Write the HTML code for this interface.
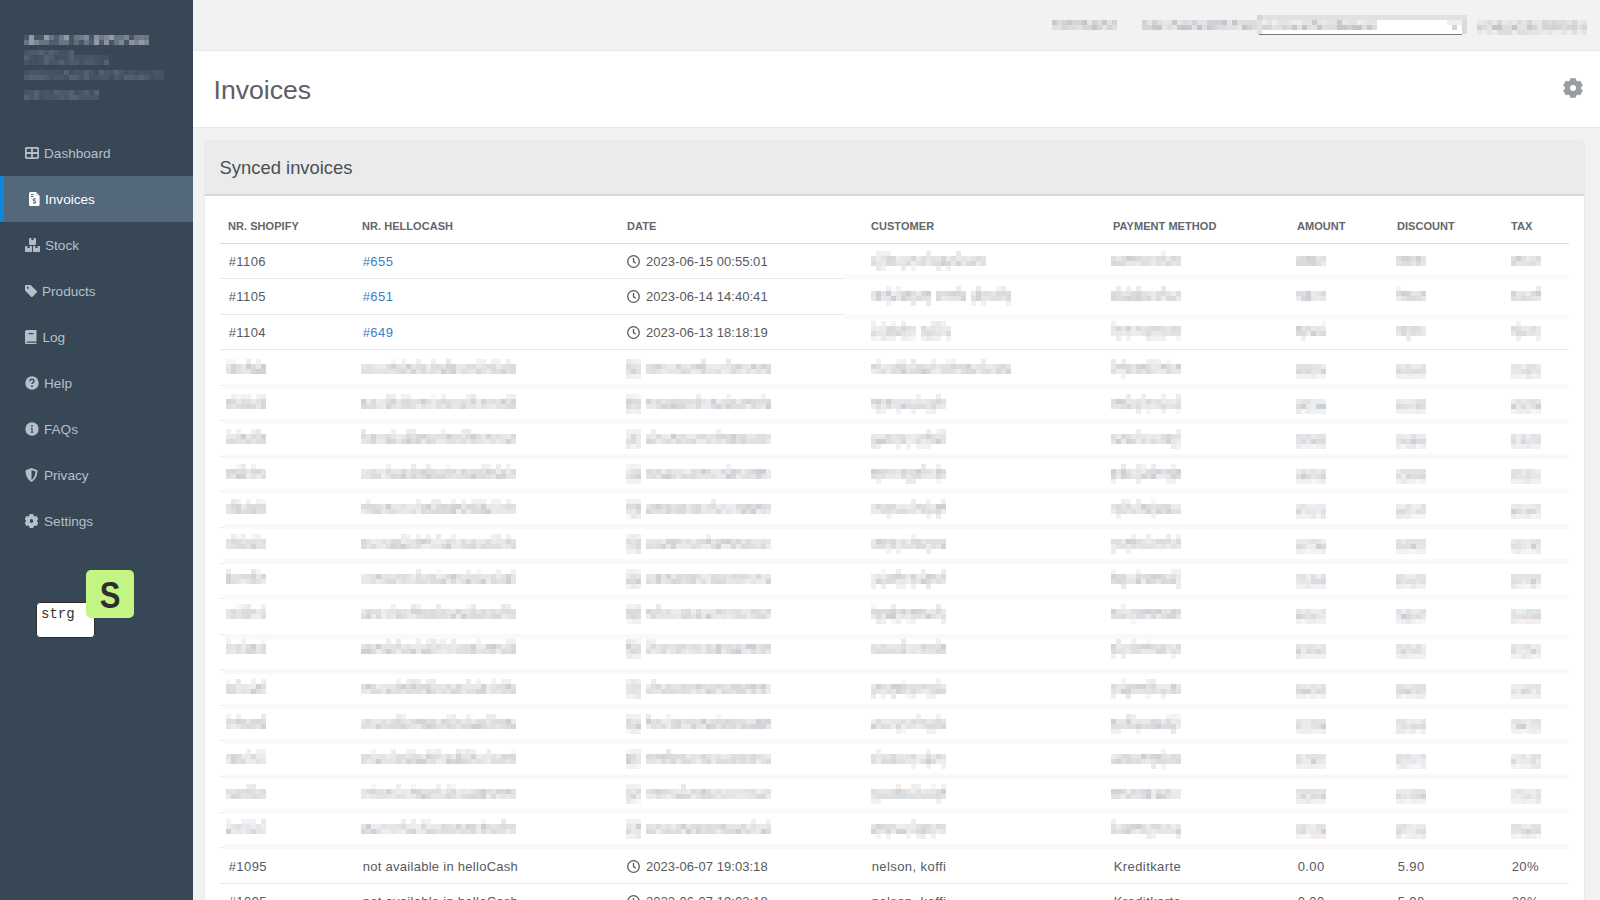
<!DOCTYPE html>
<html><head><meta charset="utf-8">
<style>
*{box-sizing:border-box;margin:0;padding:0}
html,body{width:1600px;height:900px;overflow:hidden;background:#f2f2f2;font-family:"Liberation Sans",sans-serif;color:#555}
#sidebar{position:absolute;left:0;top:0;width:193px;height:900px;background:#374756}
#sidebar .nav{position:absolute;left:0;top:130px;width:193px}
#sidebar .item{position:relative;height:46px;color:#b6c0cb;font-size:13.6px;line-height:46px}
#sidebar .item.active{background:#54687b;color:#fff}
#sidebar .item.active:before{content:"";position:absolute;left:0;top:0;width:4px;height:46px;background:#0a8ad6}
#sidebar .item svg{position:absolute}
#sidebar .item span{position:absolute;left:44px;top:1px}
#topbar{position:absolute;left:193px;top:0;width:1407px;height:51px;background:#f2f2f2;border-bottom:1px solid #e3e6ea}
#titlebar{position:absolute;left:193px;top:51px;width:1407px;height:77px;background:#fff;border-bottom:1px solid #e6e9ed}
#titlebar h1{position:absolute;left:20.5px;top:21.7px;font-weight:normal;font-size:26.6px;color:#5c6064;line-height:34px}
#panel{position:absolute;left:205px;top:140px;width:1379px;height:800px;background:#fff;border-radius:3px;box-shadow:0 1.5px 2px rgba(0,0,0,0.12)}
#panel .ph{height:56px;background:#ebebeb;border-bottom:2px solid #d9d9d9;border-radius:3px 3px 0 0;position:relative}
#panel .ph h2{position:absolute;left:14.6px;top:16px;font-weight:normal;font-size:18.4px;color:#4a4f54;line-height:24px}
table{position:absolute;left:15px;top:71px;width:1349px;border-collapse:collapse;font-size:13px;color:#555a60}
th{font-size:11px;font-weight:bold;text-align:left;padding:8px;line-height:15.71px;color:#63676c;border-bottom:1px solid #dddddd;letter-spacing:0.05px}
td{padding:9px 8px 7px 8px;text-indent:0.7px;letter-spacing:0.42px;line-height:18.571px;border-top:1px solid #e4e7ea;white-space:nowrap}
tr:first-child td{border-top:0}
tr.bl td{border-top-color:transparent}
tr.bl + tr td{border-top-color:transparent}
tr.bl:first-child td, tr.b1 td{border-top-color:#e4e7ea}
td a{color:#3a7ec2;text-decoration:none}
td.dt{letter-spacing:0.05px}
td.nh{letter-spacing:0.28px}
.clk{display:inline-block;vertical-align:-2px;margin-right:6px;margin-left:-0.7px}
#blur{position:absolute;left:0;top:0}
#keys{position:absolute;left:0;top:0}
</style></head><body>
<div id="sidebar">
<svg width="193" height="120" style="position:absolute;left:0;top:0" shape-rendering="crispEdges"><rect x="24" y="35" width="5" height="5" fill="#455668"/><rect x="29" y="35" width="5" height="5" fill="#939aa5"/><rect x="34" y="35" width="5" height="5" fill="#455668"/><rect x="39" y="35" width="5" height="5" fill="#455668"/><rect x="44" y="35" width="5" height="5" fill="#939aa5"/><rect x="49" y="35" width="5" height="5" fill="#6d7380"/><rect x="54" y="35" width="5" height="5" fill="#4e5f70"/><rect x="59" y="35" width="5" height="5" fill="#6f7b86"/><rect x="64" y="35" width="5" height="5" fill="#939aa5"/><rect x="69" y="35" width="5" height="5" fill="#455668"/><rect x="74" y="35" width="5" height="5" fill="#6d7380"/><rect x="79" y="35" width="5" height="5" fill="#6f7b86"/><rect x="84" y="35" width="5" height="5" fill="#7c8894"/><rect x="89" y="35" width="5" height="5" fill="#455668"/><rect x="94" y="35" width="5" height="5" fill="#8a939d"/><rect x="99" y="35" width="5" height="5" fill="#6f7b86"/><rect x="104" y="35" width="5" height="5" fill="#7c8894"/><rect x="109" y="35" width="5" height="5" fill="#939aa5"/><rect x="114" y="35" width="5" height="5" fill="#66757f"/><rect x="119" y="35" width="5" height="5" fill="#6d7380"/><rect x="124" y="35" width="5" height="5" fill="#7a8592"/><rect x="129" y="35" width="5" height="5" fill="#455668"/><rect x="134" y="35" width="5" height="5" fill="#6d7380"/><rect x="139" y="35" width="5" height="5" fill="#6f7b86"/><rect x="144" y="35" width="5" height="5" fill="#6d7380"/><rect x="24" y="40" width="5" height="5" fill="#66757f"/><rect x="29" y="40" width="5" height="5" fill="#939aa5"/><rect x="34" y="40" width="5" height="5" fill="#7c8894"/><rect x="39" y="40" width="5" height="5" fill="#66757f"/><rect x="44" y="40" width="5" height="5" fill="#66757f"/><rect x="49" y="40" width="5" height="5" fill="#4e5f70"/><rect x="54" y="40" width="5" height="5" fill="#4e5f70"/><rect x="59" y="40" width="5" height="5" fill="#6d7380"/><rect x="64" y="40" width="5" height="5" fill="#66757f"/><rect x="69" y="40" width="5" height="5" fill="#455668"/><rect x="74" y="40" width="5" height="5" fill="#5f6c7a"/><rect x="79" y="40" width="5" height="5" fill="#455668"/><rect x="84" y="40" width="5" height="5" fill="#6d7380"/><rect x="89" y="40" width="5" height="5" fill="#4e5f70"/><rect x="94" y="40" width="5" height="5" fill="#939aa5"/><rect x="99" y="40" width="5" height="5" fill="#4e5f70"/><rect x="104" y="40" width="5" height="5" fill="#8a939d"/><rect x="109" y="40" width="5" height="5" fill="#455668"/><rect x="114" y="40" width="5" height="5" fill="#66757f"/><rect x="119" y="40" width="5" height="5" fill="#7c8894"/><rect x="124" y="40" width="5" height="5" fill="#455668"/><rect x="129" y="40" width="5" height="5" fill="#8a939d"/><rect x="134" y="40" width="5" height="5" fill="#7a8592"/><rect x="139" y="40" width="5" height="5" fill="#939aa5"/><rect x="144" y="40" width="5" height="5" fill="#7c8894"/><rect x="24" y="50" width="5" height="5" fill="#455563"/><rect x="29" y="50" width="5" height="5" fill="#4b5b6b"/><rect x="34" y="50" width="5" height="5" fill="#4b5b6b"/><rect x="39" y="50" width="5" height="5" fill="#526273"/><rect x="44" y="50" width="5" height="5" fill="#475767"/><rect x="49" y="50" width="5" height="5" fill="#506172"/><rect x="54" y="50" width="5" height="5" fill="#4b5b6b"/><rect x="59" y="50" width="5" height="5" fill="#425364"/><rect x="64" y="50" width="5" height="5" fill="#425364"/><rect x="69" y="50" width="5" height="5" fill="#506172"/><rect x="24" y="55" width="5" height="5" fill="#526273"/><rect x="29" y="55" width="5" height="5" fill="#425364"/><rect x="34" y="55" width="5" height="5" fill="#405063"/><rect x="39" y="55" width="5" height="5" fill="#425364"/><rect x="44" y="55" width="5" height="5" fill="#526273"/><rect x="49" y="55" width="5" height="5" fill="#4b5b6b"/><rect x="54" y="55" width="5" height="5" fill="#405063"/><rect x="59" y="55" width="5" height="5" fill="#425364"/><rect x="64" y="55" width="5" height="5" fill="#425364"/><rect x="69" y="55" width="5" height="5" fill="#526273"/><rect x="74" y="55" width="5" height="5" fill="#455563"/><rect x="79" y="55" width="5" height="5" fill="#425364"/><rect x="84" y="55" width="5" height="5" fill="#475767"/><rect x="89" y="55" width="5" height="5" fill="#475767"/><rect x="94" y="55" width="5" height="5" fill="#425364"/><rect x="99" y="55" width="5" height="5" fill="#405063"/><rect x="104" y="55" width="5" height="5" fill="#405063"/><rect x="24" y="60" width="5" height="5" fill="#455563"/><rect x="29" y="60" width="5" height="5" fill="#405063"/><rect x="34" y="60" width="5" height="5" fill="#405063"/><rect x="39" y="60" width="5" height="5" fill="#425364"/><rect x="44" y="60" width="5" height="5" fill="#506172"/><rect x="49" y="60" width="5" height="5" fill="#455563"/><rect x="54" y="60" width="5" height="5" fill="#475767"/><rect x="59" y="60" width="5" height="5" fill="#526273"/><rect x="64" y="60" width="5" height="5" fill="#455563"/><rect x="69" y="60" width="5" height="5" fill="#4b5b6b"/><rect x="74" y="60" width="5" height="5" fill="#4b5b6b"/><rect x="79" y="60" width="5" height="5" fill="#425364"/><rect x="84" y="60" width="5" height="5" fill="#4b5b6b"/><rect x="89" y="60" width="5" height="5" fill="#4b5b6b"/><rect x="94" y="60" width="5" height="5" fill="#425364"/><rect x="99" y="60" width="5" height="5" fill="#405063"/><rect x="104" y="60" width="5" height="5" fill="#526273"/><rect x="24" y="70" width="5" height="5" fill="#425364"/><rect x="29" y="70" width="5" height="5" fill="#475767"/><rect x="34" y="70" width="5" height="5" fill="#475767"/><rect x="39" y="70" width="5" height="5" fill="#455563"/><rect x="44" y="70" width="5" height="5" fill="#425364"/><rect x="49" y="70" width="5" height="5" fill="#425364"/><rect x="54" y="70" width="5" height="5" fill="#425364"/><rect x="59" y="70" width="5" height="5" fill="#405063"/><rect x="64" y="70" width="5" height="5" fill="#526273"/><rect x="69" y="70" width="5" height="5" fill="#405063"/><rect x="74" y="70" width="5" height="5" fill="#475767"/><rect x="79" y="70" width="5" height="5" fill="#455563"/><rect x="84" y="70" width="5" height="5" fill="#506172"/><rect x="89" y="70" width="5" height="5" fill="#475767"/><rect x="94" y="70" width="5" height="5" fill="#405063"/><rect x="99" y="70" width="5" height="5" fill="#506172"/><rect x="104" y="70" width="5" height="5" fill="#475767"/><rect x="109" y="70" width="5" height="5" fill="#455563"/><rect x="114" y="70" width="5" height="5" fill="#526273"/><rect x="119" y="70" width="5" height="5" fill="#475767"/><rect x="124" y="70" width="5" height="5" fill="#405063"/><rect x="129" y="70" width="5" height="5" fill="#455563"/><rect x="134" y="70" width="5" height="5" fill="#405063"/><rect x="139" y="70" width="5" height="5" fill="#425364"/><rect x="144" y="70" width="5" height="5" fill="#405063"/><rect x="149" y="70" width="5" height="5" fill="#405063"/><rect x="154" y="70" width="5" height="5" fill="#475767"/><rect x="159" y="70" width="5" height="5" fill="#425364"/><rect x="24" y="75" width="5" height="5" fill="#4b5b6b"/><rect x="29" y="75" width="5" height="5" fill="#526273"/><rect x="34" y="75" width="5" height="5" fill="#526273"/><rect x="39" y="75" width="5" height="5" fill="#506172"/><rect x="44" y="75" width="5" height="5" fill="#4b5b6b"/><rect x="49" y="75" width="5" height="5" fill="#425364"/><rect x="54" y="75" width="5" height="5" fill="#475767"/><rect x="59" y="75" width="5" height="5" fill="#475767"/><rect x="64" y="75" width="5" height="5" fill="#405063"/><rect x="69" y="75" width="5" height="5" fill="#526273"/><rect x="74" y="75" width="5" height="5" fill="#506172"/><rect x="79" y="75" width="5" height="5" fill="#455563"/><rect x="84" y="75" width="5" height="5" fill="#506172"/><rect x="89" y="75" width="5" height="5" fill="#425364"/><rect x="94" y="75" width="5" height="5" fill="#425364"/><rect x="99" y="75" width="5" height="5" fill="#475767"/><rect x="104" y="75" width="5" height="5" fill="#475767"/><rect x="109" y="75" width="5" height="5" fill="#405063"/><rect x="114" y="75" width="5" height="5" fill="#4b5b6b"/><rect x="119" y="75" width="5" height="5" fill="#425364"/><rect x="124" y="75" width="5" height="5" fill="#526273"/><rect x="129" y="75" width="5" height="5" fill="#506172"/><rect x="134" y="75" width="5" height="5" fill="#4b5b6b"/><rect x="139" y="75" width="5" height="5" fill="#526273"/><rect x="144" y="75" width="5" height="5" fill="#4b5b6b"/><rect x="149" y="75" width="5" height="5" fill="#405063"/><rect x="154" y="75" width="5" height="5" fill="#425364"/><rect x="159" y="75" width="5" height="5" fill="#425364"/><rect x="24" y="90" width="5" height="5" fill="#425364"/><rect x="29" y="90" width="5" height="5" fill="#475767"/><rect x="34" y="90" width="5" height="5" fill="#506172"/><rect x="39" y="90" width="5" height="5" fill="#455563"/><rect x="44" y="90" width="5" height="5" fill="#475767"/><rect x="49" y="90" width="5" height="5" fill="#425364"/><rect x="54" y="90" width="5" height="5" fill="#506172"/><rect x="59" y="90" width="5" height="5" fill="#4b5b6b"/><rect x="64" y="90" width="5" height="5" fill="#4b5b6b"/><rect x="69" y="90" width="5" height="5" fill="#506172"/><rect x="74" y="90" width="5" height="5" fill="#405063"/><rect x="79" y="90" width="5" height="5" fill="#475767"/><rect x="84" y="90" width="5" height="5" fill="#506172"/><rect x="89" y="90" width="5" height="5" fill="#405063"/><rect x="94" y="90" width="5" height="5" fill="#526273"/><rect x="24" y="95" width="5" height="5" fill="#506172"/><rect x="29" y="95" width="5" height="5" fill="#475767"/><rect x="34" y="95" width="5" height="5" fill="#526273"/><rect x="39" y="95" width="5" height="5" fill="#405063"/><rect x="44" y="95" width="5" height="5" fill="#475767"/><rect x="49" y="95" width="5" height="5" fill="#455563"/><rect x="54" y="95" width="5" height="5" fill="#475767"/><rect x="59" y="95" width="5" height="5" fill="#4b5b6b"/><rect x="64" y="95" width="5" height="5" fill="#475767"/><rect x="69" y="95" width="5" height="5" fill="#526273"/><rect x="74" y="95" width="5" height="5" fill="#506172"/><rect x="79" y="95" width="5" height="5" fill="#475767"/><rect x="84" y="95" width="5" height="5" fill="#455563"/><rect x="89" y="95" width="5" height="5" fill="#475767"/><rect x="94" y="95" width="5" height="5" fill="#475767"/></svg>
<div class="nav">
 <div class="item"><svg style="left:25px;top:17px" width="14" height="12" viewBox="0 0 14 12"><rect x="0.8" y="0.8" width="12.4" height="10.4" rx="1.5" fill="none" stroke="#b6c0cb" stroke-width="1.8"/><path d="M7 1v10M1 6h12" stroke="#b6c0cb" stroke-width="1.8"/></svg><span>Dashboard</span></div>
 <div class="item active"><svg style="left:28.5px;top:16px" width="11" height="14" viewBox="0 0 11 14"><path d="M1.6 0H6.9L10.6 3.7V12.4A1.6 1.6 0 0 1 9 14H1.6A1.6 1.6 0 0 1 0 12.4V1.6A1.6 1.6 0 0 1 1.6 0Z" fill="#fff"/><path d="M7.2 0.6V3.4H10" fill="none" stroke="#c9d1da" stroke-width="0.7"/><rect x="2" y="2" width="2.6" height="1" fill="#54687b"/><rect x="2" y="4" width="2.6" height="1" fill="#54687b"/><path d="M6.6 7.3C6.3 6.9 5.8 6.8 5.3 6.8 4.6 6.8 4.1 7.2 4.1 7.8 4.1 8.4 4.7 8.6 5.3 8.8 6 9 6.6 9.2 6.6 9.9 6.6 10.5 6 10.9 5.3 10.9 4.8 10.9 4.3 10.7 4 10.3M5.3 6V6.8M5.3 10.9V11.7" fill="none" stroke="#54687b" stroke-width="1.1"/></svg><span style="left:45px">Invoices</span></div>
 <div class="item"><svg style="left:25px;top:16px" width="15" height="14" viewBox="0 0 15 14"><path d="M4.8 0h1.6v2h2.2V0h1.6a.8.8 0 0 1 .8.8v5.4a.8.8 0 0 1-.8.8H4.8a.8.8 0 0 1-.8-.8V.8a.8.8 0 0 1 .8-.8zM.8 8h1.6v2h2.2V8h1.6a.8.8 0 0 1 .8.8v4.4a.8.8 0 0 1-.8.8H.8a.8.8 0 0 1-.8-.8V8.8A.8.8 0 0 1 .8 8zM8.8 8h1.6v2h2.2V8h1.6a.8.8 0 0 1 .8.8v4.4a.8.8 0 0 1-.8.8H8.8a.8.8 0 0 1-.8-.8V8.8a.8.8 0 0 1 .8-.8z" fill="#b0bbc8"/></svg><span style="left:45px">Stock</span></div>
 <div class="item"><svg style="left:25px;top:17px" width="12" height="12" viewBox="0 0 12 12"><path d="M0 1a1 1 0 0 1 1-1h4.6l6.1 6.1a1 1 0 0 1 0 1.4l-4.2 4.2a1 1 0 0 1-1.4 0L0 5.6z" fill="#b6c0cb"/><circle cx="2.8" cy="2.8" r="1" fill="#374756"/></svg><span style="left:42px">Products</span></div>
 <div class="item"><svg style="left:25px;top:16px" width="12" height="14" viewBox="0 0 12 14"><path d="M1.5 0h10v11.5h-9.5a.8.8 0 0 0 0 1.3h9.5v1.2h-10a1.5 1.5 0 0 1-1.5-1.5v-11a1.5 1.5 0 0 1 1.5-1.5z" fill="#b6c0cb"/><rect x="3.5" y="3" width="5" height="1.2" fill="#374756"/></svg><span style="left:42.5px">Log</span></div>
 <div class="item"><svg style="left:25px;top:16px" width="14" height="14" viewBox="0 0 14 14"><circle cx="7" cy="7" r="6.7" fill="#b6c0cb"/><path d="M5 5.3a2 2 0 0 1 4 0c0 1.3-2 1.4-2 2.7" stroke="#374756" stroke-width="1.4" fill="none"/><circle cx="7" cy="10.2" r=".9" fill="#374756"/></svg><span>Help</span></div>
 <div class="item"><svg style="left:25px;top:16px" width="14" height="14" viewBox="0 0 14 14"><circle cx="7" cy="7" r="6.7" fill="#b6c0cb"/><circle cx="7" cy="4" r=".9" fill="#374756"/><path d="M5.8 6h1.8v3.8h.8v.9H5.6v-.9h.9V6.9h-.7z" fill="#374756"/></svg><span>FAQs</span></div>
 <div class="item"><svg style="left:25px;top:16px" width="13" height="14" viewBox="0 0 13 14"><path d="M6.5 0l6 2.2c0 5.3-2.2 9.5-6 11.8-3.8-2.3-6-6.5-6-11.8z" fill="#b6c0cb"/><path d="M6.5 2l4 1.5c-.2 3.7-1.6 6.8-4 8.6z" fill="#374756"/></svg><span>Privacy</span></div>
 <div class="item"><svg style="left:25px;top:16px" width="13" height="14" viewBox="0 0 13 14"><path d="M4.10 2.00L4.80 0.10L8.20 0.10L8.90 2.00A5 5 0 0 1 9.63 2.42L11.63 2.08L13.33 5.02L12.03 6.58A5 5 0 0 1 12.03 7.42L13.33 8.98L11.63 11.92L9.63 11.58A5 5 0 0 1 8.90 12.00L8.20 13.90L4.80 13.90L4.10 12.00A5 5 0 0 1 3.37 11.58L1.37 11.92L-0.33 8.98L0.97 7.42A5 5 0 0 1 0.97 6.58L-0.33 5.02L1.37 2.08L3.37 2.42A5 5 0 0 1 4.10 2.00Z" fill="#b6c0cb"/><ellipse cx="6.5" cy="7" rx="1.7" ry="2" fill="#374756"/></svg><span>Settings</span></div>
</div>
<div style="position:absolute;left:36px;top:602px;width:59px;height:36px;background:#fff;border:1px solid #2f2f2f;border-radius:4px"><span style="position:absolute;left:4px;top:2px;font-family:'Liberation Mono',monospace;font-size:14px;color:#333;line-height:18px">strg</span></div>
<div style="position:absolute;left:86px;top:570px;width:48px;height:48px;background:#c2f584;border-radius:5px;text-align:center"><span style="position:absolute;left:0;width:48px;top:6px;font-size:36px;line-height:40px;color:#2e2e2e;font-weight:bold;transform:scaleX(0.86)">S</span></div>
</div>

<div id="topbar"><svg width="1407" height="50" style="position:absolute;left:-193px;top:0;overflow:visible" shape-rendering="crispEdges">
<rect x="1257" y="15" width="210" height="19" fill="#e1e1e1"/><rect x="1257" y="15" width="5" height="5" fill="#d4d4d4"/><rect x="1462" y="20" width="5" height="14" fill="#dadada"/><rect x="1262" y="20" width="200" height="14" fill="#fff"/>
<rect x="1052" y="20" width="5" height="5" fill="#c8c9cd"/><rect x="1057" y="20" width="5" height="5" fill="#dcdcdc"/><rect x="1062" y="20" width="5" height="5" fill="#d4d4d6"/><rect x="1067" y="20" width="5" height="5" fill="#c8c9cd"/><rect x="1072" y="20" width="5" height="5" fill="#d8d4d0"/><rect x="1077" y="20" width="5" height="5" fill="#d8d4d0"/><rect x="1082" y="20" width="5" height="5" fill="#c4c6cb"/><rect x="1087" y="20" width="5" height="5" fill="#e6e6e6"/><rect x="1092" y="20" width="5" height="5" fill="#cfd2d6"/><rect x="1097" y="20" width="5" height="5" fill="#e0dfdd"/><rect x="1102" y="20" width="5" height="5" fill="#c8c9cd"/><rect x="1107" y="20" width="5" height="5" fill="#dfe2e6"/><rect x="1112" y="20" width="5" height="5" fill="#d4d4d6"/><rect x="1052" y="25" width="5" height="5" fill="#e0dfdd"/><rect x="1057" y="25" width="5" height="5" fill="#dfe2e6"/><rect x="1062" y="25" width="5" height="5" fill="#d4d4d6"/><rect x="1067" y="25" width="5" height="5" fill="#dcdcdc"/><rect x="1072" y="25" width="5" height="5" fill="#dcdcdc"/><rect x="1077" y="25" width="5" height="5" fill="#dfe2e6"/><rect x="1082" y="25" width="5" height="5" fill="#d8d4d0"/><rect x="1087" y="25" width="5" height="5" fill="#d4d4d6"/><rect x="1092" y="25" width="5" height="5" fill="#c4c6cb"/><rect x="1097" y="25" width="5" height="5" fill="#d8d4d0"/><rect x="1102" y="25" width="5" height="5" fill="#e6e6e6"/><rect x="1107" y="25" width="5" height="5" fill="#d4d4d6"/><rect x="1112" y="25" width="5" height="5" fill="#e0dfdd"/><rect x="1142" y="20" width="5" height="5" fill="#d4d4d6"/><rect x="1147" y="20" width="5" height="5" fill="#e6e6e6"/><rect x="1152" y="20" width="5" height="5" fill="#cfd2d6"/><rect x="1157" y="20" width="5" height="5" fill="#e0dfdd"/><rect x="1162" y="20" width="5" height="5" fill="#e6e6e6"/><rect x="1167" y="20" width="5" height="5" fill="#e6e6e6"/><rect x="1172" y="20" width="5" height="5" fill="#c8c9cd"/><rect x="1177" y="20" width="5" height="5" fill="#e6e6e6"/><rect x="1182" y="20" width="5" height="5" fill="#dcdcdc"/><rect x="1187" y="20" width="5" height="5" fill="#dfe2e6"/><rect x="1192" y="20" width="5" height="5" fill="#cfd2d6"/><rect x="1197" y="20" width="5" height="5" fill="#dfe2e6"/><rect x="1202" y="20" width="5" height="5" fill="#dfe2e6"/><rect x="1207" y="20" width="5" height="5" fill="#cfd2d6"/><rect x="1212" y="20" width="5" height="5" fill="#cfd2d6"/><rect x="1217" y="20" width="5" height="5" fill="#cfd2d6"/><rect x="1222" y="20" width="5" height="5" fill="#c4c6cb"/><rect x="1227" y="20" width="5" height="5" fill="#e6e6e6"/><rect x="1232" y="20" width="5" height="5" fill="#c4c6cb"/><rect x="1237" y="20" width="5" height="5" fill="#e0dfdd"/><rect x="1242" y="20" width="5" height="5" fill="#dcdcdc"/><rect x="1247" y="20" width="5" height="5" fill="#dcdcdc"/><rect x="1252" y="20" width="5" height="5" fill="#dcdcdc"/><rect x="1142" y="25" width="5" height="5" fill="#d8d4d0"/><rect x="1147" y="25" width="5" height="5" fill="#d4d4d6"/><rect x="1152" y="25" width="5" height="5" fill="#c8c9cd"/><rect x="1157" y="25" width="5" height="5" fill="#c8c9cd"/><rect x="1162" y="25" width="5" height="5" fill="#e6e6e6"/><rect x="1167" y="25" width="5" height="5" fill="#dcdcdc"/><rect x="1172" y="25" width="5" height="5" fill="#e6e6e6"/><rect x="1177" y="25" width="5" height="5" fill="#c8c9cd"/><rect x="1182" y="25" width="5" height="5" fill="#c4c6cb"/><rect x="1187" y="25" width="5" height="5" fill="#c8c9cd"/><rect x="1192" y="25" width="5" height="5" fill="#dfe2e6"/><rect x="1197" y="25" width="5" height="5" fill="#c4c6cb"/><rect x="1202" y="25" width="5" height="5" fill="#e0dfdd"/><rect x="1207" y="25" width="5" height="5" fill="#c8c9cd"/><rect x="1212" y="25" width="5" height="5" fill="#cfd2d6"/><rect x="1217" y="25" width="5" height="5" fill="#dcdcdc"/><rect x="1222" y="25" width="5" height="5" fill="#dcdcdc"/><rect x="1227" y="25" width="5" height="5" fill="#dfe2e6"/><rect x="1232" y="25" width="5" height="5" fill="#e0dfdd"/><rect x="1237" y="25" width="5" height="5" fill="#e6e6e6"/><rect x="1242" y="25" width="5" height="5" fill="#c4c6cb"/><rect x="1247" y="25" width="5" height="5" fill="#cfd2d6"/><rect x="1252" y="25" width="5" height="5" fill="#dcdcdc"/><rect x="1262" y="20" width="5" height="5" fill="#eeeeee"/><rect x="1267" y="20" width="5" height="5" fill="#e6e4e2"/><rect x="1272" y="20" width="5" height="5" fill="#eeeeee"/><rect x="1277" y="20" width="5" height="5" fill="#e4e4e4"/><rect x="1282" y="20" width="5" height="5" fill="#e4e4e4"/><rect x="1287" y="20" width="5" height="5" fill="#e8e8ea"/><rect x="1292" y="20" width="5" height="5" fill="#eeeeee"/><rect x="1297" y="20" width="5" height="5" fill="#eeeeee"/><rect x="1302" y="20" width="5" height="5" fill="#e4e4e4"/><rect x="1307" y="20" width="5" height="5" fill="#e6e4e2"/><rect x="1312" y="20" width="5" height="5" fill="#c9cad0"/><rect x="1317" y="20" width="5" height="5" fill="#e6e4e2"/><rect x="1322" y="20" width="5" height="5" fill="#e8e8ea"/><rect x="1327" y="20" width="5" height="5" fill="#e4e4e4"/><rect x="1332" y="20" width="5" height="5" fill="#e6e4e2"/><rect x="1337" y="20" width="5" height="5" fill="#c9cad0"/><rect x="1342" y="20" width="5" height="5" fill="#e8e8ea"/><rect x="1347" y="20" width="5" height="5" fill="#e4e4e4"/><rect x="1352" y="20" width="5" height="5" fill="#e4e2e0"/><rect x="1357" y="20" width="5" height="5" fill="#eeeeee"/><rect x="1362" y="20" width="5" height="5" fill="#e8e8ea"/><rect x="1367" y="20" width="5" height="5" fill="#e4e4e4"/><rect x="1372" y="20" width="5" height="5" fill="#e2e6e8"/><rect x="1262" y="25" width="5" height="5" fill="#d4d4d6"/><rect x="1267" y="25" width="5" height="5" fill="#d8d4d0"/><rect x="1272" y="25" width="5" height="5" fill="#dfe2e6"/><rect x="1277" y="25" width="5" height="5" fill="#e0dfdd"/><rect x="1282" y="25" width="5" height="5" fill="#d4d4d6"/><rect x="1287" y="25" width="5" height="5" fill="#dcdcdc"/><rect x="1292" y="25" width="5" height="5" fill="#c8c9cd"/><rect x="1297" y="25" width="5" height="5" fill="#dfe2e6"/><rect x="1302" y="25" width="5" height="5" fill="#c4c6cb"/><rect x="1307" y="25" width="5" height="5" fill="#e0dfdd"/><rect x="1312" y="25" width="5" height="5" fill="#dfe2e6"/><rect x="1317" y="25" width="5" height="5" fill="#c8c9cd"/><rect x="1322" y="25" width="5" height="5" fill="#e0dfdd"/><rect x="1327" y="25" width="5" height="5" fill="#dcdcdc"/><rect x="1332" y="25" width="5" height="5" fill="#dcdcdc"/><rect x="1337" y="25" width="5" height="5" fill="#c4c6cb"/><rect x="1342" y="25" width="5" height="5" fill="#c4c6cb"/><rect x="1347" y="25" width="5" height="5" fill="#cfd2d6"/><rect x="1352" y="25" width="5" height="5" fill="#c4c6cb"/><rect x="1357" y="25" width="5" height="5" fill="#c4c6cb"/><rect x="1362" y="25" width="5" height="5" fill="#e0dfdd"/><rect x="1367" y="25" width="5" height="5" fill="#c8c9cd"/><rect x="1372" y="25" width="5" height="5" fill="#dcdcdc"/><rect x="1477" y="20" width="5" height="5" fill="#e8e8e8"/><rect x="1482" y="20" width="5" height="5" fill="#e4e4e4"/><rect x="1487" y="20" width="5" height="5" fill="#dcdcdc"/><rect x="1492" y="20" width="5" height="5" fill="#e8e8e8"/><rect x="1497" y="20" width="5" height="5" fill="#d4d6da"/><rect x="1502" y="20" width="5" height="5" fill="#e8e8e8"/><rect x="1507" y="20" width="5" height="5" fill="#e4e4e4"/><rect x="1512" y="20" width="5" height="5" fill="#e8e8e8"/><rect x="1517" y="20" width="5" height="5" fill="#dcdcdc"/><rect x="1522" y="20" width="5" height="5" fill="#e4e4e4"/><rect x="1527" y="20" width="5" height="5" fill="#d4d6da"/><rect x="1532" y="20" width="5" height="5" fill="#e8e8e8"/><rect x="1537" y="20" width="5" height="5" fill="#e8e8e8"/><rect x="1542" y="20" width="5" height="5" fill="#d4d6da"/><rect x="1547" y="20" width="5" height="5" fill="#dcdcdc"/><rect x="1552" y="20" width="5" height="5" fill="#d4d6da"/><rect x="1557" y="20" width="5" height="5" fill="#dcdcdc"/><rect x="1562" y="20" width="5" height="5" fill="#dcdcdc"/><rect x="1567" y="20" width="5" height="5" fill="#e4e4e4"/><rect x="1572" y="20" width="5" height="5" fill="#d4d6da"/><rect x="1577" y="20" width="5" height="5" fill="#e8e8e8"/><rect x="1582" y="20" width="5" height="5" fill="#e4e4e4"/><rect x="1477" y="25" width="5" height="5" fill="#cfd2d6"/><rect x="1482" y="25" width="5" height="5" fill="#dcdcdc"/><rect x="1487" y="25" width="5" height="5" fill="#e6e6e6"/><rect x="1492" y="25" width="5" height="5" fill="#c4c6cb"/><rect x="1497" y="25" width="5" height="5" fill="#c4c6cb"/><rect x="1502" y="25" width="5" height="5" fill="#dcdcdc"/><rect x="1507" y="25" width="5" height="5" fill="#e0dfdd"/><rect x="1512" y="25" width="5" height="5" fill="#c4c6cb"/><rect x="1517" y="25" width="5" height="5" fill="#dfe2e6"/><rect x="1522" y="25" width="5" height="5" fill="#dfe2e6"/><rect x="1527" y="25" width="5" height="5" fill="#c8c9cd"/><rect x="1532" y="25" width="5" height="5" fill="#d4d4d6"/><rect x="1537" y="25" width="5" height="5" fill="#e6e6e6"/><rect x="1542" y="25" width="5" height="5" fill="#d8d4d0"/><rect x="1547" y="25" width="5" height="5" fill="#d4d4d6"/><rect x="1552" y="25" width="5" height="5" fill="#cfd2d6"/><rect x="1557" y="25" width="5" height="5" fill="#d8d4d0"/><rect x="1562" y="25" width="5" height="5" fill="#e0dfdd"/><rect x="1567" y="25" width="5" height="5" fill="#d4d4d6"/><rect x="1572" y="25" width="5" height="5" fill="#cfd2d6"/><rect x="1577" y="25" width="5" height="5" fill="#dfe2e6"/><rect x="1582" y="25" width="5" height="5" fill="#d8d4d0"/><rect x="1477" y="30" width="5" height="5" fill="#e6e6e6"/><rect x="1482" y="30" width="5" height="5" fill="#eeeeee"/><rect x="1487" y="30" width="5" height="5" fill="#e2e4e6"/><rect x="1492" y="30" width="5" height="5" fill="#eeeeee"/><rect x="1497" y="30" width="5" height="5" fill="#dedede"/><rect x="1502" y="30" width="5" height="5" fill="#dedede"/><rect x="1507" y="30" width="5" height="5" fill="#dedede"/><rect x="1512" y="30" width="5" height="5" fill="#ebebeb"/><rect x="1517" y="30" width="5" height="5" fill="#dedede"/><rect x="1522" y="30" width="5" height="5" fill="#dedede"/><rect x="1527" y="30" width="5" height="5" fill="#e2e4e6"/><rect x="1532" y="30" width="5" height="5" fill="#e2e4e6"/><rect x="1537" y="30" width="5" height="5" fill="#e6e6e6"/><rect x="1542" y="30" width="5" height="5" fill="#ebebeb"/><rect x="1547" y="30" width="5" height="5" fill="#e6e6e6"/><rect x="1552" y="30" width="5" height="5" fill="#eeeeee"/><rect x="1557" y="30" width="5" height="5" fill="#eeeeee"/><rect x="1562" y="30" width="5" height="5" fill="#e6e6e6"/><rect x="1567" y="30" width="5" height="5" fill="#eeeeee"/><rect x="1572" y="30" width="5" height="5" fill="#dedede"/><rect x="1577" y="30" width="5" height="5" fill="#eeeeee"/><rect x="1582" y="30" width="5" height="5" fill="#e2e4e6"/>
<rect x="1447" y="20" width="15" height="5" fill="#eef0ef"/><rect x="1452" y="25" width="5" height="5" fill="#d3d5d9"/>
<rect x="1259" y="34" width="203" height="1" fill="#777"/>
</svg></div>

<div id="titlebar"><h1>Invoices</h1>
<svg style="position:absolute;left:1370px;top:27px" width="20" height="20" viewBox="0 0 20 20"><path d="M6.70 2.90L7.60 0.40L12.40 0.40L13.30 2.90A7.1 7.1 0 0 1 14.50 3.59L17.11 3.12L19.51 7.28L17.80 9.31A7.1 7.1 0 0 1 17.80 10.69L19.51 12.72L17.11 16.88L14.50 16.41A7.1 7.1 0 0 1 13.30 17.10L12.40 19.60L7.60 19.60L6.70 17.10A7.1 7.1 0 0 1 5.50 16.41L2.89 16.88L0.49 12.72L2.20 10.69A7.1 7.1 0 0 1 2.20 9.31L0.49 7.28L2.89 3.12L5.50 3.59A7.1 7.1 0 0 1 6.70 2.90Z" stroke="#999da1" stroke-width="0.6" stroke-linejoin="round" fill="#999da1"/><circle cx="10" cy="10" r="3.0" fill="#fff"/></svg>
</div>

<div id="panel">
 <div class="ph"><h2>Synced invoices</h2></div>
 <table>
  <thead><tr><th style="width:134px">NR. SHOPIFY</th><th style="width:265px">NR. HELLOCASH</th><th style="width:244px">DATE</th><th style="width:242px">CUSTOMER</th><th style="width:184px">PAYMENT METHOD</th><th style="width:100px">AMOUNT</th><th style="width:114px">DISCOUNT</th><th>TAX</th></tr></thead>
  <tbody>
<tr><td>#1106</td><td><a>#655</a></td><td class="dt"><svg class="clk" width="13" height="13" viewBox="0 0 13 13"><circle cx="6.5" cy="6.5" r="5.8" fill="none" stroke="#555a60" stroke-width="1.3"/><path d="M6.5 3v3.6l2.3 1.6" fill="none" stroke="#555a60" stroke-width="1.3"/></svg>2023-06-15 00:55:01</td><td></td><td></td><td></td><td></td><td></td></tr>
<tr><td>#1105</td><td><a>#651</a></td><td class="dt"><svg class="clk" width="13" height="13" viewBox="0 0 13 13"><circle cx="6.5" cy="6.5" r="5.8" fill="none" stroke="#555a60" stroke-width="1.3"/><path d="M6.5 3v3.6l2.3 1.6" fill="none" stroke="#555a60" stroke-width="1.3"/></svg>2023-06-14 14:40:41</td><td></td><td></td><td></td><td></td><td></td></tr>
<tr><td>#1104</td><td><a>#649</a></td><td class="dt"><svg class="clk" width="13" height="13" viewBox="0 0 13 13"><circle cx="6.5" cy="6.5" r="5.8" fill="none" stroke="#555a60" stroke-width="1.3"/><path d="M6.5 3v3.6l2.3 1.6" fill="none" stroke="#555a60" stroke-width="1.3"/></svg>2023-06-13 18:18:19</td><td></td><td></td><td></td><td></td><td></td></tr>
<tr class="bl b1"><td>&nbsp;</td><td></td><td></td><td></td><td></td><td></td><td></td><td></td></tr>
<tr class="bl"><td>&nbsp;</td><td></td><td></td><td></td><td></td><td></td><td></td><td></td></tr>
<tr class="bl"><td>&nbsp;</td><td></td><td></td><td></td><td></td><td></td><td></td><td></td></tr>
<tr class="bl"><td>&nbsp;</td><td></td><td></td><td></td><td></td><td></td><td></td><td></td></tr>
<tr class="bl"><td>&nbsp;</td><td></td><td></td><td></td><td></td><td></td><td></td><td></td></tr>
<tr class="bl"><td>&nbsp;</td><td></td><td></td><td></td><td></td><td></td><td></td><td></td></tr>
<tr class="bl"><td>&nbsp;</td><td></td><td></td><td></td><td></td><td></td><td></td><td></td></tr>
<tr class="bl"><td>&nbsp;</td><td></td><td></td><td></td><td></td><td></td><td></td><td></td></tr>
<tr class="bl"><td>&nbsp;</td><td></td><td></td><td></td><td></td><td></td><td></td><td></td></tr>
<tr class="bl"><td>&nbsp;</td><td></td><td></td><td></td><td></td><td></td><td></td><td></td></tr>
<tr class="bl"><td>&nbsp;</td><td></td><td></td><td></td><td></td><td></td><td></td><td></td></tr>
<tr class="bl"><td>&nbsp;</td><td></td><td></td><td></td><td></td><td></td><td></td><td></td></tr>
<tr class="bl"><td>&nbsp;</td><td></td><td></td><td></td><td></td><td></td><td></td><td></td></tr>
<tr class="bl"><td>&nbsp;</td><td></td><td></td><td></td><td></td><td></td><td></td><td></td></tr>
<tr><td>#1095</td><td class="nh">not available in helloCash</td><td class="dt"><svg class="clk" width="13" height="13" viewBox="0 0 13 13"><circle cx="6.5" cy="6.5" r="5.8" fill="none" stroke="#555a60" stroke-width="1.3"/><path d="M6.5 3v3.6l2.3 1.6" fill="none" stroke="#555a60" stroke-width="1.3"/></svg>2023-06-07 19:03:18</td><td>nelson, koffi</td><td>Kreditkarte</td><td>0.00</td><td>5.90</td><td>20%</td></tr>
<tr><td>#1095</td><td class="nh">not available in helloCash</td><td class="dt"><svg class="clk" width="13" height="13" viewBox="0 0 13 13"><circle cx="6.5" cy="6.5" r="5.8" fill="none" stroke="#555a60" stroke-width="1.3"/><path d="M6.5 3v3.6l2.3 1.6" fill="none" stroke="#555a60" stroke-width="1.3"/></svg>2023-06-07 19:03:18</td><td>nelson, koffi</td><td>Kreditkarte</td><td>0.00</td><td>5.90</td><td>20%</td></tr>
  </tbody>
 </table>
</div>
<svg id="blur" width="1600" height="900" shape-rendering="crispEdges"><rect x="871" y="256" width="5" height="5" fill="#e4e4e4"/><rect x="871" y="261" width="5" height="5" fill="#e2dfdc"/><rect x="876" y="251" width="5" height="5" fill="#f2f2f2"/><rect x="876" y="256" width="5" height="5" fill="#eaeef3"/><rect x="876" y="261" width="5" height="5" fill="#e4e6ea"/><rect x="876" y="266" width="5" height="5" fill="#e9e9ea"/><rect x="881" y="251" width="5" height="5" fill="#f4f1ee"/><rect x="881" y="256" width="5" height="5" fill="#e4e4e4"/><rect x="881" y="261" width="5" height="5" fill="#ece9e6"/><rect x="881" y="266" width="5" height="5" fill="#f2f2f2"/><rect x="886" y="251" width="5" height="5" fill="#eef1f5"/><rect x="886" y="256" width="5" height="5" fill="#d6d8dc"/><rect x="886" y="261" width="5" height="5" fill="#dcdcdc"/><rect x="891" y="256" width="5" height="5" fill="#dedad7"/><rect x="891" y="261" width="5" height="5" fill="#dadcdf"/><rect x="896" y="256" width="5" height="5" fill="#eaeef3"/><rect x="896" y="261" width="5" height="5" fill="#e6e6e6"/><rect x="901" y="256" width="5" height="5" fill="#e8e8e8"/><rect x="901" y="261" width="5" height="5" fill="#e4e6ea"/><rect x="901" y="266" width="5" height="5" fill="#ececec"/><rect x="906" y="256" width="5" height="5" fill="#e6e6e6"/><rect x="906" y="261" width="5" height="5" fill="#dadcdf"/><rect x="911" y="256" width="5" height="5" fill="#d6d8dc"/><rect x="911" y="261" width="5" height="5" fill="#eaeef3"/><rect x="911" y="266" width="5" height="5" fill="#f4f1ee"/><rect x="916" y="256" width="5" height="5" fill="#eaebec"/><rect x="916" y="261" width="5" height="5" fill="#e0e2e4"/><rect x="921" y="256" width="5" height="5" fill="#dadcdf"/><rect x="921" y="261" width="5" height="5" fill="#dfdfdf"/><rect x="926" y="251" width="5" height="5" fill="#ececec"/><rect x="926" y="256" width="5" height="5" fill="#e6e6e6"/><rect x="926" y="261" width="5" height="5" fill="#ece9e6"/><rect x="931" y="256" width="5" height="5" fill="#e0e2e4"/><rect x="931" y="261" width="5" height="5" fill="#e2dfdc"/><rect x="936" y="256" width="5" height="5" fill="#e4e6ea"/><rect x="936" y="261" width="5" height="5" fill="#dfdfdf"/><rect x="936" y="266" width="5" height="5" fill="#f3ece8"/><rect x="941" y="256" width="5" height="5" fill="#d6d8dc"/><rect x="941" y="261" width="5" height="5" fill="#cdd0d5"/><rect x="946" y="256" width="5" height="5" fill="#ece9e6"/><rect x="946" y="261" width="5" height="5" fill="#d6d8dc"/><rect x="946" y="266" width="5" height="5" fill="#eef1f5"/><rect x="951" y="256" width="5" height="5" fill="#dfdfdf"/><rect x="951" y="261" width="5" height="5" fill="#e8e8e8"/><rect x="956" y="251" width="5" height="5" fill="#e9e9ea"/><rect x="956" y="256" width="5" height="5" fill="#eaebec"/><rect x="956" y="261" width="5" height="5" fill="#d2d4d8"/><rect x="961" y="256" width="5" height="5" fill="#e6e6e6"/><rect x="961" y="261" width="5" height="5" fill="#ece9e6"/><rect x="966" y="256" width="5" height="5" fill="#ece9e6"/><rect x="966" y="261" width="5" height="5" fill="#dadcdf"/><rect x="971" y="256" width="5" height="5" fill="#e4e4e4"/><rect x="971" y="261" width="5" height="5" fill="#d6d8dc"/><rect x="976" y="256" width="5" height="5" fill="#dadcdf"/><rect x="976" y="261" width="5" height="5" fill="#ece9e6"/><rect x="981" y="256" width="5" height="5" fill="#e0e2e4"/><rect x="981" y="261" width="5" height="5" fill="#e2dfdc"/><rect x="1111" y="256" width="5" height="5" fill="#dfdfdf"/><rect x="1111" y="261" width="5" height="5" fill="#d6d8dc"/><rect x="1116" y="256" width="5" height="5" fill="#e8e8e8"/><rect x="1116" y="261" width="5" height="5" fill="#dedad7"/><rect x="1121" y="256" width="5" height="5" fill="#dedfe1"/><rect x="1121" y="261" width="5" height="5" fill="#dcdcdc"/><rect x="1126" y="256" width="5" height="5" fill="#cdd0d5"/><rect x="1126" y="261" width="5" height="5" fill="#e8e8e8"/><rect x="1131" y="256" width="5" height="5" fill="#d2d4d8"/><rect x="1131" y="261" width="5" height="5" fill="#e4e6ea"/><rect x="1136" y="256" width="5" height="5" fill="#dedad7"/><rect x="1136" y="261" width="5" height="5" fill="#ece9e6"/><rect x="1141" y="256" width="5" height="5" fill="#e0e2e4"/><rect x="1141" y="261" width="5" height="5" fill="#dedfe1"/><rect x="1146" y="256" width="5" height="5" fill="#e0e2e4"/><rect x="1146" y="261" width="5" height="5" fill="#e0e2e4"/><rect x="1151" y="256" width="5" height="5" fill="#e4e6ea"/><rect x="1151" y="261" width="5" height="5" fill="#eaebec"/><rect x="1156" y="256" width="5" height="5" fill="#dedfe1"/><rect x="1156" y="261" width="5" height="5" fill="#e0e2e4"/><rect x="1161" y="251" width="5" height="5" fill="#f4f1ee"/><rect x="1161" y="256" width="5" height="5" fill="#dedad7"/><rect x="1161" y="261" width="5" height="5" fill="#e8e8e8"/><rect x="1166" y="256" width="5" height="5" fill="#ece9e6"/><rect x="1166" y="261" width="5" height="5" fill="#dadcdf"/><rect x="1171" y="256" width="5" height="5" fill="#d6d8dc"/><rect x="1171" y="261" width="5" height="5" fill="#e6e6e6"/><rect x="1176" y="256" width="5" height="5" fill="#dfdfdf"/><rect x="1176" y="261" width="5" height="5" fill="#e0e2e4"/><rect x="1296" y="256" width="5" height="5" fill="#e2dfdc"/><rect x="1296" y="261" width="5" height="5" fill="#d6d8dc"/><rect x="1301" y="256" width="5" height="5" fill="#dedad7"/><rect x="1301" y="261" width="5" height="5" fill="#dedad7"/><rect x="1306" y="256" width="5" height="5" fill="#cdd0d5"/><rect x="1306" y="261" width="5" height="5" fill="#d6d8dc"/><rect x="1311" y="256" width="5" height="5" fill="#d2d4d8"/><rect x="1311" y="261" width="5" height="5" fill="#d2d4d8"/><rect x="1316" y="256" width="5" height="5" fill="#e6e6e6"/><rect x="1316" y="261" width="5" height="5" fill="#dedfe1"/><rect x="1321" y="256" width="5" height="5" fill="#e2dfdc"/><rect x="1321" y="261" width="5" height="5" fill="#eaebec"/><rect x="1396" y="256" width="5" height="5" fill="#e2dfdc"/><rect x="1396" y="261" width="5" height="5" fill="#e4e4e4"/><rect x="1401" y="256" width="5" height="5" fill="#d2d4d8"/><rect x="1401" y="261" width="5" height="5" fill="#dedfe1"/><rect x="1406" y="256" width="5" height="5" fill="#d2d4d8"/><rect x="1406" y="261" width="5" height="5" fill="#dedad7"/><rect x="1411" y="256" width="5" height="5" fill="#dfdfdf"/><rect x="1411" y="261" width="5" height="5" fill="#e4e6ea"/><rect x="1416" y="256" width="5" height="5" fill="#cdd0d5"/><rect x="1416" y="261" width="5" height="5" fill="#dedad7"/><rect x="1421" y="256" width="5" height="5" fill="#e6e6e6"/><rect x="1421" y="261" width="5" height="5" fill="#e4e6ea"/><rect x="1511" y="256" width="5" height="5" fill="#e2dfdc"/><rect x="1511" y="261" width="5" height="5" fill="#d6d8dc"/><rect x="1516" y="256" width="5" height="5" fill="#cdd0d5"/><rect x="1516" y="261" width="5" height="5" fill="#e6e6e6"/><rect x="1521" y="256" width="5" height="5" fill="#dfdfdf"/><rect x="1521" y="261" width="5" height="5" fill="#e4e6ea"/><rect x="1526" y="256" width="5" height="5" fill="#eaebec"/><rect x="1526" y="261" width="5" height="5" fill="#e0e2e4"/><rect x="1531" y="256" width="5" height="5" fill="#e6e6e6"/><rect x="1531" y="261" width="5" height="5" fill="#dedfe1"/><rect x="1536" y="256" width="5" height="5" fill="#dadcdf"/><rect x="1536" y="261" width="5" height="5" fill="#e4e6ea"/><rect x="871" y="291" width="5" height="5" fill="#e4e4e4"/><rect x="871" y="296" width="5" height="5" fill="#e8e8e8"/><rect x="876" y="291" width="5" height="5" fill="#cdd0d5"/><rect x="876" y="296" width="5" height="5" fill="#d2d4d8"/><rect x="881" y="291" width="5" height="5" fill="#e4e4e4"/><rect x="881" y="296" width="5" height="5" fill="#e8e8e8"/><rect x="886" y="286" width="5" height="5" fill="#f0f0f0"/><rect x="886" y="291" width="5" height="5" fill="#cdd0d5"/><rect x="886" y="296" width="5" height="5" fill="#e4e6ea"/><rect x="886" y="301" width="5" height="5" fill="#f4f1ee"/><rect x="891" y="291" width="5" height="5" fill="#eaeef3"/><rect x="891" y="296" width="5" height="5" fill="#cdd0d5"/><rect x="896" y="286" width="5" height="5" fill="#f2f2f2"/><rect x="896" y="291" width="5" height="5" fill="#e8e8e8"/><rect x="896" y="296" width="5" height="5" fill="#e8e8e8"/><rect x="901" y="291" width="5" height="5" fill="#dedad7"/><rect x="901" y="296" width="5" height="5" fill="#d2d4d8"/><rect x="906" y="291" width="5" height="5" fill="#cdd0d5"/><rect x="906" y="296" width="5" height="5" fill="#dedfe1"/><rect x="911" y="291" width="5" height="5" fill="#dfdfdf"/><rect x="911" y="296" width="5" height="5" fill="#e6e6e6"/><rect x="911" y="301" width="5" height="5" fill="#e9e9ea"/><rect x="916" y="291" width="5" height="5" fill="#ece9e6"/><rect x="916" y="296" width="5" height="5" fill="#dcdcdc"/><rect x="921" y="291" width="5" height="5" fill="#d6d8dc"/><rect x="921" y="296" width="5" height="5" fill="#e0e2e4"/><rect x="926" y="291" width="5" height="5" fill="#cdd0d5"/><rect x="926" y="296" width="5" height="5" fill="#e4e4e4"/><rect x="926" y="301" width="5" height="5" fill="#e9e9ea"/><rect x="936" y="291" width="5" height="5" fill="#dcdcdc"/><rect x="936" y="296" width="5" height="5" fill="#dcdcdc"/><rect x="941" y="291" width="5" height="5" fill="#dedfe1"/><rect x="941" y="296" width="5" height="5" fill="#eaebec"/><rect x="946" y="291" width="5" height="5" fill="#dcdcdc"/><rect x="946" y="296" width="5" height="5" fill="#e8e8e8"/><rect x="951" y="291" width="5" height="5" fill="#d2d4d8"/><rect x="951" y="296" width="5" height="5" fill="#e4e6ea"/><rect x="956" y="286" width="5" height="5" fill="#ececec"/><rect x="956" y="291" width="5" height="5" fill="#d6d8dc"/><rect x="956" y="296" width="5" height="5" fill="#e4e4e4"/><rect x="961" y="291" width="5" height="5" fill="#dadcdf"/><rect x="961" y="296" width="5" height="5" fill="#d2d4d8"/><rect x="971" y="291" width="5" height="5" fill="#ece9e6"/><rect x="971" y="296" width="5" height="5" fill="#dfdfdf"/><rect x="971" y="301" width="5" height="5" fill="#eef1f5"/><rect x="976" y="286" width="5" height="5" fill="#e9e9ea"/><rect x="976" y="291" width="5" height="5" fill="#d2d4d8"/><rect x="976" y="296" width="5" height="5" fill="#d2d4d8"/><rect x="981" y="291" width="5" height="5" fill="#dedfe1"/><rect x="981" y="296" width="5" height="5" fill="#e4e6ea"/><rect x="981" y="301" width="5" height="5" fill="#f0f0f0"/><rect x="986" y="291" width="5" height="5" fill="#e2dfdc"/><rect x="986" y="296" width="5" height="5" fill="#e6e6e6"/><rect x="991" y="291" width="5" height="5" fill="#e4e6ea"/><rect x="991" y="296" width="5" height="5" fill="#dedfe1"/><rect x="996" y="286" width="5" height="5" fill="#f4f1ee"/><rect x="996" y="291" width="5" height="5" fill="#dadcdf"/><rect x="996" y="296" width="5" height="5" fill="#dfdfdf"/><rect x="1001" y="286" width="5" height="5" fill="#ececec"/><rect x="1001" y="291" width="5" height="5" fill="#dedad7"/><rect x="1001" y="296" width="5" height="5" fill="#e6e6e6"/><rect x="1006" y="291" width="5" height="5" fill="#dcdcdc"/><rect x="1006" y="296" width="5" height="5" fill="#dedad7"/><rect x="1006" y="301" width="5" height="5" fill="#eef1f5"/><rect x="1111" y="291" width="5" height="5" fill="#dcdcdc"/><rect x="1111" y="296" width="5" height="5" fill="#d6d8dc"/><rect x="1116" y="286" width="5" height="5" fill="#ececec"/><rect x="1116" y="291" width="5" height="5" fill="#e2dfdc"/><rect x="1116" y="296" width="5" height="5" fill="#dfdfdf"/><rect x="1121" y="291" width="5" height="5" fill="#e6e6e6"/><rect x="1121" y="296" width="5" height="5" fill="#dedad7"/><rect x="1126" y="286" width="5" height="5" fill="#f3ece8"/><rect x="1126" y="291" width="5" height="5" fill="#e6e6e6"/><rect x="1126" y="296" width="5" height="5" fill="#d2d4d8"/><rect x="1131" y="291" width="5" height="5" fill="#dedad7"/><rect x="1131" y="296" width="5" height="5" fill="#dedad7"/><rect x="1136" y="286" width="5" height="5" fill="#ececec"/><rect x="1136" y="291" width="5" height="5" fill="#d6d8dc"/><rect x="1136" y="296" width="5" height="5" fill="#d2d4d8"/><rect x="1141" y="291" width="5" height="5" fill="#dfdfdf"/><rect x="1141" y="296" width="5" height="5" fill="#dfdfdf"/><rect x="1146" y="291" width="5" height="5" fill="#e6e6e6"/><rect x="1146" y="296" width="5" height="5" fill="#d6d8dc"/><rect x="1151" y="291" width="5" height="5" fill="#eaebec"/><rect x="1151" y="296" width="5" height="5" fill="#eaebec"/><rect x="1156" y="291" width="5" height="5" fill="#dedfe1"/><rect x="1156" y="296" width="5" height="5" fill="#dcdcdc"/><rect x="1161" y="286" width="5" height="5" fill="#e9e9ea"/><rect x="1161" y="291" width="5" height="5" fill="#dadcdf"/><rect x="1161" y="296" width="5" height="5" fill="#eaeef3"/><rect x="1166" y="291" width="5" height="5" fill="#e4e4e4"/><rect x="1166" y="296" width="5" height="5" fill="#dcdcdc"/><rect x="1171" y="291" width="5" height="5" fill="#eaeef3"/><rect x="1171" y="296" width="5" height="5" fill="#dedad7"/><rect x="1176" y="291" width="5" height="5" fill="#dedfe1"/><rect x="1176" y="296" width="5" height="5" fill="#ece9e6"/><rect x="1296" y="291" width="5" height="5" fill="#dadcdf"/><rect x="1296" y="296" width="5" height="5" fill="#eaeef3"/><rect x="1301" y="291" width="5" height="5" fill="#dcdcdc"/><rect x="1301" y="296" width="5" height="5" fill="#d6d8dc"/><rect x="1306" y="291" width="5" height="5" fill="#cdd0d5"/><rect x="1306" y="296" width="5" height="5" fill="#cdd0d5"/><rect x="1311" y="291" width="5" height="5" fill="#ece9e6"/><rect x="1311" y="296" width="5" height="5" fill="#e8e8e8"/><rect x="1316" y="291" width="5" height="5" fill="#e4e6ea"/><rect x="1316" y="296" width="5" height="5" fill="#eaebec"/><rect x="1321" y="291" width="5" height="5" fill="#dedad7"/><rect x="1321" y="296" width="5" height="5" fill="#e8e8e8"/><rect x="1396" y="286" width="5" height="5" fill="#f2f2f2"/><rect x="1396" y="291" width="5" height="5" fill="#dedad7"/><rect x="1396" y="296" width="5" height="5" fill="#eaeef3"/><rect x="1401" y="291" width="5" height="5" fill="#cdd0d5"/><rect x="1401" y="296" width="5" height="5" fill="#e4e4e4"/><rect x="1406" y="291" width="5" height="5" fill="#d2d4d8"/><rect x="1406" y="296" width="5" height="5" fill="#dedad7"/><rect x="1411" y="291" width="5" height="5" fill="#e6e6e6"/><rect x="1411" y="296" width="5" height="5" fill="#dcdcdc"/><rect x="1416" y="291" width="5" height="5" fill="#e4e4e4"/><rect x="1416" y="296" width="5" height="5" fill="#dfdfdf"/><rect x="1421" y="291" width="5" height="5" fill="#d2d4d8"/><rect x="1421" y="296" width="5" height="5" fill="#e6e6e6"/><rect x="1511" y="291" width="5" height="5" fill="#d2d4d8"/><rect x="1511" y="296" width="5" height="5" fill="#e2dfdc"/><rect x="1516" y="291" width="5" height="5" fill="#e6e6e6"/><rect x="1516" y="296" width="5" height="5" fill="#e4e4e4"/><rect x="1521" y="291" width="5" height="5" fill="#e4e4e4"/><rect x="1521" y="296" width="5" height="5" fill="#dcdcdc"/><rect x="1526" y="291" width="5" height="5" fill="#eaeef3"/><rect x="1526" y="296" width="5" height="5" fill="#e2dfdc"/><rect x="1531" y="291" width="5" height="5" fill="#dedad7"/><rect x="1531" y="296" width="5" height="5" fill="#e4e6ea"/><rect x="1536" y="286" width="5" height="5" fill="#ececec"/><rect x="1536" y="291" width="5" height="5" fill="#cdd0d5"/><rect x="1536" y="296" width="5" height="5" fill="#e4e6ea"/><rect x="871" y="321" width="5" height="5" fill="#f2f2f2"/><rect x="871" y="326" width="5" height="5" fill="#eaeef3"/><rect x="871" y="331" width="5" height="5" fill="#dcdcdc"/><rect x="871" y="336" width="5" height="5" fill="#f2f2f2"/><rect x="876" y="326" width="5" height="5" fill="#eaeef3"/><rect x="876" y="331" width="5" height="5" fill="#e4e6ea"/><rect x="876" y="336" width="5" height="5" fill="#f6f6f6"/><rect x="881" y="321" width="5" height="5" fill="#f0f0f0"/><rect x="881" y="326" width="5" height="5" fill="#eaeef3"/><rect x="881" y="331" width="5" height="5" fill="#ece9e6"/><rect x="881" y="336" width="5" height="5" fill="#ececec"/><rect x="886" y="326" width="5" height="5" fill="#dedad7"/><rect x="886" y="331" width="5" height="5" fill="#dedad7"/><rect x="886" y="336" width="5" height="5" fill="#f2f2f2"/><rect x="891" y="321" width="5" height="5" fill="#f2f2f2"/><rect x="891" y="326" width="5" height="5" fill="#dcdcdc"/><rect x="891" y="331" width="5" height="5" fill="#dfdfdf"/><rect x="891" y="336" width="5" height="5" fill="#f2f2f2"/><rect x="896" y="326" width="5" height="5" fill="#e4e4e4"/><rect x="896" y="331" width="5" height="5" fill="#d6d8dc"/><rect x="901" y="321" width="5" height="5" fill="#f0f0f0"/><rect x="901" y="326" width="5" height="5" fill="#d6d8dc"/><rect x="901" y="331" width="5" height="5" fill="#e4e4e4"/><rect x="901" y="336" width="5" height="5" fill="#f3ece8"/><rect x="906" y="326" width="5" height="5" fill="#e2dfdc"/><rect x="906" y="331" width="5" height="5" fill="#e8e8e8"/><rect x="906" y="336" width="5" height="5" fill="#eef1f5"/><rect x="911" y="326" width="5" height="5" fill="#e6e6e6"/><rect x="911" y="331" width="5" height="5" fill="#ece9e6"/><rect x="911" y="336" width="5" height="5" fill="#f6f6f6"/><rect x="921" y="326" width="5" height="5" fill="#dadcdf"/><rect x="921" y="331" width="5" height="5" fill="#e0e2e4"/><rect x="921" y="336" width="5" height="5" fill="#f4f1ee"/><rect x="926" y="326" width="5" height="5" fill="#ece9e6"/><rect x="926" y="331" width="5" height="5" fill="#dcdcdc"/><rect x="926" y="336" width="5" height="5" fill="#e9e9ea"/><rect x="931" y="321" width="5" height="5" fill="#f3ece8"/><rect x="931" y="326" width="5" height="5" fill="#e6e6e6"/><rect x="931" y="331" width="5" height="5" fill="#e0e2e4"/><rect x="931" y="336" width="5" height="5" fill="#f3ece8"/><rect x="936" y="321" width="5" height="5" fill="#e9e9ea"/><rect x="936" y="326" width="5" height="5" fill="#ece9e6"/><rect x="936" y="331" width="5" height="5" fill="#e4e4e4"/><rect x="936" y="336" width="5" height="5" fill="#f0f0f0"/><rect x="941" y="321" width="5" height="5" fill="#f4f1ee"/><rect x="941" y="326" width="5" height="5" fill="#eaebec"/><rect x="941" y="331" width="5" height="5" fill="#eaebec"/><rect x="946" y="326" width="5" height="5" fill="#eaebec"/><rect x="946" y="331" width="5" height="5" fill="#dcdcdc"/><rect x="946" y="336" width="5" height="5" fill="#f4f1ee"/><rect x="1111" y="321" width="5" height="5" fill="#f2f2f2"/><rect x="1111" y="326" width="5" height="5" fill="#e6e6e6"/><rect x="1111" y="331" width="5" height="5" fill="#ece9e6"/><rect x="1116" y="326" width="5" height="5" fill="#d6d8dc"/><rect x="1116" y="331" width="5" height="5" fill="#e8e8e8"/><rect x="1116" y="336" width="5" height="5" fill="#ececec"/><rect x="1121" y="326" width="5" height="5" fill="#e4e6ea"/><rect x="1121" y="331" width="5" height="5" fill="#eaebec"/><rect x="1126" y="326" width="5" height="5" fill="#d2d4d8"/><rect x="1126" y="331" width="5" height="5" fill="#e8e8e8"/><rect x="1126" y="336" width="5" height="5" fill="#f4f1ee"/><rect x="1131" y="326" width="5" height="5" fill="#eaebec"/><rect x="1131" y="331" width="5" height="5" fill="#eaeef3"/><rect x="1136" y="326" width="5" height="5" fill="#dadcdf"/><rect x="1136" y="331" width="5" height="5" fill="#eaeef3"/><rect x="1141" y="326" width="5" height="5" fill="#e4e6ea"/><rect x="1141" y="331" width="5" height="5" fill="#e6e6e6"/><rect x="1146" y="326" width="5" height="5" fill="#e2dfdc"/><rect x="1146" y="331" width="5" height="5" fill="#dcdcdc"/><rect x="1146" y="336" width="5" height="5" fill="#ececec"/><rect x="1151" y="326" width="5" height="5" fill="#dedad7"/><rect x="1151" y="331" width="5" height="5" fill="#e8e8e8"/><rect x="1151" y="336" width="5" height="5" fill="#eef1f5"/><rect x="1156" y="326" width="5" height="5" fill="#dedad7"/><rect x="1156" y="331" width="5" height="5" fill="#ece9e6"/><rect x="1156" y="336" width="5" height="5" fill="#f2f2f2"/><rect x="1161" y="326" width="5" height="5" fill="#e2dfdc"/><rect x="1161" y="331" width="5" height="5" fill="#e4e4e4"/><rect x="1161" y="336" width="5" height="5" fill="#f3ece8"/><rect x="1166" y="326" width="5" height="5" fill="#e6e6e6"/><rect x="1166" y="331" width="5" height="5" fill="#e4e4e4"/><rect x="1171" y="326" width="5" height="5" fill="#dedad7"/><rect x="1171" y="331" width="5" height="5" fill="#e0e2e4"/><rect x="1176" y="326" width="5" height="5" fill="#dedfe1"/><rect x="1176" y="331" width="5" height="5" fill="#e0e2e4"/><rect x="1176" y="336" width="5" height="5" fill="#f6f6f6"/><rect x="1296" y="326" width="5" height="5" fill="#cdd0d5"/><rect x="1296" y="331" width="5" height="5" fill="#dedad7"/><rect x="1301" y="326" width="5" height="5" fill="#e0e2e4"/><rect x="1301" y="331" width="5" height="5" fill="#dcdcdc"/><rect x="1301" y="336" width="5" height="5" fill="#f0f0f0"/><rect x="1306" y="326" width="5" height="5" fill="#dadcdf"/><rect x="1306" y="331" width="5" height="5" fill="#ece9e6"/><rect x="1311" y="326" width="5" height="5" fill="#e8e8e8"/><rect x="1311" y="331" width="5" height="5" fill="#cdd0d5"/><rect x="1316" y="326" width="5" height="5" fill="#e4e4e4"/><rect x="1316" y="331" width="5" height="5" fill="#e0e2e4"/><rect x="1321" y="321" width="5" height="5" fill="#f6f6f6"/><rect x="1321" y="326" width="5" height="5" fill="#ece9e6"/><rect x="1321" y="331" width="5" height="5" fill="#dedad7"/><rect x="1396" y="326" width="5" height="5" fill="#e2dfdc"/><rect x="1396" y="331" width="5" height="5" fill="#ece9e6"/><rect x="1401" y="326" width="5" height="5" fill="#d6d8dc"/><rect x="1401" y="331" width="5" height="5" fill="#d6d8dc"/><rect x="1406" y="326" width="5" height="5" fill="#e0e2e4"/><rect x="1406" y="331" width="5" height="5" fill="#e8e8e8"/><rect x="1406" y="336" width="5" height="5" fill="#ececec"/><rect x="1411" y="326" width="5" height="5" fill="#dadcdf"/><rect x="1411" y="331" width="5" height="5" fill="#dfdfdf"/><rect x="1416" y="326" width="5" height="5" fill="#dcdcdc"/><rect x="1416" y="331" width="5" height="5" fill="#e4e4e4"/><rect x="1421" y="326" width="5" height="5" fill="#ece9e6"/><rect x="1421" y="331" width="5" height="5" fill="#e8e8e8"/><rect x="1511" y="326" width="5" height="5" fill="#dedad7"/><rect x="1511" y="331" width="5" height="5" fill="#e8e8e8"/><rect x="1516" y="321" width="5" height="5" fill="#eef1f5"/><rect x="1516" y="326" width="5" height="5" fill="#e2dfdc"/><rect x="1516" y="331" width="5" height="5" fill="#dedad7"/><rect x="1516" y="336" width="5" height="5" fill="#f0f0f0"/><rect x="1521" y="326" width="5" height="5" fill="#ece9e6"/><rect x="1521" y="331" width="5" height="5" fill="#dcdcdc"/><rect x="1526" y="326" width="5" height="5" fill="#ece9e6"/><rect x="1526" y="331" width="5" height="5" fill="#e6e6e6"/><rect x="1531" y="326" width="5" height="5" fill="#dfdfdf"/><rect x="1531" y="331" width="5" height="5" fill="#e6e6e6"/><rect x="1536" y="326" width="5" height="5" fill="#e8e8e8"/><rect x="1536" y="331" width="5" height="5" fill="#ece9e6"/><rect x="1536" y="336" width="5" height="5" fill="#eef1f5"/><rect x="843" y="274" width="726" height="5" fill="#f9f9f9"/><rect x="843" y="314" width="726" height="5" fill="#f9f9f9"/><rect x="226" y="359" width="5" height="5" fill="#f6f6f6"/><rect x="226" y="364" width="5" height="5" fill="#e6e6e6"/><rect x="226" y="369" width="5" height="5" fill="#e4e4e4"/><rect x="231" y="359" width="5" height="5" fill="#f6f6f6"/><rect x="231" y="364" width="5" height="5" fill="#d2d4d8"/><rect x="231" y="369" width="5" height="5" fill="#d2d4d8"/><rect x="236" y="364" width="5" height="5" fill="#dedfe1"/><rect x="236" y="369" width="5" height="5" fill="#e2dfdc"/><rect x="241" y="364" width="5" height="5" fill="#e8e8e8"/><rect x="241" y="369" width="5" height="5" fill="#e4e6ea"/><rect x="246" y="359" width="5" height="5" fill="#ececec"/><rect x="246" y="364" width="5" height="5" fill="#cdd0d5"/><rect x="246" y="369" width="5" height="5" fill="#e6e6e6"/><rect x="251" y="364" width="5" height="5" fill="#dedad7"/><rect x="251" y="369" width="5" height="5" fill="#d2d4d8"/><rect x="256" y="359" width="5" height="5" fill="#f2f2f2"/><rect x="256" y="364" width="5" height="5" fill="#e8e8e8"/><rect x="256" y="369" width="5" height="5" fill="#cdd0d5"/><rect x="261" y="364" width="5" height="5" fill="#cdd0d5"/><rect x="261" y="369" width="5" height="5" fill="#d2d4d8"/><rect x="361" y="364" width="5" height="5" fill="#e6e6e6"/><rect x="361" y="369" width="5" height="5" fill="#e2dfdc"/><rect x="366" y="364" width="5" height="5" fill="#e0e2e4"/><rect x="366" y="369" width="5" height="5" fill="#e0e2e4"/><rect x="371" y="364" width="5" height="5" fill="#e6e6e6"/><rect x="371" y="369" width="5" height="5" fill="#e4e4e4"/><rect x="376" y="364" width="5" height="5" fill="#eaebec"/><rect x="376" y="369" width="5" height="5" fill="#e4e4e4"/><rect x="381" y="364" width="5" height="5" fill="#eceef4"/><rect x="381" y="369" width="5" height="5" fill="#e6e4e0"/><rect x="386" y="364" width="5" height="5" fill="#dfdfdf"/><rect x="386" y="369" width="5" height="5" fill="#e4e4e4"/><rect x="391" y="359" width="5" height="5" fill="#f6f6f6"/><rect x="391" y="364" width="5" height="5" fill="#d2d4d8"/><rect x="391" y="369" width="5" height="5" fill="#e4e6ea"/><rect x="396" y="364" width="5" height="5" fill="#e0e2e4"/><rect x="396" y="369" width="5" height="5" fill="#dfdfdf"/><rect x="401" y="359" width="5" height="5" fill="#f2f2f2"/><rect x="401" y="364" width="5" height="5" fill="#e6e6e6"/><rect x="401" y="369" width="5" height="5" fill="#d6d8dc"/><rect x="406" y="364" width="5" height="5" fill="#cdd0d5"/><rect x="406" y="369" width="5" height="5" fill="#e4e4e4"/><rect x="411" y="364" width="5" height="5" fill="#e6e6e6"/><rect x="411" y="369" width="5" height="5" fill="#d2d4d8"/><rect x="416" y="359" width="5" height="5" fill="#f0f0f0"/><rect x="416" y="364" width="5" height="5" fill="#dedfe1"/><rect x="416" y="369" width="5" height="5" fill="#e4e6ea"/><rect x="421" y="364" width="5" height="5" fill="#dedad7"/><rect x="421" y="369" width="5" height="5" fill="#dedad7"/><rect x="426" y="364" width="5" height="5" fill="#eaeef3"/><rect x="426" y="369" width="5" height="5" fill="#e8e8e8"/><rect x="431" y="359" width="5" height="5" fill="#f0f0f0"/><rect x="431" y="364" width="5" height="5" fill="#dfdfdf"/><rect x="431" y="369" width="5" height="5" fill="#dedfe1"/><rect x="436" y="364" width="5" height="5" fill="#dadcdf"/><rect x="436" y="369" width="5" height="5" fill="#e6e6e6"/><rect x="441" y="364" width="5" height="5" fill="#e4e4e4"/><rect x="441" y="369" width="5" height="5" fill="#cdd0d5"/><rect x="446" y="359" width="5" height="5" fill="#e9e9ea"/><rect x="446" y="364" width="5" height="5" fill="#d2d4d8"/><rect x="446" y="369" width="5" height="5" fill="#dcdcdc"/><rect x="451" y="364" width="5" height="5" fill="#d2d4d8"/><rect x="451" y="369" width="5" height="5" fill="#cdd0d5"/><rect x="456" y="364" width="5" height="5" fill="#e8e8e8"/><rect x="456" y="369" width="5" height="5" fill="#eaebec"/><rect x="461" y="364" width="5" height="5" fill="#ece9e6"/><rect x="461" y="369" width="5" height="5" fill="#dfdfdf"/><rect x="466" y="364" width="5" height="5" fill="#dedfe1"/><rect x="466" y="369" width="5" height="5" fill="#e4e6ea"/><rect x="471" y="364" width="5" height="5" fill="#dadcdf"/><rect x="471" y="369" width="5" height="5" fill="#e8e8e8"/><rect x="476" y="359" width="5" height="5" fill="#f4f1ee"/><rect x="476" y="364" width="5" height="5" fill="#e8e8e8"/><rect x="476" y="369" width="5" height="5" fill="#d6d8dc"/><rect x="481" y="359" width="5" height="5" fill="#eef1f5"/><rect x="481" y="364" width="5" height="5" fill="#e4e4e4"/><rect x="481" y="369" width="5" height="5" fill="#e4e4e4"/><rect x="486" y="364" width="5" height="5" fill="#dadcdf"/><rect x="486" y="369" width="5" height="5" fill="#ece9e6"/><rect x="491" y="359" width="5" height="5" fill="#f4f1ee"/><rect x="491" y="364" width="5" height="5" fill="#dadcdf"/><rect x="491" y="369" width="5" height="5" fill="#dcdcdc"/><rect x="496" y="359" width="5" height="5" fill="#f2f2f2"/><rect x="496" y="364" width="5" height="5" fill="#eaebec"/><rect x="496" y="369" width="5" height="5" fill="#dedfe1"/><rect x="501" y="364" width="5" height="5" fill="#e0e2e4"/><rect x="501" y="369" width="5" height="5" fill="#d2d4d8"/><rect x="506" y="359" width="5" height="5" fill="#f0f0f0"/><rect x="506" y="364" width="5" height="5" fill="#dedfe1"/><rect x="506" y="369" width="5" height="5" fill="#e2dfdc"/><rect x="511" y="364" width="5" height="5" fill="#dedad7"/><rect x="511" y="369" width="5" height="5" fill="#dadcdf"/><rect x="626" y="359" width="5" height="5" fill="#e9e9ea"/><rect x="626" y="364" width="5" height="5" fill="#dedad7"/><rect x="626" y="369" width="5" height="5" fill="#e4e4e4"/><rect x="626" y="374" width="5" height="5" fill="#f3ece8"/><rect x="631" y="359" width="5" height="5" fill="#eef1f5"/><rect x="631" y="364" width="5" height="5" fill="#e0e2e4"/><rect x="631" y="369" width="5" height="5" fill="#d2d4d8"/><rect x="631" y="374" width="5" height="5" fill="#eef1f5"/><rect x="636" y="359" width="5" height="5" fill="#f2f2f2"/><rect x="636" y="364" width="5" height="5" fill="#e4e6ea"/><rect x="636" y="369" width="5" height="5" fill="#e2dfdc"/><rect x="636" y="374" width="5" height="5" fill="#f4f1ee"/><rect x="646" y="364" width="5" height="5" fill="#e2dfdc"/><rect x="646" y="369" width="5" height="5" fill="#e0e2e4"/><rect x="651" y="364" width="5" height="5" fill="#dadcdf"/><rect x="651" y="369" width="5" height="5" fill="#dedfe1"/><rect x="656" y="364" width="5" height="5" fill="#d2d4d8"/><rect x="656" y="369" width="5" height="5" fill="#e4e6ea"/><rect x="661" y="364" width="5" height="5" fill="#e4e4e4"/><rect x="661" y="369" width="5" height="5" fill="#eaebec"/><rect x="666" y="364" width="5" height="5" fill="#eaebec"/><rect x="666" y="369" width="5" height="5" fill="#e6e6e6"/><rect x="671" y="364" width="5" height="5" fill="#eaebec"/><rect x="671" y="369" width="5" height="5" fill="#e4e6ea"/><rect x="676" y="364" width="5" height="5" fill="#d6d8dc"/><rect x="676" y="369" width="5" height="5" fill="#e4e6ea"/><rect x="681" y="364" width="5" height="5" fill="#e4e6ea"/><rect x="681" y="369" width="5" height="5" fill="#dedad7"/><rect x="686" y="364" width="5" height="5" fill="#e8e8e8"/><rect x="686" y="369" width="5" height="5" fill="#e2dfdc"/><rect x="691" y="364" width="5" height="5" fill="#dcdcdc"/><rect x="691" y="369" width="5" height="5" fill="#eaeef3"/><rect x="696" y="364" width="5" height="5" fill="#cdd0d5"/><rect x="696" y="369" width="5" height="5" fill="#ece9e6"/><rect x="701" y="359" width="5" height="5" fill="#e9e9ea"/><rect x="701" y="364" width="5" height="5" fill="#d2d4d8"/><rect x="701" y="369" width="5" height="5" fill="#dcdcdc"/><rect x="706" y="364" width="5" height="5" fill="#ece9e6"/><rect x="706" y="369" width="5" height="5" fill="#e4e6ea"/><rect x="711" y="364" width="5" height="5" fill="#eaeef3"/><rect x="711" y="369" width="5" height="5" fill="#e4e6ea"/><rect x="716" y="364" width="5" height="5" fill="#eaebec"/><rect x="716" y="369" width="5" height="5" fill="#e2dfdc"/><rect x="721" y="364" width="5" height="5" fill="#e8e8e8"/><rect x="721" y="369" width="5" height="5" fill="#eaeef3"/><rect x="726" y="359" width="5" height="5" fill="#e9e9ea"/><rect x="726" y="364" width="5" height="5" fill="#e8e8e8"/><rect x="726" y="369" width="5" height="5" fill="#eaebec"/><rect x="731" y="364" width="5" height="5" fill="#e2dfdc"/><rect x="731" y="369" width="5" height="5" fill="#dedad7"/><rect x="736" y="364" width="5" height="5" fill="#d2d4d8"/><rect x="736" y="369" width="5" height="5" fill="#e6e6e6"/><rect x="741" y="364" width="5" height="5" fill="#e0e2e4"/><rect x="741" y="369" width="5" height="5" fill="#eaeef3"/><rect x="746" y="364" width="5" height="5" fill="#e8e8e8"/><rect x="746" y="369" width="5" height="5" fill="#e2dfdc"/><rect x="751" y="364" width="5" height="5" fill="#cdd0d5"/><rect x="751" y="369" width="5" height="5" fill="#ece9e6"/><rect x="756" y="364" width="5" height="5" fill="#e0e2e4"/><rect x="756" y="369" width="5" height="5" fill="#e2dfdc"/><rect x="761" y="364" width="5" height="5" fill="#d2d4d8"/><rect x="761" y="369" width="5" height="5" fill="#ece9e6"/><rect x="766" y="364" width="5" height="5" fill="#dadcdf"/><rect x="766" y="369" width="5" height="5" fill="#dedad7"/><rect x="871" y="364" width="5" height="5" fill="#d6d8dc"/><rect x="871" y="369" width="5" height="5" fill="#eaeef3"/><rect x="876" y="359" width="5" height="5" fill="#eef1f5"/><rect x="876" y="364" width="5" height="5" fill="#dfdfdf"/><rect x="876" y="369" width="5" height="5" fill="#e4e6ea"/><rect x="881" y="364" width="5" height="5" fill="#eaeef3"/><rect x="881" y="369" width="5" height="5" fill="#dfdfdf"/><rect x="886" y="364" width="5" height="5" fill="#e4e6ea"/><rect x="886" y="369" width="5" height="5" fill="#eaebec"/><rect x="891" y="364" width="5" height="5" fill="#e0e2e4"/><rect x="891" y="369" width="5" height="5" fill="#dcdcdc"/><rect x="896" y="359" width="5" height="5" fill="#f6f6f6"/><rect x="896" y="364" width="5" height="5" fill="#d6d8dc"/><rect x="896" y="369" width="5" height="5" fill="#e0e2e4"/><rect x="901" y="359" width="5" height="5" fill="#f0f0f0"/><rect x="901" y="364" width="5" height="5" fill="#dadcdf"/><rect x="901" y="369" width="5" height="5" fill="#cdd0d5"/><rect x="906" y="364" width="5" height="5" fill="#e8e8e8"/><rect x="906" y="369" width="5" height="5" fill="#e0e2e4"/><rect x="911" y="359" width="5" height="5" fill="#e9e9ea"/><rect x="911" y="364" width="5" height="5" fill="#e8e8e8"/><rect x="911" y="369" width="5" height="5" fill="#dadcdf"/><rect x="916" y="364" width="5" height="5" fill="#dcdcdc"/><rect x="916" y="369" width="5" height="5" fill="#dedad7"/><rect x="921" y="364" width="5" height="5" fill="#e2dfdc"/><rect x="921" y="369" width="5" height="5" fill="#cdd0d5"/><rect x="926" y="364" width="5" height="5" fill="#e4e4e4"/><rect x="926" y="369" width="5" height="5" fill="#d6d8dc"/><rect x="931" y="359" width="5" height="5" fill="#eef1f5"/><rect x="931" y="364" width="5" height="5" fill="#dedfe1"/><rect x="931" y="369" width="5" height="5" fill="#eaebec"/><rect x="936" y="364" width="5" height="5" fill="#e6e6e6"/><rect x="936" y="369" width="5" height="5" fill="#eaeef3"/><rect x="941" y="364" width="5" height="5" fill="#e0e2e4"/><rect x="941" y="369" width="5" height="5" fill="#dedfe1"/><rect x="946" y="359" width="5" height="5" fill="#f6f6f6"/><rect x="946" y="364" width="5" height="5" fill="#e2dfdc"/><rect x="946" y="369" width="5" height="5" fill="#dfdfdf"/><rect x="951" y="359" width="5" height="5" fill="#f2f2f2"/><rect x="951" y="364" width="5" height="5" fill="#d6d8dc"/><rect x="951" y="369" width="5" height="5" fill="#e0e2e4"/><rect x="956" y="364" width="5" height="5" fill="#dedad7"/><rect x="956" y="369" width="5" height="5" fill="#eaebec"/><rect x="961" y="364" width="5" height="5" fill="#dcdcdc"/><rect x="961" y="369" width="5" height="5" fill="#dfdfdf"/><rect x="966" y="364" width="5" height="5" fill="#d2d4d8"/><rect x="966" y="369" width="5" height="5" fill="#dedad7"/><rect x="971" y="364" width="5" height="5" fill="#eaebec"/><rect x="971" y="369" width="5" height="5" fill="#d6d8dc"/><rect x="976" y="364" width="5" height="5" fill="#e4e4e4"/><rect x="976" y="369" width="5" height="5" fill="#ece9e6"/><rect x="981" y="359" width="5" height="5" fill="#ececec"/><rect x="981" y="364" width="5" height="5" fill="#e4e4e4"/><rect x="981" y="369" width="5" height="5" fill="#dfdfdf"/><rect x="986" y="364" width="5" height="5" fill="#ece9e6"/><rect x="986" y="369" width="5" height="5" fill="#dadcdf"/><rect x="991" y="364" width="5" height="5" fill="#e8e8e8"/><rect x="991" y="369" width="5" height="5" fill="#e8e8e8"/><rect x="996" y="364" width="5" height="5" fill="#dedfe1"/><rect x="996" y="369" width="5" height="5" fill="#d6d8dc"/><rect x="1001" y="364" width="5" height="5" fill="#dcdcdc"/><rect x="1001" y="369" width="5" height="5" fill="#e4e4e4"/><rect x="1006" y="364" width="5" height="5" fill="#e4e4e4"/><rect x="1006" y="369" width="5" height="5" fill="#d2d4d8"/><rect x="1111" y="359" width="5" height="5" fill="#e9e9ea"/><rect x="1111" y="364" width="5" height="5" fill="#ece9e6"/><rect x="1111" y="369" width="5" height="5" fill="#dedfe1"/><rect x="1116" y="364" width="5" height="5" fill="#d6d8dc"/><rect x="1116" y="369" width="5" height="5" fill="#eaeef3"/><rect x="1121" y="359" width="5" height="5" fill="#f3ece8"/><rect x="1121" y="364" width="5" height="5" fill="#d6d8dc"/><rect x="1121" y="369" width="5" height="5" fill="#eaeef3"/><rect x="1121" y="374" width="5" height="5" fill="#f4f1ee"/><rect x="1126" y="364" width="5" height="5" fill="#dedad7"/><rect x="1126" y="369" width="5" height="5" fill="#d6d8dc"/><rect x="1131" y="364" width="5" height="5" fill="#e6e6e6"/><rect x="1131" y="369" width="5" height="5" fill="#e8e8e8"/><rect x="1136" y="364" width="5" height="5" fill="#d6d8dc"/><rect x="1136" y="369" width="5" height="5" fill="#dadcdf"/><rect x="1141" y="364" width="5" height="5" fill="#cdd0d5"/><rect x="1141" y="369" width="5" height="5" fill="#e4e4e4"/><rect x="1146" y="359" width="5" height="5" fill="#f0f0f0"/><rect x="1146" y="364" width="5" height="5" fill="#dadcdf"/><rect x="1146" y="369" width="5" height="5" fill="#dcdcdc"/><rect x="1151" y="359" width="5" height="5" fill="#f3ece8"/><rect x="1151" y="364" width="5" height="5" fill="#eaebec"/><rect x="1151" y="369" width="5" height="5" fill="#e6e6e6"/><rect x="1156" y="359" width="5" height="5" fill="#f4f1ee"/><rect x="1156" y="364" width="5" height="5" fill="#e8e8e8"/><rect x="1156" y="369" width="5" height="5" fill="#eaeef3"/><rect x="1161" y="364" width="5" height="5" fill="#cdd0d5"/><rect x="1161" y="369" width="5" height="5" fill="#eaebec"/><rect x="1166" y="359" width="5" height="5" fill="#f6f6f6"/><rect x="1166" y="364" width="5" height="5" fill="#dedfe1"/><rect x="1166" y="369" width="5" height="5" fill="#dcdcdc"/><rect x="1171" y="364" width="5" height="5" fill="#ece9e6"/><rect x="1171" y="369" width="5" height="5" fill="#e4e6ea"/><rect x="1176" y="364" width="5" height="5" fill="#cdd0d5"/><rect x="1176" y="369" width="5" height="5" fill="#e8e8e8"/><rect x="1296" y="364" width="5" height="5" fill="#e2e2e2"/><rect x="1296" y="369" width="5" height="5" fill="#d6d8dc"/><rect x="1296" y="374" width="5" height="5" fill="#eef1f5"/><rect x="1301" y="364" width="5" height="5" fill="#e2e2e2"/><rect x="1301" y="369" width="5" height="5" fill="#dfdfdf"/><rect x="1301" y="374" width="5" height="5" fill="#f4f1ee"/><rect x="1306" y="364" width="5" height="5" fill="#dee2e6"/><rect x="1306" y="369" width="5" height="5" fill="#dedad7"/><rect x="1306" y="374" width="5" height="5" fill="#f2f2f2"/><rect x="1311" y="364" width="5" height="5" fill="#e4e4e4"/><rect x="1311" y="369" width="5" height="5" fill="#e6e6e6"/><rect x="1311" y="374" width="5" height="5" fill="#ececec"/><rect x="1316" y="364" width="5" height="5" fill="#e4e4e4"/><rect x="1316" y="369" width="5" height="5" fill="#e6e6e6"/><rect x="1316" y="374" width="5" height="5" fill="#f6f6f6"/><rect x="1321" y="364" width="5" height="5" fill="#e8ecf0"/><rect x="1321" y="369" width="5" height="5" fill="#d2d4d8"/><rect x="1321" y="374" width="5" height="5" fill="#f6f6f6"/><rect x="1396" y="364" width="5" height="5" fill="#e6e4e0"/><rect x="1396" y="369" width="5" height="5" fill="#dedad7"/><rect x="1396" y="374" width="5" height="5" fill="#eef1f5"/><rect x="1401" y="364" width="5" height="5" fill="#ece8e4"/><rect x="1401" y="369" width="5" height="5" fill="#e0e2e4"/><rect x="1401" y="374" width="5" height="5" fill="#eef1f5"/><rect x="1406" y="364" width="5" height="5" fill="#dee2e6"/><rect x="1406" y="369" width="5" height="5" fill="#e2dfdc"/><rect x="1406" y="374" width="5" height="5" fill="#f3ece8"/><rect x="1411" y="364" width="5" height="5" fill="#e8ecf0"/><rect x="1411" y="369" width="5" height="5" fill="#dedfe1"/><rect x="1411" y="374" width="5" height="5" fill="#f0f0f0"/><rect x="1416" y="364" width="5" height="5" fill="#e8ecf0"/><rect x="1416" y="369" width="5" height="5" fill="#dfdfdf"/><rect x="1416" y="374" width="5" height="5" fill="#f2f2f2"/><rect x="1421" y="364" width="5" height="5" fill="#e2e2e2"/><rect x="1421" y="369" width="5" height="5" fill="#e2dfdc"/><rect x="1421" y="374" width="5" height="5" fill="#eef1f5"/><rect x="1511" y="364" width="5" height="5" fill="#e4e4e4"/><rect x="1511" y="369" width="5" height="5" fill="#e8e8e8"/><rect x="1511" y="374" width="5" height="5" fill="#f0f0f0"/><rect x="1516" y="364" width="5" height="5" fill="#e6e4e0"/><rect x="1516" y="369" width="5" height="5" fill="#e6e6e6"/><rect x="1516" y="374" width="5" height="5" fill="#f4f1ee"/><rect x="1521" y="364" width="5" height="5" fill="#eceef4"/><rect x="1521" y="369" width="5" height="5" fill="#e2dfdc"/><rect x="1521" y="374" width="5" height="5" fill="#f4f1ee"/><rect x="1526" y="364" width="5" height="5" fill="#e6e4e0"/><rect x="1526" y="369" width="5" height="5" fill="#dadcdf"/><rect x="1526" y="374" width="5" height="5" fill="#e9e9ea"/><rect x="1531" y="364" width="5" height="5" fill="#e2e2e2"/><rect x="1531" y="369" width="5" height="5" fill="#e4e6ea"/><rect x="1531" y="374" width="5" height="5" fill="#f2f2f2"/><rect x="1536" y="364" width="5" height="5" fill="#ece8e4"/><rect x="1536" y="369" width="5" height="5" fill="#e4e4e4"/><rect x="1536" y="374" width="5" height="5" fill="#f0f0f0"/><rect x="226" y="399" width="5" height="5" fill="#d2d4d8"/><rect x="226" y="404" width="5" height="5" fill="#dfdfdf"/><rect x="231" y="394" width="5" height="5" fill="#f0f0f0"/><rect x="231" y="399" width="5" height="5" fill="#dcdcdc"/><rect x="231" y="404" width="5" height="5" fill="#e6e6e6"/><rect x="236" y="394" width="5" height="5" fill="#f6f6f6"/><rect x="236" y="399" width="5" height="5" fill="#ece9e6"/><rect x="236" y="404" width="5" height="5" fill="#dfdfdf"/><rect x="241" y="394" width="5" height="5" fill="#eef1f5"/><rect x="241" y="399" width="5" height="5" fill="#dedfe1"/><rect x="241" y="404" width="5" height="5" fill="#dedad7"/><rect x="246" y="394" width="5" height="5" fill="#f2f2f2"/><rect x="246" y="399" width="5" height="5" fill="#e0e2e4"/><rect x="246" y="404" width="5" height="5" fill="#d6d8dc"/><rect x="251" y="399" width="5" height="5" fill="#ece9e6"/><rect x="251" y="404" width="5" height="5" fill="#dadcdf"/><rect x="256" y="394" width="5" height="5" fill="#f2f2f2"/><rect x="256" y="399" width="5" height="5" fill="#e0e2e4"/><rect x="256" y="404" width="5" height="5" fill="#e4e6ea"/><rect x="261" y="394" width="5" height="5" fill="#f3ece8"/><rect x="261" y="399" width="5" height="5" fill="#d6d8dc"/><rect x="261" y="404" width="5" height="5" fill="#d6d8dc"/><rect x="361" y="399" width="5" height="5" fill="#cdd0d5"/><rect x="361" y="404" width="5" height="5" fill="#dcdcdc"/><rect x="366" y="399" width="5" height="5" fill="#eaebec"/><rect x="366" y="404" width="5" height="5" fill="#dfdfdf"/><rect x="371" y="399" width="5" height="5" fill="#dedad7"/><rect x="371" y="404" width="5" height="5" fill="#dcdcdc"/><rect x="376" y="399" width="5" height="5" fill="#eaeef3"/><rect x="376" y="404" width="5" height="5" fill="#e4e6ea"/><rect x="381" y="399" width="5" height="5" fill="#ece8e4"/><rect x="381" y="404" width="5" height="5" fill="#e8ecf0"/><rect x="386" y="394" width="5" height="5" fill="#ececec"/><rect x="386" y="399" width="5" height="5" fill="#dedfe1"/><rect x="386" y="404" width="5" height="5" fill="#d2d4d8"/><rect x="391" y="394" width="5" height="5" fill="#f0f0f0"/><rect x="391" y="399" width="5" height="5" fill="#d2d4d8"/><rect x="391" y="404" width="5" height="5" fill="#e0e2e4"/><rect x="396" y="399" width="5" height="5" fill="#e8e8e8"/><rect x="396" y="404" width="5" height="5" fill="#e8e8e8"/><rect x="401" y="394" width="5" height="5" fill="#eef1f5"/><rect x="401" y="399" width="5" height="5" fill="#dadcdf"/><rect x="401" y="404" width="5" height="5" fill="#dfdfdf"/><rect x="406" y="394" width="5" height="5" fill="#eef1f5"/><rect x="406" y="399" width="5" height="5" fill="#dedad7"/><rect x="406" y="404" width="5" height="5" fill="#dedad7"/><rect x="411" y="399" width="5" height="5" fill="#e4e4e4"/><rect x="411" y="404" width="5" height="5" fill="#e0e2e4"/><rect x="416" y="399" width="5" height="5" fill="#dfdfdf"/><rect x="416" y="404" width="5" height="5" fill="#eaeef3"/><rect x="421" y="399" width="5" height="5" fill="#cdd0d5"/><rect x="421" y="404" width="5" height="5" fill="#e0e2e4"/><rect x="426" y="399" width="5" height="5" fill="#dedfe1"/><rect x="426" y="404" width="5" height="5" fill="#e6e6e6"/><rect x="431" y="394" width="5" height="5" fill="#f6f6f6"/><rect x="431" y="399" width="5" height="5" fill="#eaebec"/><rect x="431" y="404" width="5" height="5" fill="#ece9e6"/><rect x="436" y="399" width="5" height="5" fill="#e2dfdc"/><rect x="436" y="404" width="5" height="5" fill="#dfdfdf"/><rect x="441" y="394" width="5" height="5" fill="#eef1f5"/><rect x="441" y="399" width="5" height="5" fill="#dadcdf"/><rect x="441" y="404" width="5" height="5" fill="#e8e8e8"/><rect x="446" y="399" width="5" height="5" fill="#dedfe1"/><rect x="446" y="404" width="5" height="5" fill="#dedad7"/><rect x="451" y="399" width="5" height="5" fill="#e6e6e6"/><rect x="451" y="404" width="5" height="5" fill="#e6e6e6"/><rect x="456" y="399" width="5" height="5" fill="#e4e4e4"/><rect x="456" y="404" width="5" height="5" fill="#e6e6e6"/><rect x="461" y="399" width="5" height="5" fill="#e2dfdc"/><rect x="461" y="404" width="5" height="5" fill="#d6d8dc"/><rect x="466" y="394" width="5" height="5" fill="#f2f2f2"/><rect x="466" y="399" width="5" height="5" fill="#e6e6e6"/><rect x="466" y="404" width="5" height="5" fill="#e8e8e8"/><rect x="471" y="394" width="5" height="5" fill="#e9e9ea"/><rect x="471" y="399" width="5" height="5" fill="#d2d4d8"/><rect x="471" y="404" width="5" height="5" fill="#e4e4e4"/><rect x="476" y="399" width="5" height="5" fill="#eaebec"/><rect x="476" y="404" width="5" height="5" fill="#eaebec"/><rect x="481" y="399" width="5" height="5" fill="#d2d4d8"/><rect x="481" y="404" width="5" height="5" fill="#e0e2e4"/><rect x="486" y="399" width="5" height="5" fill="#e0e2e4"/><rect x="486" y="404" width="5" height="5" fill="#e8e8e8"/><rect x="491" y="399" width="5" height="5" fill="#dedfe1"/><rect x="491" y="404" width="5" height="5" fill="#eaeef3"/><rect x="496" y="399" width="5" height="5" fill="#e4e4e4"/><rect x="496" y="404" width="5" height="5" fill="#e4e4e4"/><rect x="501" y="399" width="5" height="5" fill="#cdd0d5"/><rect x="501" y="404" width="5" height="5" fill="#e4e4e4"/><rect x="506" y="394" width="5" height="5" fill="#f0f0f0"/><rect x="506" y="399" width="5" height="5" fill="#e4e4e4"/><rect x="506" y="404" width="5" height="5" fill="#dcdcdc"/><rect x="511" y="394" width="5" height="5" fill="#f0f0f0"/><rect x="511" y="399" width="5" height="5" fill="#d2d4d8"/><rect x="511" y="404" width="5" height="5" fill="#dadcdf"/><rect x="626" y="394" width="5" height="5" fill="#eef1f5"/><rect x="626" y="399" width="5" height="5" fill="#d2d4d8"/><rect x="626" y="404" width="5" height="5" fill="#dcdcdc"/><rect x="626" y="409" width="5" height="5" fill="#ececec"/><rect x="631" y="394" width="5" height="5" fill="#f4f1ee"/><rect x="631" y="399" width="5" height="5" fill="#dcdcdc"/><rect x="631" y="404" width="5" height="5" fill="#e4e6ea"/><rect x="631" y="409" width="5" height="5" fill="#f2f2f2"/><rect x="636" y="394" width="5" height="5" fill="#f6f6f6"/><rect x="636" y="399" width="5" height="5" fill="#dcdcdc"/><rect x="636" y="404" width="5" height="5" fill="#dfdfdf"/><rect x="636" y="409" width="5" height="5" fill="#f0f0f0"/><rect x="646" y="399" width="5" height="5" fill="#d2d4d8"/><rect x="646" y="404" width="5" height="5" fill="#ece9e6"/><rect x="651" y="399" width="5" height="5" fill="#e4e6ea"/><rect x="651" y="404" width="5" height="5" fill="#eaebec"/><rect x="656" y="399" width="5" height="5" fill="#dcdcdc"/><rect x="656" y="404" width="5" height="5" fill="#dedfe1"/><rect x="661" y="399" width="5" height="5" fill="#e6e6e6"/><rect x="661" y="404" width="5" height="5" fill="#d2d4d8"/><rect x="666" y="399" width="5" height="5" fill="#e2dfdc"/><rect x="666" y="404" width="5" height="5" fill="#d6d8dc"/><rect x="671" y="399" width="5" height="5" fill="#dedad7"/><rect x="671" y="404" width="5" height="5" fill="#cdd0d5"/><rect x="676" y="399" width="5" height="5" fill="#dfdfdf"/><rect x="676" y="404" width="5" height="5" fill="#d6d8dc"/><rect x="681" y="399" width="5" height="5" fill="#e2dfdc"/><rect x="681" y="404" width="5" height="5" fill="#d6d8dc"/><rect x="686" y="399" width="5" height="5" fill="#e2dfdc"/><rect x="686" y="404" width="5" height="5" fill="#e6e6e6"/><rect x="691" y="399" width="5" height="5" fill="#e0e2e4"/><rect x="691" y="404" width="5" height="5" fill="#ece9e6"/><rect x="696" y="394" width="5" height="5" fill="#f3ece8"/><rect x="696" y="399" width="5" height="5" fill="#dcdcdc"/><rect x="696" y="404" width="5" height="5" fill="#dcdcdc"/><rect x="701" y="399" width="5" height="5" fill="#e4e6ea"/><rect x="701" y="404" width="5" height="5" fill="#eaebec"/><rect x="706" y="399" width="5" height="5" fill="#eaebec"/><rect x="706" y="404" width="5" height="5" fill="#eaeef3"/><rect x="711" y="399" width="5" height="5" fill="#cdd0d5"/><rect x="711" y="404" width="5" height="5" fill="#dfdfdf"/><rect x="716" y="399" width="5" height="5" fill="#eaeef3"/><rect x="716" y="404" width="5" height="5" fill="#d2d4d8"/><rect x="721" y="399" width="5" height="5" fill="#e4e4e4"/><rect x="721" y="404" width="5" height="5" fill="#e0e2e4"/><rect x="726" y="394" width="5" height="5" fill="#f4f1ee"/><rect x="726" y="399" width="5" height="5" fill="#e2dfdc"/><rect x="726" y="404" width="5" height="5" fill="#d2d4d8"/><rect x="731" y="399" width="5" height="5" fill="#dedad7"/><rect x="731" y="404" width="5" height="5" fill="#dfdfdf"/><rect x="736" y="399" width="5" height="5" fill="#eaebec"/><rect x="736" y="404" width="5" height="5" fill="#dadcdf"/><rect x="741" y="399" width="5" height="5" fill="#dcdcdc"/><rect x="741" y="404" width="5" height="5" fill="#e2dfdc"/><rect x="746" y="399" width="5" height="5" fill="#d2d4d8"/><rect x="746" y="404" width="5" height="5" fill="#eaeef3"/><rect x="751" y="399" width="5" height="5" fill="#dedad7"/><rect x="751" y="404" width="5" height="5" fill="#dedad7"/><rect x="756" y="399" width="5" height="5" fill="#e2dfdc"/><rect x="756" y="404" width="5" height="5" fill="#e4e4e4"/><rect x="761" y="394" width="5" height="5" fill="#f0f0f0"/><rect x="761" y="399" width="5" height="5" fill="#dedfe1"/><rect x="761" y="404" width="5" height="5" fill="#ece9e6"/><rect x="766" y="399" width="5" height="5" fill="#dedad7"/><rect x="766" y="404" width="5" height="5" fill="#cdd0d5"/><rect x="871" y="399" width="5" height="5" fill="#d6d8dc"/><rect x="871" y="404" width="5" height="5" fill="#eaeef3"/><rect x="876" y="399" width="5" height="5" fill="#d2d4d8"/><rect x="876" y="404" width="5" height="5" fill="#e2dfdc"/><rect x="876" y="409" width="5" height="5" fill="#f3ece8"/><rect x="881" y="399" width="5" height="5" fill="#e4e4e4"/><rect x="881" y="404" width="5" height="5" fill="#eaebec"/><rect x="881" y="409" width="5" height="5" fill="#f2f2f2"/><rect x="886" y="399" width="5" height="5" fill="#cdd0d5"/><rect x="886" y="404" width="5" height="5" fill="#dadcdf"/><rect x="891" y="399" width="5" height="5" fill="#e4e4e4"/><rect x="891" y="404" width="5" height="5" fill="#ece9e6"/><rect x="896" y="399" width="5" height="5" fill="#e4e6ea"/><rect x="896" y="404" width="5" height="5" fill="#e4e4e4"/><rect x="896" y="409" width="5" height="5" fill="#eef1f5"/><rect x="901" y="399" width="5" height="5" fill="#e6e6e6"/><rect x="901" y="404" width="5" height="5" fill="#cdd0d5"/><rect x="906" y="399" width="5" height="5" fill="#e4e4e4"/><rect x="906" y="404" width="5" height="5" fill="#dee2e6"/><rect x="911" y="399" width="5" height="5" fill="#ece9e6"/><rect x="911" y="404" width="5" height="5" fill="#dfdfdf"/><rect x="911" y="409" width="5" height="5" fill="#f2f2f2"/><rect x="916" y="394" width="5" height="5" fill="#eef1f5"/><rect x="916" y="399" width="5" height="5" fill="#e8e8e8"/><rect x="916" y="404" width="5" height="5" fill="#dcdcdc"/><rect x="921" y="399" width="5" height="5" fill="#ece9e6"/><rect x="921" y="404" width="5" height="5" fill="#dadcdf"/><rect x="926" y="399" width="5" height="5" fill="#e4e6ea"/><rect x="926" y="404" width="5" height="5" fill="#e6e6e6"/><rect x="926" y="409" width="5" height="5" fill="#f2f2f2"/><rect x="931" y="399" width="5" height="5" fill="#dedfe1"/><rect x="931" y="404" width="5" height="5" fill="#d6d8dc"/><rect x="931" y="409" width="5" height="5" fill="#eef1f5"/><rect x="936" y="394" width="5" height="5" fill="#ececec"/><rect x="936" y="399" width="5" height="5" fill="#d6d8dc"/><rect x="936" y="404" width="5" height="5" fill="#e6e6e6"/><rect x="941" y="399" width="5" height="5" fill="#e0e2e4"/><rect x="941" y="404" width="5" height="5" fill="#ece9e6"/><rect x="1111" y="399" width="5" height="5" fill="#dfdfdf"/><rect x="1111" y="404" width="5" height="5" fill="#e4e6ea"/><rect x="1116" y="399" width="5" height="5" fill="#cdd0d5"/><rect x="1116" y="404" width="5" height="5" fill="#e6e6e6"/><rect x="1121" y="399" width="5" height="5" fill="#d2d4d8"/><rect x="1121" y="404" width="5" height="5" fill="#e2dfdc"/><rect x="1126" y="394" width="5" height="5" fill="#ececec"/><rect x="1126" y="399" width="5" height="5" fill="#ece9e6"/><rect x="1126" y="404" width="5" height="5" fill="#d6d8dc"/><rect x="1131" y="399" width="5" height="5" fill="#e8e8e8"/><rect x="1131" y="404" width="5" height="5" fill="#e4e6ea"/><rect x="1136" y="399" width="5" height="5" fill="#e0e2e4"/><rect x="1136" y="404" width="5" height="5" fill="#dcdcdc"/><rect x="1136" y="409" width="5" height="5" fill="#ececec"/><rect x="1141" y="394" width="5" height="5" fill="#ececec"/><rect x="1141" y="399" width="5" height="5" fill="#ece9e6"/><rect x="1141" y="404" width="5" height="5" fill="#ece9e6"/><rect x="1146" y="399" width="5" height="5" fill="#d6d8dc"/><rect x="1146" y="404" width="5" height="5" fill="#e8e8e8"/><rect x="1146" y="409" width="5" height="5" fill="#f6f6f6"/><rect x="1151" y="399" width="5" height="5" fill="#e6e6e6"/><rect x="1151" y="404" width="5" height="5" fill="#ece9e6"/><rect x="1156" y="399" width="5" height="5" fill="#e2dfdc"/><rect x="1156" y="404" width="5" height="5" fill="#e4e6ea"/><rect x="1161" y="394" width="5" height="5" fill="#f0f0f0"/><rect x="1161" y="399" width="5" height="5" fill="#eaeef3"/><rect x="1161" y="404" width="5" height="5" fill="#dcdcdc"/><rect x="1161" y="409" width="5" height="5" fill="#f0f0f0"/><rect x="1166" y="399" width="5" height="5" fill="#e8e8e8"/><rect x="1166" y="404" width="5" height="5" fill="#e4e6ea"/><rect x="1171" y="399" width="5" height="5" fill="#eaeef3"/><rect x="1171" y="404" width="5" height="5" fill="#e0e2e4"/><rect x="1176" y="394" width="5" height="5" fill="#ececec"/><rect x="1176" y="399" width="5" height="5" fill="#e4e4e4"/><rect x="1176" y="404" width="5" height="5" fill="#e2dfdc"/><rect x="1176" y="409" width="5" height="5" fill="#f6f6f6"/><rect x="1296" y="399" width="5" height="5" fill="#ece8e4"/><rect x="1296" y="404" width="5" height="5" fill="#dadcdf"/><rect x="1296" y="409" width="5" height="5" fill="#e9e9ea"/><rect x="1301" y="399" width="5" height="5" fill="#e6e4e0"/><rect x="1301" y="404" width="5" height="5" fill="#cdd0d5"/><rect x="1301" y="409" width="5" height="5" fill="#f6f6f6"/><rect x="1306" y="399" width="5" height="5" fill="#dee2e6"/><rect x="1306" y="404" width="5" height="5" fill="#eaebec"/><rect x="1306" y="409" width="5" height="5" fill="#f3ece8"/><rect x="1311" y="399" width="5" height="5" fill="#eceef4"/><rect x="1311" y="404" width="5" height="5" fill="#eaeef3"/><rect x="1311" y="409" width="5" height="5" fill="#eef1f5"/><rect x="1316" y="399" width="5" height="5" fill="#e8ecf0"/><rect x="1316" y="404" width="5" height="5" fill="#cdd0d5"/><rect x="1316" y="409" width="5" height="5" fill="#eef1f5"/><rect x="1321" y="399" width="5" height="5" fill="#eceef4"/><rect x="1321" y="404" width="5" height="5" fill="#cdd0d5"/><rect x="1321" y="409" width="5" height="5" fill="#f0f0f0"/><rect x="1396" y="399" width="5" height="5" fill="#ece8e4"/><rect x="1396" y="404" width="5" height="5" fill="#dedad7"/><rect x="1396" y="409" width="5" height="5" fill="#eef1f5"/><rect x="1401" y="399" width="5" height="5" fill="#eceef4"/><rect x="1401" y="404" width="5" height="5" fill="#dfdfdf"/><rect x="1401" y="409" width="5" height="5" fill="#f2f2f2"/><rect x="1406" y="399" width="5" height="5" fill="#eceef4"/><rect x="1406" y="404" width="5" height="5" fill="#e0e2e4"/><rect x="1406" y="409" width="5" height="5" fill="#eef1f5"/><rect x="1411" y="399" width="5" height="5" fill="#e8ecf0"/><rect x="1411" y="404" width="5" height="5" fill="#e4e6ea"/><rect x="1411" y="409" width="5" height="5" fill="#f4f1ee"/><rect x="1416" y="399" width="5" height="5" fill="#e2e2e2"/><rect x="1416" y="404" width="5" height="5" fill="#d6d8dc"/><rect x="1416" y="409" width="5" height="5" fill="#f3ece8"/><rect x="1421" y="399" width="5" height="5" fill="#dee2e6"/><rect x="1421" y="404" width="5" height="5" fill="#e2dfdc"/><rect x="1421" y="409" width="5" height="5" fill="#f0f0f0"/><rect x="1511" y="399" width="5" height="5" fill="#e8ecf0"/><rect x="1511" y="404" width="5" height="5" fill="#cdd0d5"/><rect x="1511" y="409" width="5" height="5" fill="#f4f1ee"/><rect x="1516" y="399" width="5" height="5" fill="#dee2e6"/><rect x="1516" y="404" width="5" height="5" fill="#e8e8e8"/><rect x="1516" y="409" width="5" height="5" fill="#f3ece8"/><rect x="1521" y="399" width="5" height="5" fill="#ece8e4"/><rect x="1521" y="404" width="5" height="5" fill="#dadcdf"/><rect x="1521" y="409" width="5" height="5" fill="#f3ece8"/><rect x="1526" y="399" width="5" height="5" fill="#e2e2e2"/><rect x="1526" y="404" width="5" height="5" fill="#eaebec"/><rect x="1526" y="409" width="5" height="5" fill="#ececec"/><rect x="1531" y="399" width="5" height="5" fill="#dee2e6"/><rect x="1531" y="404" width="5" height="5" fill="#dfdfdf"/><rect x="1531" y="409" width="5" height="5" fill="#f6f6f6"/><rect x="1536" y="399" width="5" height="5" fill="#e4e4e4"/><rect x="1536" y="404" width="5" height="5" fill="#cdd0d5"/><rect x="1536" y="409" width="5" height="5" fill="#f4f1ee"/><rect x="226" y="429" width="5" height="5" fill="#f0f0f0"/><rect x="226" y="434" width="5" height="5" fill="#ece9e6"/><rect x="226" y="439" width="5" height="5" fill="#dcdcdc"/><rect x="231" y="434" width="5" height="5" fill="#e8e8e8"/><rect x="231" y="439" width="5" height="5" fill="#dcdcdc"/><rect x="236" y="429" width="5" height="5" fill="#eef1f5"/><rect x="236" y="434" width="5" height="5" fill="#e0e2e4"/><rect x="236" y="439" width="5" height="5" fill="#e0e2e4"/><rect x="241" y="434" width="5" height="5" fill="#cdd0d5"/><rect x="241" y="439" width="5" height="5" fill="#e4e4e4"/><rect x="246" y="434" width="5" height="5" fill="#ece9e6"/><rect x="246" y="439" width="5" height="5" fill="#dedad7"/><rect x="251" y="429" width="5" height="5" fill="#eef1f5"/><rect x="251" y="434" width="5" height="5" fill="#dadcdf"/><rect x="251" y="439" width="5" height="5" fill="#e4e6ea"/><rect x="256" y="429" width="5" height="5" fill="#e9e9ea"/><rect x="256" y="434" width="5" height="5" fill="#e4e4e4"/><rect x="256" y="439" width="5" height="5" fill="#dfdfdf"/><rect x="261" y="434" width="5" height="5" fill="#d2d4d8"/><rect x="261" y="439" width="5" height="5" fill="#dcdcdc"/><rect x="361" y="429" width="5" height="5" fill="#e9e9ea"/><rect x="361" y="434" width="5" height="5" fill="#dadcdf"/><rect x="361" y="439" width="5" height="5" fill="#e8e8e8"/><rect x="366" y="434" width="5" height="5" fill="#e6e6e6"/><rect x="366" y="439" width="5" height="5" fill="#e0e2e4"/><rect x="371" y="434" width="5" height="5" fill="#d2d4d8"/><rect x="371" y="439" width="5" height="5" fill="#d6d8dc"/><rect x="376" y="434" width="5" height="5" fill="#e4e4e4"/><rect x="376" y="439" width="5" height="5" fill="#eaebec"/><rect x="381" y="434" width="5" height="5" fill="#e6e4e0"/><rect x="381" y="439" width="5" height="5" fill="#ece8e4"/><rect x="386" y="434" width="5" height="5" fill="#dcdcdc"/><rect x="386" y="439" width="5" height="5" fill="#d2d4d8"/><rect x="391" y="429" width="5" height="5" fill="#f2f2f2"/><rect x="391" y="434" width="5" height="5" fill="#e6e6e6"/><rect x="391" y="439" width="5" height="5" fill="#d6d8dc"/><rect x="396" y="434" width="5" height="5" fill="#eaeef3"/><rect x="396" y="439" width="5" height="5" fill="#e4e6ea"/><rect x="401" y="434" width="5" height="5" fill="#e8e8e8"/><rect x="401" y="439" width="5" height="5" fill="#dedad7"/><rect x="406" y="429" width="5" height="5" fill="#ececec"/><rect x="406" y="434" width="5" height="5" fill="#dedad7"/><rect x="406" y="439" width="5" height="5" fill="#cdd0d5"/><rect x="411" y="429" width="5" height="5" fill="#f3ece8"/><rect x="411" y="434" width="5" height="5" fill="#e2dfdc"/><rect x="411" y="439" width="5" height="5" fill="#dadcdf"/><rect x="416" y="434" width="5" height="5" fill="#d6d8dc"/><rect x="416" y="439" width="5" height="5" fill="#d2d4d8"/><rect x="421" y="434" width="5" height="5" fill="#d2d4d8"/><rect x="421" y="439" width="5" height="5" fill="#ece9e6"/><rect x="426" y="434" width="5" height="5" fill="#dfdfdf"/><rect x="426" y="439" width="5" height="5" fill="#d6d8dc"/><rect x="431" y="434" width="5" height="5" fill="#e4e4e4"/><rect x="431" y="439" width="5" height="5" fill="#dedfe1"/><rect x="436" y="434" width="5" height="5" fill="#e2dfdc"/><rect x="436" y="439" width="5" height="5" fill="#eaeef3"/><rect x="441" y="429" width="5" height="5" fill="#f2f2f2"/><rect x="441" y="434" width="5" height="5" fill="#e0e2e4"/><rect x="441" y="439" width="5" height="5" fill="#eaebec"/><rect x="446" y="434" width="5" height="5" fill="#cdd0d5"/><rect x="446" y="439" width="5" height="5" fill="#e0e2e4"/><rect x="451" y="434" width="5" height="5" fill="#dfdfdf"/><rect x="451" y="439" width="5" height="5" fill="#e0e2e4"/><rect x="456" y="434" width="5" height="5" fill="#e2dfdc"/><rect x="456" y="439" width="5" height="5" fill="#e4e6ea"/><rect x="461" y="429" width="5" height="5" fill="#f3ece8"/><rect x="461" y="434" width="5" height="5" fill="#e6e6e6"/><rect x="461" y="439" width="5" height="5" fill="#dedfe1"/><rect x="466" y="429" width="5" height="5" fill="#ececec"/><rect x="466" y="434" width="5" height="5" fill="#dcdcdc"/><rect x="466" y="439" width="5" height="5" fill="#ece9e6"/><rect x="471" y="434" width="5" height="5" fill="#cdd0d5"/><rect x="471" y="439" width="5" height="5" fill="#dedfe1"/><rect x="476" y="434" width="5" height="5" fill="#dfdfdf"/><rect x="476" y="439" width="5" height="5" fill="#e4e4e4"/><rect x="481" y="434" width="5" height="5" fill="#ece9e6"/><rect x="481" y="439" width="5" height="5" fill="#e8e8e8"/><rect x="486" y="434" width="5" height="5" fill="#d2d4d8"/><rect x="486" y="439" width="5" height="5" fill="#eaebec"/><rect x="491" y="434" width="5" height="5" fill="#e4e4e4"/><rect x="491" y="439" width="5" height="5" fill="#e0e2e4"/><rect x="496" y="434" width="5" height="5" fill="#e0e2e4"/><rect x="496" y="439" width="5" height="5" fill="#eaebec"/><rect x="501" y="434" width="5" height="5" fill="#e6e6e6"/><rect x="501" y="439" width="5" height="5" fill="#e4e4e4"/><rect x="506" y="434" width="5" height="5" fill="#ece9e6"/><rect x="506" y="439" width="5" height="5" fill="#d2d4d8"/><rect x="511" y="434" width="5" height="5" fill="#d6d8dc"/><rect x="511" y="439" width="5" height="5" fill="#e4e4e4"/><rect x="626" y="429" width="5" height="5" fill="#f4f1ee"/><rect x="626" y="434" width="5" height="5" fill="#eaeef3"/><rect x="626" y="439" width="5" height="5" fill="#e2dfdc"/><rect x="626" y="444" width="5" height="5" fill="#ececec"/><rect x="631" y="429" width="5" height="5" fill="#f2f2f2"/><rect x="631" y="434" width="5" height="5" fill="#d6d8dc"/><rect x="631" y="439" width="5" height="5" fill="#dcdcdc"/><rect x="631" y="444" width="5" height="5" fill="#f6f6f6"/><rect x="636" y="429" width="5" height="5" fill="#f2f2f2"/><rect x="636" y="434" width="5" height="5" fill="#ece9e6"/><rect x="636" y="439" width="5" height="5" fill="#eaebec"/><rect x="636" y="444" width="5" height="5" fill="#f3ece8"/><rect x="646" y="434" width="5" height="5" fill="#e4e6ea"/><rect x="646" y="439" width="5" height="5" fill="#d6d8dc"/><rect x="651" y="429" width="5" height="5" fill="#f3ece8"/><rect x="651" y="434" width="5" height="5" fill="#ece9e6"/><rect x="651" y="439" width="5" height="5" fill="#dcdcdc"/><rect x="656" y="434" width="5" height="5" fill="#dcdcdc"/><rect x="656" y="439" width="5" height="5" fill="#eaebec"/><rect x="661" y="434" width="5" height="5" fill="#e8e8e8"/><rect x="661" y="439" width="5" height="5" fill="#e0e2e4"/><rect x="666" y="434" width="5" height="5" fill="#eaeef3"/><rect x="666" y="439" width="5" height="5" fill="#dadcdf"/><rect x="671" y="434" width="5" height="5" fill="#cdd0d5"/><rect x="671" y="439" width="5" height="5" fill="#e8e8e8"/><rect x="676" y="434" width="5" height="5" fill="#e4e4e4"/><rect x="676" y="439" width="5" height="5" fill="#dedad7"/><rect x="681" y="434" width="5" height="5" fill="#e2dfdc"/><rect x="681" y="439" width="5" height="5" fill="#e4e4e4"/><rect x="686" y="434" width="5" height="5" fill="#eaebec"/><rect x="686" y="439" width="5" height="5" fill="#dedfe1"/><rect x="691" y="434" width="5" height="5" fill="#eaebec"/><rect x="691" y="439" width="5" height="5" fill="#dedad7"/><rect x="696" y="434" width="5" height="5" fill="#dfdfdf"/><rect x="696" y="439" width="5" height="5" fill="#eaebec"/><rect x="701" y="434" width="5" height="5" fill="#dadcdf"/><rect x="701" y="439" width="5" height="5" fill="#eaebec"/><rect x="706" y="434" width="5" height="5" fill="#e6e6e6"/><rect x="706" y="439" width="5" height="5" fill="#dedfe1"/><rect x="711" y="434" width="5" height="5" fill="#e4e4e4"/><rect x="711" y="439" width="5" height="5" fill="#eaebec"/><rect x="716" y="429" width="5" height="5" fill="#f2f2f2"/><rect x="716" y="434" width="5" height="5" fill="#dadcdf"/><rect x="716" y="439" width="5" height="5" fill="#e0e2e4"/><rect x="721" y="434" width="5" height="5" fill="#d6d8dc"/><rect x="721" y="439" width="5" height="5" fill="#eaebec"/><rect x="726" y="434" width="5" height="5" fill="#dfdfdf"/><rect x="726" y="439" width="5" height="5" fill="#dcdcdc"/><rect x="731" y="434" width="5" height="5" fill="#cdd0d5"/><rect x="731" y="439" width="5" height="5" fill="#d2d4d8"/><rect x="736" y="434" width="5" height="5" fill="#dfdfdf"/><rect x="736" y="439" width="5" height="5" fill="#e0e2e4"/><rect x="741" y="434" width="5" height="5" fill="#dadcdf"/><rect x="741" y="439" width="5" height="5" fill="#d6d8dc"/><rect x="746" y="434" width="5" height="5" fill="#e8e8e8"/><rect x="746" y="439" width="5" height="5" fill="#e0e2e4"/><rect x="751" y="434" width="5" height="5" fill="#e8e8e8"/><rect x="751" y="439" width="5" height="5" fill="#e0e2e4"/><rect x="756" y="434" width="5" height="5" fill="#dfdfdf"/><rect x="756" y="439" width="5" height="5" fill="#e0e2e4"/><rect x="761" y="434" width="5" height="5" fill="#dedfe1"/><rect x="761" y="439" width="5" height="5" fill="#dedfe1"/><rect x="766" y="434" width="5" height="5" fill="#e0e2e4"/><rect x="766" y="439" width="5" height="5" fill="#ece9e6"/><rect x="871" y="434" width="5" height="5" fill="#e4e6ea"/><rect x="871" y="439" width="5" height="5" fill="#dedfe1"/><rect x="871" y="444" width="5" height="5" fill="#e9e9ea"/><rect x="876" y="434" width="5" height="5" fill="#eaebec"/><rect x="876" y="439" width="5" height="5" fill="#cdd0d5"/><rect x="876" y="444" width="5" height="5" fill="#f3ece8"/><rect x="881" y="434" width="5" height="5" fill="#e8e8e8"/><rect x="881" y="439" width="5" height="5" fill="#cdd0d5"/><rect x="886" y="434" width="5" height="5" fill="#dadcdf"/><rect x="886" y="439" width="5" height="5" fill="#dfdfdf"/><rect x="891" y="434" width="5" height="5" fill="#e6e6e6"/><rect x="891" y="439" width="5" height="5" fill="#e4e4e4"/><rect x="896" y="434" width="5" height="5" fill="#e0e2e4"/><rect x="896" y="439" width="5" height="5" fill="#e6e6e6"/><rect x="896" y="444" width="5" height="5" fill="#eef1f5"/><rect x="901" y="434" width="5" height="5" fill="#dedfe1"/><rect x="901" y="439" width="5" height="5" fill="#d6d8dc"/><rect x="906" y="434" width="5" height="5" fill="#ece8e4"/><rect x="906" y="439" width="5" height="5" fill="#eceef4"/><rect x="906" y="444" width="5" height="5" fill="#eef1f5"/><rect x="911" y="434" width="5" height="5" fill="#eaeef3"/><rect x="911" y="439" width="5" height="5" fill="#ece9e6"/><rect x="916" y="434" width="5" height="5" fill="#e4e6ea"/><rect x="916" y="439" width="5" height="5" fill="#dedfe1"/><rect x="916" y="444" width="5" height="5" fill="#f2f2f2"/><rect x="921" y="434" width="5" height="5" fill="#dedfe1"/><rect x="921" y="439" width="5" height="5" fill="#eaebec"/><rect x="921" y="444" width="5" height="5" fill="#f4f1ee"/><rect x="926" y="429" width="5" height="5" fill="#f3ece8"/><rect x="926" y="434" width="5" height="5" fill="#d2d4d8"/><rect x="926" y="439" width="5" height="5" fill="#e8e8e8"/><rect x="926" y="444" width="5" height="5" fill="#eef1f5"/><rect x="931" y="434" width="5" height="5" fill="#e2dfdc"/><rect x="931" y="439" width="5" height="5" fill="#dfdfdf"/><rect x="936" y="429" width="5" height="5" fill="#f2f2f2"/><rect x="936" y="434" width="5" height="5" fill="#e4e6ea"/><rect x="936" y="439" width="5" height="5" fill="#cdd0d5"/><rect x="941" y="429" width="5" height="5" fill="#ececec"/><rect x="941" y="434" width="5" height="5" fill="#e4e4e4"/><rect x="941" y="439" width="5" height="5" fill="#e4e4e4"/><rect x="1111" y="434" width="5" height="5" fill="#dedfe1"/><rect x="1111" y="439" width="5" height="5" fill="#e4e4e4"/><rect x="1116" y="434" width="5" height="5" fill="#eaeef3"/><rect x="1116" y="439" width="5" height="5" fill="#cdd0d5"/><rect x="1121" y="434" width="5" height="5" fill="#d6d8dc"/><rect x="1121" y="439" width="5" height="5" fill="#ece9e6"/><rect x="1126" y="434" width="5" height="5" fill="#dedfe1"/><rect x="1126" y="439" width="5" height="5" fill="#d2d4d8"/><rect x="1131" y="434" width="5" height="5" fill="#ece9e6"/><rect x="1131" y="439" width="5" height="5" fill="#dedad7"/><rect x="1136" y="429" width="5" height="5" fill="#f0f0f0"/><rect x="1136" y="434" width="5" height="5" fill="#e4e4e4"/><rect x="1136" y="439" width="5" height="5" fill="#eaebec"/><rect x="1141" y="434" width="5" height="5" fill="#e6e6e6"/><rect x="1141" y="439" width="5" height="5" fill="#dedfe1"/><rect x="1146" y="434" width="5" height="5" fill="#eaebec"/><rect x="1146" y="439" width="5" height="5" fill="#ece9e6"/><rect x="1151" y="434" width="5" height="5" fill="#ece9e6"/><rect x="1151" y="439" width="5" height="5" fill="#dadcdf"/><rect x="1156" y="434" width="5" height="5" fill="#eaebec"/><rect x="1156" y="439" width="5" height="5" fill="#e4e6ea"/><rect x="1161" y="434" width="5" height="5" fill="#dfdfdf"/><rect x="1161" y="439" width="5" height="5" fill="#e0e2e4"/><rect x="1166" y="434" width="5" height="5" fill="#d6d8dc"/><rect x="1166" y="439" width="5" height="5" fill="#d2d4d8"/><rect x="1171" y="434" width="5" height="5" fill="#e0e2e4"/><rect x="1171" y="439" width="5" height="5" fill="#e8e8e8"/><rect x="1171" y="444" width="5" height="5" fill="#f3ece8"/><rect x="1176" y="429" width="5" height="5" fill="#f0f0f0"/><rect x="1176" y="434" width="5" height="5" fill="#e0e2e4"/><rect x="1176" y="439" width="5" height="5" fill="#eaeef3"/><rect x="1176" y="444" width="5" height="5" fill="#eef1f5"/><rect x="1296" y="434" width="5" height="5" fill="#dee2e6"/><rect x="1296" y="439" width="5" height="5" fill="#e0e2e4"/><rect x="1296" y="444" width="5" height="5" fill="#ececec"/><rect x="1301" y="434" width="5" height="5" fill="#e4e4e4"/><rect x="1301" y="439" width="5" height="5" fill="#dcdcdc"/><rect x="1301" y="444" width="5" height="5" fill="#f4f1ee"/><rect x="1306" y="434" width="5" height="5" fill="#dee2e6"/><rect x="1306" y="439" width="5" height="5" fill="#e8e8e8"/><rect x="1306" y="444" width="5" height="5" fill="#eef1f5"/><rect x="1311" y="434" width="5" height="5" fill="#e8ecf0"/><rect x="1311" y="439" width="5" height="5" fill="#d2d4d8"/><rect x="1311" y="444" width="5" height="5" fill="#f6f6f6"/><rect x="1316" y="434" width="5" height="5" fill="#e2e2e2"/><rect x="1316" y="439" width="5" height="5" fill="#dedfe1"/><rect x="1316" y="444" width="5" height="5" fill="#f0f0f0"/><rect x="1321" y="434" width="5" height="5" fill="#e4e4e4"/><rect x="1321" y="439" width="5" height="5" fill="#dcdcdc"/><rect x="1321" y="444" width="5" height="5" fill="#ececec"/><rect x="1396" y="434" width="5" height="5" fill="#ece8e4"/><rect x="1396" y="439" width="5" height="5" fill="#e6e6e6"/><rect x="1396" y="444" width="5" height="5" fill="#f3ece8"/><rect x="1401" y="434" width="5" height="5" fill="#e8ecf0"/><rect x="1401" y="439" width="5" height="5" fill="#dcdcdc"/><rect x="1401" y="444" width="5" height="5" fill="#f6f6f6"/><rect x="1406" y="434" width="5" height="5" fill="#eceef4"/><rect x="1406" y="439" width="5" height="5" fill="#e0e2e4"/><rect x="1406" y="444" width="5" height="5" fill="#ececec"/><rect x="1411" y="434" width="5" height="5" fill="#dee2e6"/><rect x="1411" y="439" width="5" height="5" fill="#cdd0d5"/><rect x="1411" y="444" width="5" height="5" fill="#e9e9ea"/><rect x="1416" y="434" width="5" height="5" fill="#e8ecf0"/><rect x="1416" y="439" width="5" height="5" fill="#dedad7"/><rect x="1416" y="444" width="5" height="5" fill="#f6f6f6"/><rect x="1421" y="434" width="5" height="5" fill="#e8ecf0"/><rect x="1421" y="439" width="5" height="5" fill="#dadcdf"/><rect x="1421" y="444" width="5" height="5" fill="#f3ece8"/><rect x="1511" y="434" width="5" height="5" fill="#e6e4e0"/><rect x="1511" y="439" width="5" height="5" fill="#dedfe1"/><rect x="1511" y="444" width="5" height="5" fill="#f3ece8"/><rect x="1516" y="434" width="5" height="5" fill="#eceef4"/><rect x="1516" y="439" width="5" height="5" fill="#eaeef3"/><rect x="1516" y="444" width="5" height="5" fill="#eef1f5"/><rect x="1521" y="434" width="5" height="5" fill="#dee2e6"/><rect x="1521" y="439" width="5" height="5" fill="#d6d8dc"/><rect x="1521" y="444" width="5" height="5" fill="#f0f0f0"/><rect x="1526" y="434" width="5" height="5" fill="#eceef4"/><rect x="1526" y="439" width="5" height="5" fill="#e4e4e4"/><rect x="1526" y="444" width="5" height="5" fill="#ececec"/><rect x="1531" y="434" width="5" height="5" fill="#e2e2e2"/><rect x="1531" y="439" width="5" height="5" fill="#e6e6e6"/><rect x="1531" y="444" width="5" height="5" fill="#f2f2f2"/><rect x="1536" y="434" width="5" height="5" fill="#e6e4e0"/><rect x="1536" y="439" width="5" height="5" fill="#e2dfdc"/><rect x="1536" y="444" width="5" height="5" fill="#f2f2f2"/><rect x="226" y="469" width="5" height="5" fill="#dedad7"/><rect x="226" y="474" width="5" height="5" fill="#dfdfdf"/><rect x="231" y="469" width="5" height="5" fill="#d6d8dc"/><rect x="231" y="474" width="5" height="5" fill="#e4e4e4"/><rect x="236" y="464" width="5" height="5" fill="#f6f6f6"/><rect x="236" y="469" width="5" height="5" fill="#dedfe1"/><rect x="236" y="474" width="5" height="5" fill="#cdd0d5"/><rect x="241" y="464" width="5" height="5" fill="#e9e9ea"/><rect x="241" y="469" width="5" height="5" fill="#dcdcdc"/><rect x="241" y="474" width="5" height="5" fill="#d2d4d8"/><rect x="246" y="469" width="5" height="5" fill="#e4e6ea"/><rect x="246" y="474" width="5" height="5" fill="#eaeef3"/><rect x="251" y="464" width="5" height="5" fill="#f2f2f2"/><rect x="251" y="469" width="5" height="5" fill="#dedad7"/><rect x="251" y="474" width="5" height="5" fill="#e0e2e4"/><rect x="256" y="469" width="5" height="5" fill="#d6d8dc"/><rect x="256" y="474" width="5" height="5" fill="#eaebec"/><rect x="261" y="469" width="5" height="5" fill="#e4e4e4"/><rect x="261" y="474" width="5" height="5" fill="#dedfe1"/><rect x="361" y="469" width="5" height="5" fill="#eaebec"/><rect x="361" y="474" width="5" height="5" fill="#e4e6ea"/><rect x="366" y="469" width="5" height="5" fill="#e6e6e6"/><rect x="366" y="474" width="5" height="5" fill="#e6e6e6"/><rect x="371" y="469" width="5" height="5" fill="#e2dfdc"/><rect x="371" y="474" width="5" height="5" fill="#dadcdf"/><rect x="376" y="469" width="5" height="5" fill="#e8e8e8"/><rect x="376" y="474" width="5" height="5" fill="#dcdcdc"/><rect x="381" y="469" width="5" height="5" fill="#e8ecf0"/><rect x="381" y="474" width="5" height="5" fill="#eceef4"/><rect x="386" y="464" width="5" height="5" fill="#f4f1ee"/><rect x="386" y="469" width="5" height="5" fill="#dedad7"/><rect x="386" y="474" width="5" height="5" fill="#e4e4e4"/><rect x="391" y="469" width="5" height="5" fill="#e6e6e6"/><rect x="391" y="474" width="5" height="5" fill="#d6d8dc"/><rect x="396" y="469" width="5" height="5" fill="#e8e8e8"/><rect x="396" y="474" width="5" height="5" fill="#dcdcdc"/><rect x="401" y="469" width="5" height="5" fill="#d6d8dc"/><rect x="401" y="474" width="5" height="5" fill="#cdd0d5"/><rect x="406" y="469" width="5" height="5" fill="#e4e6ea"/><rect x="406" y="474" width="5" height="5" fill="#e4e4e4"/><rect x="411" y="464" width="5" height="5" fill="#ececec"/><rect x="411" y="469" width="5" height="5" fill="#dadcdf"/><rect x="411" y="474" width="5" height="5" fill="#d6d8dc"/><rect x="416" y="469" width="5" height="5" fill="#e2dfdc"/><rect x="416" y="474" width="5" height="5" fill="#e0e2e4"/><rect x="421" y="469" width="5" height="5" fill="#d2d4d8"/><rect x="421" y="474" width="5" height="5" fill="#dcdcdc"/><rect x="426" y="464" width="5" height="5" fill="#f3ece8"/><rect x="426" y="469" width="5" height="5" fill="#dadcdf"/><rect x="426" y="474" width="5" height="5" fill="#cdd0d5"/><rect x="431" y="469" width="5" height="5" fill="#dadcdf"/><rect x="431" y="474" width="5" height="5" fill="#dfdfdf"/><rect x="436" y="469" width="5" height="5" fill="#e4e6ea"/><rect x="436" y="474" width="5" height="5" fill="#dcdcdc"/><rect x="441" y="469" width="5" height="5" fill="#e0e2e4"/><rect x="441" y="474" width="5" height="5" fill="#d6d8dc"/><rect x="446" y="464" width="5" height="5" fill="#f6f6f6"/><rect x="446" y="469" width="5" height="5" fill="#dfdfdf"/><rect x="446" y="474" width="5" height="5" fill="#e0e2e4"/><rect x="451" y="469" width="5" height="5" fill="#dadcdf"/><rect x="451" y="474" width="5" height="5" fill="#e6e6e6"/><rect x="456" y="469" width="5" height="5" fill="#ece9e6"/><rect x="456" y="474" width="5" height="5" fill="#e4e4e4"/><rect x="461" y="469" width="5" height="5" fill="#d6d8dc"/><rect x="461" y="474" width="5" height="5" fill="#e0e2e4"/><rect x="466" y="469" width="5" height="5" fill="#e0e2e4"/><rect x="466" y="474" width="5" height="5" fill="#dadcdf"/><rect x="471" y="469" width="5" height="5" fill="#dfdfdf"/><rect x="471" y="474" width="5" height="5" fill="#cdd0d5"/><rect x="476" y="469" width="5" height="5" fill="#dfdfdf"/><rect x="476" y="474" width="5" height="5" fill="#e2dfdc"/><rect x="481" y="464" width="5" height="5" fill="#f0f0f0"/><rect x="481" y="469" width="5" height="5" fill="#e0e2e4"/><rect x="481" y="474" width="5" height="5" fill="#dcdcdc"/><rect x="486" y="464" width="5" height="5" fill="#eef1f5"/><rect x="486" y="469" width="5" height="5" fill="#d2d4d8"/><rect x="486" y="474" width="5" height="5" fill="#e2dfdc"/><rect x="491" y="469" width="5" height="5" fill="#dedad7"/><rect x="491" y="474" width="5" height="5" fill="#e4e6ea"/><rect x="496" y="464" width="5" height="5" fill="#ececec"/><rect x="496" y="469" width="5" height="5" fill="#eaeef3"/><rect x="496" y="474" width="5" height="5" fill="#d2d4d8"/><rect x="501" y="469" width="5" height="5" fill="#dedad7"/><rect x="501" y="474" width="5" height="5" fill="#d2d4d8"/><rect x="506" y="464" width="5" height="5" fill="#f2f2f2"/><rect x="506" y="469" width="5" height="5" fill="#eaebec"/><rect x="506" y="474" width="5" height="5" fill="#e4e4e4"/><rect x="511" y="469" width="5" height="5" fill="#dcdcdc"/><rect x="511" y="474" width="5" height="5" fill="#e6e6e6"/><rect x="626" y="464" width="5" height="5" fill="#f6f6f6"/><rect x="626" y="469" width="5" height="5" fill="#eaeef3"/><rect x="626" y="474" width="5" height="5" fill="#e4e4e4"/><rect x="626" y="479" width="5" height="5" fill="#f2f2f2"/><rect x="631" y="464" width="5" height="5" fill="#eef1f5"/><rect x="631" y="469" width="5" height="5" fill="#e0e2e4"/><rect x="631" y="474" width="5" height="5" fill="#dedad7"/><rect x="631" y="479" width="5" height="5" fill="#f2f2f2"/><rect x="636" y="464" width="5" height="5" fill="#f4f1ee"/><rect x="636" y="469" width="5" height="5" fill="#dfdfdf"/><rect x="636" y="474" width="5" height="5" fill="#d2d4d8"/><rect x="636" y="479" width="5" height="5" fill="#f4f1ee"/><rect x="646" y="469" width="5" height="5" fill="#dedad7"/><rect x="646" y="474" width="5" height="5" fill="#e4e4e4"/><rect x="651" y="469" width="5" height="5" fill="#e0e2e4"/><rect x="651" y="474" width="5" height="5" fill="#dfdfdf"/><rect x="656" y="469" width="5" height="5" fill="#dcdcdc"/><rect x="656" y="474" width="5" height="5" fill="#e6e6e6"/><rect x="661" y="469" width="5" height="5" fill="#eaeef3"/><rect x="661" y="474" width="5" height="5" fill="#d2d4d8"/><rect x="666" y="469" width="5" height="5" fill="#e2dfdc"/><rect x="666" y="474" width="5" height="5" fill="#cdd0d5"/><rect x="671" y="469" width="5" height="5" fill="#e6e6e6"/><rect x="671" y="474" width="5" height="5" fill="#dfdfdf"/><rect x="676" y="469" width="5" height="5" fill="#e4e4e4"/><rect x="676" y="474" width="5" height="5" fill="#ece9e6"/><rect x="681" y="469" width="5" height="5" fill="#ece9e6"/><rect x="681" y="474" width="5" height="5" fill="#dadcdf"/><rect x="686" y="469" width="5" height="5" fill="#eaeef3"/><rect x="686" y="474" width="5" height="5" fill="#dedfe1"/><rect x="691" y="469" width="5" height="5" fill="#dfdfdf"/><rect x="691" y="474" width="5" height="5" fill="#dcdcdc"/><rect x="696" y="469" width="5" height="5" fill="#e0e2e4"/><rect x="696" y="474" width="5" height="5" fill="#e6e6e6"/><rect x="701" y="469" width="5" height="5" fill="#cdd0d5"/><rect x="701" y="474" width="5" height="5" fill="#e6e6e6"/><rect x="706" y="469" width="5" height="5" fill="#dedad7"/><rect x="706" y="474" width="5" height="5" fill="#e4e4e4"/><rect x="711" y="469" width="5" height="5" fill="#eaebec"/><rect x="711" y="474" width="5" height="5" fill="#e0e2e4"/><rect x="716" y="469" width="5" height="5" fill="#ece9e6"/><rect x="716" y="474" width="5" height="5" fill="#eaebec"/><rect x="721" y="469" width="5" height="5" fill="#dedad7"/><rect x="721" y="474" width="5" height="5" fill="#e8e8e8"/><rect x="726" y="464" width="5" height="5" fill="#eef1f5"/><rect x="726" y="469" width="5" height="5" fill="#e4e6ea"/><rect x="726" y="474" width="5" height="5" fill="#cdd0d5"/><rect x="731" y="469" width="5" height="5" fill="#d2d4d8"/><rect x="731" y="474" width="5" height="5" fill="#d6d8dc"/><rect x="736" y="469" width="5" height="5" fill="#dadcdf"/><rect x="736" y="474" width="5" height="5" fill="#eaebec"/><rect x="741" y="469" width="5" height="5" fill="#ece9e6"/><rect x="741" y="474" width="5" height="5" fill="#e4e4e4"/><rect x="746" y="469" width="5" height="5" fill="#dedfe1"/><rect x="746" y="474" width="5" height="5" fill="#e2dfdc"/><rect x="751" y="469" width="5" height="5" fill="#d6d8dc"/><rect x="751" y="474" width="5" height="5" fill="#e6e6e6"/><rect x="756" y="469" width="5" height="5" fill="#cdd0d5"/><rect x="756" y="474" width="5" height="5" fill="#d2d4d8"/><rect x="761" y="469" width="5" height="5" fill="#cdd0d5"/><rect x="761" y="474" width="5" height="5" fill="#e4e6ea"/><rect x="766" y="469" width="5" height="5" fill="#eaeef3"/><rect x="766" y="474" width="5" height="5" fill="#ece9e6"/><rect x="871" y="469" width="5" height="5" fill="#cdd0d5"/><rect x="871" y="474" width="5" height="5" fill="#dfdfdf"/><rect x="876" y="469" width="5" height="5" fill="#d6d8dc"/><rect x="876" y="474" width="5" height="5" fill="#e4e4e4"/><rect x="876" y="479" width="5" height="5" fill="#eef1f5"/><rect x="881" y="469" width="5" height="5" fill="#dcdcdc"/><rect x="881" y="474" width="5" height="5" fill="#e0e2e4"/><rect x="886" y="469" width="5" height="5" fill="#dfdfdf"/><rect x="886" y="474" width="5" height="5" fill="#eaebec"/><rect x="891" y="469" width="5" height="5" fill="#e0e2e4"/><rect x="891" y="474" width="5" height="5" fill="#ece9e6"/><rect x="896" y="469" width="5" height="5" fill="#e6e6e6"/><rect x="896" y="474" width="5" height="5" fill="#eaeef3"/><rect x="901" y="469" width="5" height="5" fill="#d6d8dc"/><rect x="901" y="474" width="5" height="5" fill="#dfdfdf"/><rect x="906" y="469" width="5" height="5" fill="#dee2e6"/><rect x="906" y="474" width="5" height="5" fill="#ece8e4"/><rect x="906" y="479" width="5" height="5" fill="#e9e9ea"/><rect x="911" y="469" width="5" height="5" fill="#e2dfdc"/><rect x="911" y="474" width="5" height="5" fill="#dedfe1"/><rect x="911" y="479" width="5" height="5" fill="#ececec"/><rect x="916" y="469" width="5" height="5" fill="#cdd0d5"/><rect x="916" y="474" width="5" height="5" fill="#dadcdf"/><rect x="921" y="464" width="5" height="5" fill="#e9e9ea"/><rect x="921" y="469" width="5" height="5" fill="#e2dfdc"/><rect x="921" y="474" width="5" height="5" fill="#e8e8e8"/><rect x="926" y="469" width="5" height="5" fill="#e2dfdc"/><rect x="926" y="474" width="5" height="5" fill="#ece9e6"/><rect x="931" y="469" width="5" height="5" fill="#ece9e6"/><rect x="931" y="474" width="5" height="5" fill="#eaebec"/><rect x="936" y="464" width="5" height="5" fill="#eef1f5"/><rect x="936" y="469" width="5" height="5" fill="#d2d4d8"/><rect x="936" y="474" width="5" height="5" fill="#dcdcdc"/><rect x="936" y="479" width="5" height="5" fill="#f6f6f6"/><rect x="941" y="469" width="5" height="5" fill="#dadcdf"/><rect x="941" y="474" width="5" height="5" fill="#e4e6ea"/><rect x="1111" y="469" width="5" height="5" fill="#cdd0d5"/><rect x="1111" y="474" width="5" height="5" fill="#d6d8dc"/><rect x="1111" y="479" width="5" height="5" fill="#f2f2f2"/><rect x="1116" y="469" width="5" height="5" fill="#e4e4e4"/><rect x="1116" y="474" width="5" height="5" fill="#ece9e6"/><rect x="1121" y="464" width="5" height="5" fill="#e9e9ea"/><rect x="1121" y="469" width="5" height="5" fill="#cdd0d5"/><rect x="1121" y="474" width="5" height="5" fill="#d2d4d8"/><rect x="1126" y="469" width="5" height="5" fill="#e2dfdc"/><rect x="1126" y="474" width="5" height="5" fill="#dadcdf"/><rect x="1131" y="469" width="5" height="5" fill="#eaebec"/><rect x="1131" y="474" width="5" height="5" fill="#e6e6e6"/><rect x="1136" y="464" width="5" height="5" fill="#ececec"/><rect x="1136" y="469" width="5" height="5" fill="#e6e6e6"/><rect x="1136" y="474" width="5" height="5" fill="#e4e4e4"/><rect x="1136" y="479" width="5" height="5" fill="#f3ece8"/><rect x="1141" y="464" width="5" height="5" fill="#f2f2f2"/><rect x="1141" y="469" width="5" height="5" fill="#eaebec"/><rect x="1141" y="474" width="5" height="5" fill="#d2d4d8"/><rect x="1146" y="469" width="5" height="5" fill="#dedad7"/><rect x="1146" y="474" width="5" height="5" fill="#dedfe1"/><rect x="1151" y="464" width="5" height="5" fill="#ececec"/><rect x="1151" y="469" width="5" height="5" fill="#dadcdf"/><rect x="1151" y="474" width="5" height="5" fill="#cdd0d5"/><rect x="1156" y="469" width="5" height="5" fill="#d2d4d8"/><rect x="1156" y="474" width="5" height="5" fill="#eaeef3"/><rect x="1161" y="469" width="5" height="5" fill="#e0e2e4"/><rect x="1161" y="474" width="5" height="5" fill="#eaebec"/><rect x="1166" y="469" width="5" height="5" fill="#d6d8dc"/><rect x="1166" y="474" width="5" height="5" fill="#e6e6e6"/><rect x="1166" y="479" width="5" height="5" fill="#f2f2f2"/><rect x="1171" y="464" width="5" height="5" fill="#eef1f5"/><rect x="1171" y="469" width="5" height="5" fill="#dedad7"/><rect x="1171" y="474" width="5" height="5" fill="#d2d4d8"/><rect x="1171" y="479" width="5" height="5" fill="#f2f2f2"/><rect x="1176" y="469" width="5" height="5" fill="#cdd0d5"/><rect x="1176" y="474" width="5" height="5" fill="#dcdcdc"/><rect x="1296" y="469" width="5" height="5" fill="#eceef4"/><rect x="1296" y="474" width="5" height="5" fill="#dedfe1"/><rect x="1296" y="479" width="5" height="5" fill="#f2f2f2"/><rect x="1301" y="469" width="5" height="5" fill="#e2e2e2"/><rect x="1301" y="474" width="5" height="5" fill="#cdd0d5"/><rect x="1301" y="479" width="5" height="5" fill="#eef1f5"/><rect x="1306" y="469" width="5" height="5" fill="#ece8e4"/><rect x="1306" y="474" width="5" height="5" fill="#dcdcdc"/><rect x="1306" y="479" width="5" height="5" fill="#eef1f5"/><rect x="1311" y="469" width="5" height="5" fill="#dee2e6"/><rect x="1311" y="474" width="5" height="5" fill="#e6e6e6"/><rect x="1311" y="479" width="5" height="5" fill="#f6f6f6"/><rect x="1316" y="469" width="5" height="5" fill="#e8ecf0"/><rect x="1316" y="474" width="5" height="5" fill="#dfdfdf"/><rect x="1316" y="479" width="5" height="5" fill="#f4f1ee"/><rect x="1321" y="469" width="5" height="5" fill="#e2e2e2"/><rect x="1321" y="474" width="5" height="5" fill="#d6d8dc"/><rect x="1321" y="479" width="5" height="5" fill="#ececec"/><rect x="1396" y="469" width="5" height="5" fill="#e8ecf0"/><rect x="1396" y="474" width="5" height="5" fill="#dedfe1"/><rect x="1396" y="479" width="5" height="5" fill="#f2f2f2"/><rect x="1401" y="469" width="5" height="5" fill="#e2e2e2"/><rect x="1401" y="474" width="5" height="5" fill="#eaeef3"/><rect x="1401" y="479" width="5" height="5" fill="#e9e9ea"/><rect x="1406" y="469" width="5" height="5" fill="#e2e2e2"/><rect x="1406" y="474" width="5" height="5" fill="#d6d8dc"/><rect x="1406" y="479" width="5" height="5" fill="#f2f2f2"/><rect x="1411" y="469" width="5" height="5" fill="#e6e4e0"/><rect x="1411" y="474" width="5" height="5" fill="#dedfe1"/><rect x="1411" y="479" width="5" height="5" fill="#f4f1ee"/><rect x="1416" y="469" width="5" height="5" fill="#e4e4e4"/><rect x="1416" y="474" width="5" height="5" fill="#dadcdf"/><rect x="1416" y="479" width="5" height="5" fill="#f6f6f6"/><rect x="1421" y="469" width="5" height="5" fill="#dee2e6"/><rect x="1421" y="474" width="5" height="5" fill="#dedad7"/><rect x="1421" y="479" width="5" height="5" fill="#f2f2f2"/><rect x="1511" y="469" width="5" height="5" fill="#dee2e6"/><rect x="1511" y="474" width="5" height="5" fill="#e2dfdc"/><rect x="1511" y="479" width="5" height="5" fill="#eef1f5"/><rect x="1516" y="469" width="5" height="5" fill="#dee2e6"/><rect x="1516" y="474" width="5" height="5" fill="#e6e6e6"/><rect x="1516" y="479" width="5" height="5" fill="#f0f0f0"/><rect x="1521" y="469" width="5" height="5" fill="#e8ecf0"/><rect x="1521" y="474" width="5" height="5" fill="#e4e6ea"/><rect x="1521" y="479" width="5" height="5" fill="#f3ece8"/><rect x="1526" y="469" width="5" height="5" fill="#dee2e6"/><rect x="1526" y="474" width="5" height="5" fill="#e2dfdc"/><rect x="1526" y="479" width="5" height="5" fill="#e9e9ea"/><rect x="1531" y="469" width="5" height="5" fill="#e8ecf0"/><rect x="1531" y="474" width="5" height="5" fill="#e4e6ea"/><rect x="1531" y="479" width="5" height="5" fill="#f2f2f2"/><rect x="1536" y="469" width="5" height="5" fill="#eceef4"/><rect x="1536" y="474" width="5" height="5" fill="#e4e6ea"/><rect x="1536" y="479" width="5" height="5" fill="#f2f2f2"/><rect x="226" y="504" width="5" height="5" fill="#e4e4e4"/><rect x="226" y="509" width="5" height="5" fill="#e4e6ea"/><rect x="231" y="499" width="5" height="5" fill="#e9e9ea"/><rect x="231" y="504" width="5" height="5" fill="#d6d8dc"/><rect x="231" y="509" width="5" height="5" fill="#dfdfdf"/><rect x="236" y="499" width="5" height="5" fill="#f4f1ee"/><rect x="236" y="504" width="5" height="5" fill="#d2d4d8"/><rect x="236" y="509" width="5" height="5" fill="#d2d4d8"/><rect x="241" y="504" width="5" height="5" fill="#ece9e6"/><rect x="241" y="509" width="5" height="5" fill="#dedfe1"/><rect x="246" y="499" width="5" height="5" fill="#f4f1ee"/><rect x="246" y="504" width="5" height="5" fill="#dadcdf"/><rect x="246" y="509" width="5" height="5" fill="#dcdcdc"/><rect x="251" y="504" width="5" height="5" fill="#dedad7"/><rect x="251" y="509" width="5" height="5" fill="#d2d4d8"/><rect x="256" y="499" width="5" height="5" fill="#f4f1ee"/><rect x="256" y="504" width="5" height="5" fill="#dedad7"/><rect x="256" y="509" width="5" height="5" fill="#e2dfdc"/><rect x="261" y="499" width="5" height="5" fill="#f6f6f6"/><rect x="261" y="504" width="5" height="5" fill="#dadcdf"/><rect x="261" y="509" width="5" height="5" fill="#e2dfdc"/><rect x="361" y="504" width="5" height="5" fill="#dcdcdc"/><rect x="361" y="509" width="5" height="5" fill="#eaebec"/><rect x="366" y="499" width="5" height="5" fill="#f4f1ee"/><rect x="366" y="504" width="5" height="5" fill="#dedad7"/><rect x="366" y="509" width="5" height="5" fill="#e6e6e6"/><rect x="371" y="504" width="5" height="5" fill="#dedad7"/><rect x="371" y="509" width="5" height="5" fill="#dadcdf"/><rect x="376" y="504" width="5" height="5" fill="#dedfe1"/><rect x="376" y="509" width="5" height="5" fill="#d6d8dc"/><rect x="381" y="504" width="5" height="5" fill="#e4e4e4"/><rect x="381" y="509" width="5" height="5" fill="#ece8e4"/><rect x="386" y="504" width="5" height="5" fill="#cdd0d5"/><rect x="386" y="509" width="5" height="5" fill="#e0e2e4"/><rect x="391" y="504" width="5" height="5" fill="#e8e8e8"/><rect x="391" y="509" width="5" height="5" fill="#dfdfdf"/><rect x="396" y="504" width="5" height="5" fill="#eaebec"/><rect x="396" y="509" width="5" height="5" fill="#e4e6ea"/><rect x="401" y="504" width="5" height="5" fill="#e0e2e4"/><rect x="401" y="509" width="5" height="5" fill="#eaebec"/><rect x="406" y="504" width="5" height="5" fill="#eaebec"/><rect x="406" y="509" width="5" height="5" fill="#e8e8e8"/><rect x="411" y="504" width="5" height="5" fill="#eaebec"/><rect x="411" y="509" width="5" height="5" fill="#e2dfdc"/><rect x="416" y="499" width="5" height="5" fill="#f0f0f0"/><rect x="416" y="504" width="5" height="5" fill="#e4e6ea"/><rect x="416" y="509" width="5" height="5" fill="#eaeef3"/><rect x="421" y="504" width="5" height="5" fill="#dadcdf"/><rect x="421" y="509" width="5" height="5" fill="#dedad7"/><rect x="426" y="504" width="5" height="5" fill="#cdd0d5"/><rect x="426" y="509" width="5" height="5" fill="#e2dfdc"/><rect x="431" y="499" width="5" height="5" fill="#f3ece8"/><rect x="431" y="504" width="5" height="5" fill="#e8e8e8"/><rect x="431" y="509" width="5" height="5" fill="#dcdcdc"/><rect x="436" y="499" width="5" height="5" fill="#ececec"/><rect x="436" y="504" width="5" height="5" fill="#dadcdf"/><rect x="436" y="509" width="5" height="5" fill="#dedad7"/><rect x="441" y="504" width="5" height="5" fill="#d6d8dc"/><rect x="441" y="509" width="5" height="5" fill="#dadcdf"/><rect x="446" y="504" width="5" height="5" fill="#dadcdf"/><rect x="446" y="509" width="5" height="5" fill="#dadcdf"/><rect x="451" y="499" width="5" height="5" fill="#f4f1ee"/><rect x="451" y="504" width="5" height="5" fill="#d2d4d8"/><rect x="451" y="509" width="5" height="5" fill="#cdd0d5"/><rect x="456" y="504" width="5" height="5" fill="#cdd0d5"/><rect x="456" y="509" width="5" height="5" fill="#eaeef3"/><rect x="461" y="499" width="5" height="5" fill="#f4f1ee"/><rect x="461" y="504" width="5" height="5" fill="#e6e6e6"/><rect x="461" y="509" width="5" height="5" fill="#dedad7"/><rect x="466" y="504" width="5" height="5" fill="#dedad7"/><rect x="466" y="509" width="5" height="5" fill="#eaebec"/><rect x="471" y="499" width="5" height="5" fill="#f2f2f2"/><rect x="471" y="504" width="5" height="5" fill="#dadcdf"/><rect x="471" y="509" width="5" height="5" fill="#dcdcdc"/><rect x="476" y="499" width="5" height="5" fill="#eef1f5"/><rect x="476" y="504" width="5" height="5" fill="#e4e4e4"/><rect x="476" y="509" width="5" height="5" fill="#dadcdf"/><rect x="481" y="499" width="5" height="5" fill="#f4f1ee"/><rect x="481" y="504" width="5" height="5" fill="#cdd0d5"/><rect x="481" y="509" width="5" height="5" fill="#d6d8dc"/><rect x="486" y="504" width="5" height="5" fill="#e8e8e8"/><rect x="486" y="509" width="5" height="5" fill="#cdd0d5"/><rect x="491" y="499" width="5" height="5" fill="#f4f1ee"/><rect x="491" y="504" width="5" height="5" fill="#e8e8e8"/><rect x="491" y="509" width="5" height="5" fill="#ece9e6"/><rect x="496" y="499" width="5" height="5" fill="#f2f2f2"/><rect x="496" y="504" width="5" height="5" fill="#ece9e6"/><rect x="496" y="509" width="5" height="5" fill="#e4e6ea"/><rect x="501" y="504" width="5" height="5" fill="#e4e4e4"/><rect x="501" y="509" width="5" height="5" fill="#ece9e6"/><rect x="506" y="499" width="5" height="5" fill="#f0f0f0"/><rect x="506" y="504" width="5" height="5" fill="#dfdfdf"/><rect x="506" y="509" width="5" height="5" fill="#e6e6e6"/><rect x="511" y="504" width="5" height="5" fill="#dfdfdf"/><rect x="511" y="509" width="5" height="5" fill="#e8e8e8"/><rect x="626" y="499" width="5" height="5" fill="#f0f0f0"/><rect x="626" y="504" width="5" height="5" fill="#dadcdf"/><rect x="626" y="509" width="5" height="5" fill="#e6e6e6"/><rect x="626" y="514" width="5" height="5" fill="#f6f6f6"/><rect x="631" y="499" width="5" height="5" fill="#f4f1ee"/><rect x="631" y="504" width="5" height="5" fill="#dfdfdf"/><rect x="631" y="509" width="5" height="5" fill="#ece9e6"/><rect x="631" y="514" width="5" height="5" fill="#e9e9ea"/><rect x="636" y="499" width="5" height="5" fill="#f2f2f2"/><rect x="636" y="504" width="5" height="5" fill="#d2d4d8"/><rect x="636" y="509" width="5" height="5" fill="#dedad7"/><rect x="636" y="514" width="5" height="5" fill="#f3ece8"/><rect x="646" y="504" width="5" height="5" fill="#e6e6e6"/><rect x="646" y="509" width="5" height="5" fill="#d6d8dc"/><rect x="651" y="504" width="5" height="5" fill="#dedad7"/><rect x="651" y="509" width="5" height="5" fill="#e0e2e4"/><rect x="656" y="504" width="5" height="5" fill="#cdd0d5"/><rect x="656" y="509" width="5" height="5" fill="#dedfe1"/><rect x="661" y="504" width="5" height="5" fill="#dfdfdf"/><rect x="661" y="509" width="5" height="5" fill="#e4e4e4"/><rect x="666" y="504" width="5" height="5" fill="#d6d8dc"/><rect x="666" y="509" width="5" height="5" fill="#d6d8dc"/><rect x="671" y="504" width="5" height="5" fill="#e4e4e4"/><rect x="671" y="509" width="5" height="5" fill="#e0e2e4"/><rect x="676" y="504" width="5" height="5" fill="#dedfe1"/><rect x="676" y="509" width="5" height="5" fill="#dadcdf"/><rect x="681" y="504" width="5" height="5" fill="#d6d8dc"/><rect x="681" y="509" width="5" height="5" fill="#dcdcdc"/><rect x="686" y="504" width="5" height="5" fill="#ece9e6"/><rect x="686" y="509" width="5" height="5" fill="#e8e8e8"/><rect x="691" y="504" width="5" height="5" fill="#dfdfdf"/><rect x="691" y="509" width="5" height="5" fill="#dfdfdf"/><rect x="696" y="504" width="5" height="5" fill="#dedad7"/><rect x="696" y="509" width="5" height="5" fill="#dedad7"/><rect x="701" y="504" width="5" height="5" fill="#eaebec"/><rect x="701" y="509" width="5" height="5" fill="#e8e8e8"/><rect x="706" y="504" width="5" height="5" fill="#e0e2e4"/><rect x="706" y="509" width="5" height="5" fill="#e4e6ea"/><rect x="711" y="499" width="5" height="5" fill="#ececec"/><rect x="711" y="504" width="5" height="5" fill="#dfdfdf"/><rect x="711" y="509" width="5" height="5" fill="#ece9e6"/><rect x="716" y="504" width="5" height="5" fill="#eaeef3"/><rect x="716" y="509" width="5" height="5" fill="#d6d8dc"/><rect x="721" y="504" width="5" height="5" fill="#e4e4e4"/><rect x="721" y="509" width="5" height="5" fill="#eaeef3"/><rect x="726" y="504" width="5" height="5" fill="#eaeef3"/><rect x="726" y="509" width="5" height="5" fill="#e4e6ea"/><rect x="731" y="504" width="5" height="5" fill="#eaeef3"/><rect x="731" y="509" width="5" height="5" fill="#eaeef3"/><rect x="736" y="504" width="5" height="5" fill="#dcdcdc"/><rect x="736" y="509" width="5" height="5" fill="#e8e8e8"/><rect x="741" y="504" width="5" height="5" fill="#dcdcdc"/><rect x="741" y="509" width="5" height="5" fill="#d2d4d8"/><rect x="746" y="504" width="5" height="5" fill="#d2d4d8"/><rect x="746" y="509" width="5" height="5" fill="#e0e2e4"/><rect x="751" y="504" width="5" height="5" fill="#dadcdf"/><rect x="751" y="509" width="5" height="5" fill="#cdd0d5"/><rect x="756" y="504" width="5" height="5" fill="#cdd0d5"/><rect x="756" y="509" width="5" height="5" fill="#eaeef3"/><rect x="761" y="504" width="5" height="5" fill="#dadcdf"/><rect x="761" y="509" width="5" height="5" fill="#e4e4e4"/><rect x="766" y="504" width="5" height="5" fill="#dedfe1"/><rect x="766" y="509" width="5" height="5" fill="#eaebec"/><rect x="871" y="504" width="5" height="5" fill="#e8e8e8"/><rect x="871" y="509" width="5" height="5" fill="#eaebec"/><rect x="876" y="504" width="5" height="5" fill="#dedad7"/><rect x="876" y="509" width="5" height="5" fill="#ece9e6"/><rect x="881" y="504" width="5" height="5" fill="#e0e2e4"/><rect x="881" y="509" width="5" height="5" fill="#dfdfdf"/><rect x="886" y="504" width="5" height="5" fill="#dedad7"/><rect x="886" y="509" width="5" height="5" fill="#e2dfdc"/><rect x="886" y="514" width="5" height="5" fill="#eef1f5"/><rect x="891" y="504" width="5" height="5" fill="#dadcdf"/><rect x="891" y="509" width="5" height="5" fill="#e6e6e6"/><rect x="896" y="504" width="5" height="5" fill="#eaeef3"/><rect x="896" y="509" width="5" height="5" fill="#dfdfdf"/><rect x="901" y="504" width="5" height="5" fill="#ece9e6"/><rect x="901" y="509" width="5" height="5" fill="#dcdcdc"/><rect x="906" y="504" width="5" height="5" fill="#eceef4"/><rect x="906" y="509" width="5" height="5" fill="#e6e4e0"/><rect x="911" y="499" width="5" height="5" fill="#ececec"/><rect x="911" y="504" width="5" height="5" fill="#e8e8e8"/><rect x="911" y="509" width="5" height="5" fill="#e6e6e6"/><rect x="916" y="504" width="5" height="5" fill="#dedad7"/><rect x="916" y="509" width="5" height="5" fill="#eaeef3"/><rect x="921" y="504" width="5" height="5" fill="#dedfe1"/><rect x="921" y="509" width="5" height="5" fill="#dadcdf"/><rect x="926" y="499" width="5" height="5" fill="#f2f2f2"/><rect x="926" y="504" width="5" height="5" fill="#e4e6ea"/><rect x="926" y="509" width="5" height="5" fill="#e2dfdc"/><rect x="926" y="514" width="5" height="5" fill="#f4f1ee"/><rect x="931" y="504" width="5" height="5" fill="#eaebec"/><rect x="931" y="509" width="5" height="5" fill="#e0e2e4"/><rect x="936" y="504" width="5" height="5" fill="#cdd0d5"/><rect x="936" y="509" width="5" height="5" fill="#dadcdf"/><rect x="936" y="514" width="5" height="5" fill="#ececec"/><rect x="941" y="499" width="5" height="5" fill="#f0f0f0"/><rect x="941" y="504" width="5" height="5" fill="#cdd0d5"/><rect x="941" y="509" width="5" height="5" fill="#eaebec"/><rect x="1111" y="504" width="5" height="5" fill="#e4e4e4"/><rect x="1111" y="509" width="5" height="5" fill="#eaeef3"/><rect x="1116" y="504" width="5" height="5" fill="#dadcdf"/><rect x="1116" y="509" width="5" height="5" fill="#e2dfdc"/><rect x="1116" y="514" width="5" height="5" fill="#eef1f5"/><rect x="1121" y="499" width="5" height="5" fill="#f3ece8"/><rect x="1121" y="504" width="5" height="5" fill="#e4e6ea"/><rect x="1121" y="509" width="5" height="5" fill="#dfdfdf"/><rect x="1126" y="499" width="5" height="5" fill="#f2f2f2"/><rect x="1126" y="504" width="5" height="5" fill="#dedad7"/><rect x="1126" y="509" width="5" height="5" fill="#e6e6e6"/><rect x="1131" y="504" width="5" height="5" fill="#eaebec"/><rect x="1131" y="509" width="5" height="5" fill="#dedfe1"/><rect x="1136" y="499" width="5" height="5" fill="#ececec"/><rect x="1136" y="504" width="5" height="5" fill="#e6e6e6"/><rect x="1136" y="509" width="5" height="5" fill="#e8e8e8"/><rect x="1141" y="504" width="5" height="5" fill="#cdd0d5"/><rect x="1141" y="509" width="5" height="5" fill="#e4e4e4"/><rect x="1146" y="504" width="5" height="5" fill="#dcdcdc"/><rect x="1146" y="509" width="5" height="5" fill="#d2d4d8"/><rect x="1151" y="499" width="5" height="5" fill="#f6f6f6"/><rect x="1151" y="504" width="5" height="5" fill="#e4e4e4"/><rect x="1151" y="509" width="5" height="5" fill="#e4e6ea"/><rect x="1151" y="514" width="5" height="5" fill="#f2f2f2"/><rect x="1156" y="504" width="5" height="5" fill="#e2dfdc"/><rect x="1156" y="509" width="5" height="5" fill="#d2d4d8"/><rect x="1161" y="504" width="5" height="5" fill="#dcdcdc"/><rect x="1161" y="509" width="5" height="5" fill="#e2dfdc"/><rect x="1166" y="504" width="5" height="5" fill="#dadcdf"/><rect x="1166" y="509" width="5" height="5" fill="#d2d4d8"/><rect x="1171" y="504" width="5" height="5" fill="#eaeef3"/><rect x="1171" y="509" width="5" height="5" fill="#e0e2e4"/><rect x="1176" y="504" width="5" height="5" fill="#eaebec"/><rect x="1176" y="509" width="5" height="5" fill="#e2dfdc"/><rect x="1296" y="504" width="5" height="5" fill="#ece8e4"/><rect x="1296" y="509" width="5" height="5" fill="#d6d8dc"/><rect x="1296" y="514" width="5" height="5" fill="#f0f0f0"/><rect x="1301" y="504" width="5" height="5" fill="#e4e4e4"/><rect x="1301" y="509" width="5" height="5" fill="#eaebec"/><rect x="1301" y="514" width="5" height="5" fill="#f4f1ee"/><rect x="1306" y="504" width="5" height="5" fill="#eceef4"/><rect x="1306" y="509" width="5" height="5" fill="#e4e4e4"/><rect x="1306" y="514" width="5" height="5" fill="#eef1f5"/><rect x="1311" y="504" width="5" height="5" fill="#eceef4"/><rect x="1311" y="509" width="5" height="5" fill="#e8e8e8"/><rect x="1311" y="514" width="5" height="5" fill="#e9e9ea"/><rect x="1316" y="504" width="5" height="5" fill="#e8ecf0"/><rect x="1316" y="509" width="5" height="5" fill="#eaeef3"/><rect x="1316" y="514" width="5" height="5" fill="#f6f6f6"/><rect x="1321" y="504" width="5" height="5" fill="#e8ecf0"/><rect x="1321" y="509" width="5" height="5" fill="#e2dfdc"/><rect x="1321" y="514" width="5" height="5" fill="#e9e9ea"/><rect x="1396" y="504" width="5" height="5" fill="#e8ecf0"/><rect x="1396" y="509" width="5" height="5" fill="#dcdcdc"/><rect x="1396" y="514" width="5" height="5" fill="#e9e9ea"/><rect x="1401" y="504" width="5" height="5" fill="#eceef4"/><rect x="1401" y="509" width="5" height="5" fill="#dedad7"/><rect x="1401" y="514" width="5" height="5" fill="#f3ece8"/><rect x="1406" y="504" width="5" height="5" fill="#e2e2e2"/><rect x="1406" y="509" width="5" height="5" fill="#e4e6ea"/><rect x="1406" y="514" width="5" height="5" fill="#f3ece8"/><rect x="1411" y="504" width="5" height="5" fill="#eceef4"/><rect x="1411" y="509" width="5" height="5" fill="#eaebec"/><rect x="1411" y="514" width="5" height="5" fill="#f6f6f6"/><rect x="1416" y="504" width="5" height="5" fill="#eceef4"/><rect x="1416" y="509" width="5" height="5" fill="#dedfe1"/><rect x="1416" y="514" width="5" height="5" fill="#f6f6f6"/><rect x="1421" y="504" width="5" height="5" fill="#e2e2e2"/><rect x="1421" y="509" width="5" height="5" fill="#e4e4e4"/><rect x="1421" y="514" width="5" height="5" fill="#f6f6f6"/><rect x="1511" y="504" width="5" height="5" fill="#ece8e4"/><rect x="1511" y="509" width="5" height="5" fill="#cdd0d5"/><rect x="1511" y="514" width="5" height="5" fill="#ececec"/><rect x="1516" y="504" width="5" height="5" fill="#ece8e4"/><rect x="1516" y="509" width="5" height="5" fill="#dcdcdc"/><rect x="1516" y="514" width="5" height="5" fill="#f2f2f2"/><rect x="1521" y="504" width="5" height="5" fill="#eceef4"/><rect x="1521" y="509" width="5" height="5" fill="#e4e6ea"/><rect x="1521" y="514" width="5" height="5" fill="#f0f0f0"/><rect x="1526" y="504" width="5" height="5" fill="#eceef4"/><rect x="1526" y="509" width="5" height="5" fill="#d6d8dc"/><rect x="1526" y="514" width="5" height="5" fill="#ececec"/><rect x="1531" y="504" width="5" height="5" fill="#ece8e4"/><rect x="1531" y="509" width="5" height="5" fill="#dcdcdc"/><rect x="1531" y="514" width="5" height="5" fill="#f6f6f6"/><rect x="1536" y="504" width="5" height="5" fill="#e4e4e4"/><rect x="1536" y="509" width="5" height="5" fill="#e8e8e8"/><rect x="1536" y="514" width="5" height="5" fill="#eef1f5"/><rect x="226" y="539" width="5" height="5" fill="#e4e4e4"/><rect x="226" y="544" width="5" height="5" fill="#e6e6e6"/><rect x="231" y="534" width="5" height="5" fill="#f3ece8"/><rect x="231" y="539" width="5" height="5" fill="#dedad7"/><rect x="231" y="544" width="5" height="5" fill="#e0e2e4"/><rect x="236" y="534" width="5" height="5" fill="#f6f6f6"/><rect x="236" y="539" width="5" height="5" fill="#dedfe1"/><rect x="236" y="544" width="5" height="5" fill="#dadcdf"/><rect x="241" y="534" width="5" height="5" fill="#f0f0f0"/><rect x="241" y="539" width="5" height="5" fill="#e6e6e6"/><rect x="241" y="544" width="5" height="5" fill="#dcdcdc"/><rect x="246" y="539" width="5" height="5" fill="#dfdfdf"/><rect x="246" y="544" width="5" height="5" fill="#e0e2e4"/><rect x="251" y="534" width="5" height="5" fill="#f6f6f6"/><rect x="251" y="539" width="5" height="5" fill="#e2dfdc"/><rect x="251" y="544" width="5" height="5" fill="#d2d4d8"/><rect x="256" y="534" width="5" height="5" fill="#f0f0f0"/><rect x="256" y="539" width="5" height="5" fill="#e4e6ea"/><rect x="256" y="544" width="5" height="5" fill="#e0e2e4"/><rect x="261" y="539" width="5" height="5" fill="#e2dfdc"/><rect x="261" y="544" width="5" height="5" fill="#e4e4e4"/><rect x="361" y="539" width="5" height="5" fill="#d6d8dc"/><rect x="361" y="544" width="5" height="5" fill="#dadcdf"/><rect x="366" y="539" width="5" height="5" fill="#e0e2e4"/><rect x="366" y="544" width="5" height="5" fill="#e4e4e4"/><rect x="371" y="539" width="5" height="5" fill="#eaeef3"/><rect x="371" y="544" width="5" height="5" fill="#dadcdf"/><rect x="376" y="539" width="5" height="5" fill="#eaebec"/><rect x="376" y="544" width="5" height="5" fill="#e8e8e8"/><rect x="381" y="539" width="5" height="5" fill="#e4e4e4"/><rect x="381" y="544" width="5" height="5" fill="#e8ecf0"/><rect x="386" y="539" width="5" height="5" fill="#e8e8e8"/><rect x="386" y="544" width="5" height="5" fill="#e2dfdc"/><rect x="391" y="539" width="5" height="5" fill="#dedad7"/><rect x="391" y="544" width="5" height="5" fill="#d2d4d8"/><rect x="396" y="539" width="5" height="5" fill="#dedad7"/><rect x="396" y="544" width="5" height="5" fill="#d6d8dc"/><rect x="401" y="534" width="5" height="5" fill="#f3ece8"/><rect x="401" y="539" width="5" height="5" fill="#eaeef3"/><rect x="401" y="544" width="5" height="5" fill="#cdd0d5"/><rect x="406" y="534" width="5" height="5" fill="#f2f2f2"/><rect x="406" y="539" width="5" height="5" fill="#e6e6e6"/><rect x="406" y="544" width="5" height="5" fill="#dedfe1"/><rect x="411" y="539" width="5" height="5" fill="#e4e6ea"/><rect x="411" y="544" width="5" height="5" fill="#e4e6ea"/><rect x="416" y="534" width="5" height="5" fill="#eef1f5"/><rect x="416" y="539" width="5" height="5" fill="#dedad7"/><rect x="416" y="544" width="5" height="5" fill="#e2dfdc"/><rect x="421" y="539" width="5" height="5" fill="#cdd0d5"/><rect x="421" y="544" width="5" height="5" fill="#eaeef3"/><rect x="426" y="534" width="5" height="5" fill="#f0f0f0"/><rect x="426" y="539" width="5" height="5" fill="#dadcdf"/><rect x="426" y="544" width="5" height="5" fill="#eaeef3"/><rect x="431" y="539" width="5" height="5" fill="#eaebec"/><rect x="431" y="544" width="5" height="5" fill="#e4e6ea"/><rect x="436" y="534" width="5" height="5" fill="#e9e9ea"/><rect x="436" y="539" width="5" height="5" fill="#eaeef3"/><rect x="436" y="544" width="5" height="5" fill="#e8e8e8"/><rect x="441" y="539" width="5" height="5" fill="#eaebec"/><rect x="441" y="544" width="5" height="5" fill="#dcdcdc"/><rect x="446" y="539" width="5" height="5" fill="#dfdfdf"/><rect x="446" y="544" width="5" height="5" fill="#cdd0d5"/><rect x="451" y="534" width="5" height="5" fill="#eef1f5"/><rect x="451" y="539" width="5" height="5" fill="#e4e6ea"/><rect x="451" y="544" width="5" height="5" fill="#ece9e6"/><rect x="456" y="539" width="5" height="5" fill="#eaeef3"/><rect x="456" y="544" width="5" height="5" fill="#ece9e6"/><rect x="461" y="539" width="5" height="5" fill="#dedfe1"/><rect x="461" y="544" width="5" height="5" fill="#dfdfdf"/><rect x="466" y="539" width="5" height="5" fill="#ece9e6"/><rect x="466" y="544" width="5" height="5" fill="#dcdcdc"/><rect x="471" y="539" width="5" height="5" fill="#dedfe1"/><rect x="471" y="544" width="5" height="5" fill="#d6d8dc"/><rect x="476" y="539" width="5" height="5" fill="#eaebec"/><rect x="476" y="544" width="5" height="5" fill="#e4e6ea"/><rect x="481" y="539" width="5" height="5" fill="#ece9e6"/><rect x="481" y="544" width="5" height="5" fill="#dcdcdc"/><rect x="486" y="539" width="5" height="5" fill="#dedfe1"/><rect x="486" y="544" width="5" height="5" fill="#dfdfdf"/><rect x="491" y="534" width="5" height="5" fill="#f0f0f0"/><rect x="491" y="539" width="5" height="5" fill="#eaebec"/><rect x="491" y="544" width="5" height="5" fill="#dfdfdf"/><rect x="496" y="534" width="5" height="5" fill="#ececec"/><rect x="496" y="539" width="5" height="5" fill="#ece9e6"/><rect x="496" y="544" width="5" height="5" fill="#dedfe1"/><rect x="501" y="539" width="5" height="5" fill="#e8e8e8"/><rect x="501" y="544" width="5" height="5" fill="#ece9e6"/><rect x="506" y="534" width="5" height="5" fill="#f0f0f0"/><rect x="506" y="539" width="5" height="5" fill="#d6d8dc"/><rect x="506" y="544" width="5" height="5" fill="#e4e6ea"/><rect x="511" y="539" width="5" height="5" fill="#e2dfdc"/><rect x="511" y="544" width="5" height="5" fill="#dadcdf"/><rect x="626" y="534" width="5" height="5" fill="#f2f2f2"/><rect x="626" y="539" width="5" height="5" fill="#dfdfdf"/><rect x="626" y="544" width="5" height="5" fill="#ece9e6"/><rect x="626" y="549" width="5" height="5" fill="#eef1f5"/><rect x="631" y="534" width="5" height="5" fill="#ececec"/><rect x="631" y="539" width="5" height="5" fill="#e4e4e4"/><rect x="631" y="544" width="5" height="5" fill="#e4e4e4"/><rect x="631" y="549" width="5" height="5" fill="#eef1f5"/><rect x="636" y="534" width="5" height="5" fill="#eef1f5"/><rect x="636" y="539" width="5" height="5" fill="#dedad7"/><rect x="636" y="544" width="5" height="5" fill="#dedad7"/><rect x="636" y="549" width="5" height="5" fill="#e9e9ea"/><rect x="646" y="539" width="5" height="5" fill="#e6e6e6"/><rect x="646" y="544" width="5" height="5" fill="#dedfe1"/><rect x="651" y="539" width="5" height="5" fill="#e8e8e8"/><rect x="651" y="544" width="5" height="5" fill="#e0e2e4"/><rect x="656" y="539" width="5" height="5" fill="#e4e4e4"/><rect x="656" y="544" width="5" height="5" fill="#dedfe1"/><rect x="661" y="539" width="5" height="5" fill="#eaebec"/><rect x="661" y="544" width="5" height="5" fill="#d2d4d8"/><rect x="666" y="539" width="5" height="5" fill="#d2d4d8"/><rect x="666" y="544" width="5" height="5" fill="#e8e8e8"/><rect x="671" y="539" width="5" height="5" fill="#d2d4d8"/><rect x="671" y="544" width="5" height="5" fill="#d2d4d8"/><rect x="676" y="539" width="5" height="5" fill="#dedad7"/><rect x="676" y="544" width="5" height="5" fill="#eaeef3"/><rect x="681" y="539" width="5" height="5" fill="#e8e8e8"/><rect x="681" y="544" width="5" height="5" fill="#ece9e6"/><rect x="686" y="539" width="5" height="5" fill="#dedfe1"/><rect x="686" y="544" width="5" height="5" fill="#eaebec"/><rect x="691" y="539" width="5" height="5" fill="#eaebec"/><rect x="691" y="544" width="5" height="5" fill="#dfdfdf"/><rect x="696" y="539" width="5" height="5" fill="#dfdfdf"/><rect x="696" y="544" width="5" height="5" fill="#e4e4e4"/><rect x="701" y="539" width="5" height="5" fill="#dcdcdc"/><rect x="701" y="544" width="5" height="5" fill="#eaeef3"/><rect x="706" y="534" width="5" height="5" fill="#eef1f5"/><rect x="706" y="539" width="5" height="5" fill="#cdd0d5"/><rect x="706" y="544" width="5" height="5" fill="#eaeef3"/><rect x="711" y="539" width="5" height="5" fill="#e6e6e6"/><rect x="711" y="544" width="5" height="5" fill="#e2dfdc"/><rect x="716" y="539" width="5" height="5" fill="#dadcdf"/><rect x="716" y="544" width="5" height="5" fill="#cdd0d5"/><rect x="721" y="539" width="5" height="5" fill="#d2d4d8"/><rect x="721" y="544" width="5" height="5" fill="#eaeef3"/><rect x="726" y="539" width="5" height="5" fill="#cdd0d5"/><rect x="726" y="544" width="5" height="5" fill="#eaebec"/><rect x="731" y="539" width="5" height="5" fill="#e2dfdc"/><rect x="731" y="544" width="5" height="5" fill="#d6d8dc"/><rect x="736" y="539" width="5" height="5" fill="#d6d8dc"/><rect x="736" y="544" width="5" height="5" fill="#ece9e6"/><rect x="741" y="539" width="5" height="5" fill="#e6e6e6"/><rect x="741" y="544" width="5" height="5" fill="#dadcdf"/><rect x="746" y="539" width="5" height="5" fill="#dedad7"/><rect x="746" y="544" width="5" height="5" fill="#dfdfdf"/><rect x="751" y="539" width="5" height="5" fill="#e8e8e8"/><rect x="751" y="544" width="5" height="5" fill="#e2dfdc"/><rect x="756" y="539" width="5" height="5" fill="#e8e8e8"/><rect x="756" y="544" width="5" height="5" fill="#e4e6ea"/><rect x="761" y="539" width="5" height="5" fill="#e4e4e4"/><rect x="761" y="544" width="5" height="5" fill="#dcdcdc"/><rect x="766" y="539" width="5" height="5" fill="#e6e6e6"/><rect x="766" y="544" width="5" height="5" fill="#eaeef3"/><rect x="871" y="539" width="5" height="5" fill="#ece9e6"/><rect x="871" y="544" width="5" height="5" fill="#e6e6e6"/><rect x="876" y="539" width="5" height="5" fill="#cdd0d5"/><rect x="876" y="544" width="5" height="5" fill="#e2dfdc"/><rect x="881" y="539" width="5" height="5" fill="#d6d8dc"/><rect x="881" y="544" width="5" height="5" fill="#dfdfdf"/><rect x="886" y="539" width="5" height="5" fill="#dfdfdf"/><rect x="886" y="544" width="5" height="5" fill="#eaebec"/><rect x="886" y="549" width="5" height="5" fill="#f4f1ee"/><rect x="891" y="539" width="5" height="5" fill="#d6d8dc"/><rect x="891" y="544" width="5" height="5" fill="#dcdcdc"/><rect x="896" y="539" width="5" height="5" fill="#eaebec"/><rect x="896" y="544" width="5" height="5" fill="#eaebec"/><rect x="896" y="549" width="5" height="5" fill="#f4f1ee"/><rect x="901" y="539" width="5" height="5" fill="#e0e2e4"/><rect x="901" y="544" width="5" height="5" fill="#e0e2e4"/><rect x="906" y="539" width="5" height="5" fill="#e8ecf0"/><rect x="906" y="544" width="5" height="5" fill="#e2e2e2"/><rect x="911" y="534" width="5" height="5" fill="#f2f2f2"/><rect x="911" y="539" width="5" height="5" fill="#dcdcdc"/><rect x="911" y="544" width="5" height="5" fill="#e4e6ea"/><rect x="916" y="539" width="5" height="5" fill="#dedad7"/><rect x="916" y="544" width="5" height="5" fill="#dedad7"/><rect x="921" y="539" width="5" height="5" fill="#e4e6ea"/><rect x="921" y="544" width="5" height="5" fill="#dcdcdc"/><rect x="926" y="539" width="5" height="5" fill="#dedfe1"/><rect x="926" y="544" width="5" height="5" fill="#eaeef3"/><rect x="926" y="549" width="5" height="5" fill="#ececec"/><rect x="931" y="539" width="5" height="5" fill="#dedfe1"/><rect x="931" y="544" width="5" height="5" fill="#e0e2e4"/><rect x="936" y="539" width="5" height="5" fill="#dedfe1"/><rect x="936" y="544" width="5" height="5" fill="#e8e8e8"/><rect x="941" y="539" width="5" height="5" fill="#e2dfdc"/><rect x="941" y="544" width="5" height="5" fill="#d2d4d8"/><rect x="1111" y="539" width="5" height="5" fill="#dedfe1"/><rect x="1111" y="544" width="5" height="5" fill="#eaeef3"/><rect x="1111" y="549" width="5" height="5" fill="#ececec"/><rect x="1116" y="539" width="5" height="5" fill="#dedfe1"/><rect x="1116" y="544" width="5" height="5" fill="#e4e4e4"/><rect x="1121" y="539" width="5" height="5" fill="#e8e8e8"/><rect x="1121" y="544" width="5" height="5" fill="#e0e2e4"/><rect x="1126" y="539" width="5" height="5" fill="#cdd0d5"/><rect x="1126" y="544" width="5" height="5" fill="#e8e8e8"/><rect x="1126" y="549" width="5" height="5" fill="#eef1f5"/><rect x="1131" y="534" width="5" height="5" fill="#f4f1ee"/><rect x="1131" y="539" width="5" height="5" fill="#d2d4d8"/><rect x="1131" y="544" width="5" height="5" fill="#e2dfdc"/><rect x="1136" y="539" width="5" height="5" fill="#dedfe1"/><rect x="1136" y="544" width="5" height="5" fill="#e4e6ea"/><rect x="1141" y="539" width="5" height="5" fill="#e4e6ea"/><rect x="1141" y="544" width="5" height="5" fill="#e0e2e4"/><rect x="1146" y="534" width="5" height="5" fill="#f3ece8"/><rect x="1146" y="539" width="5" height="5" fill="#eaeef3"/><rect x="1146" y="544" width="5" height="5" fill="#e4e4e4"/><rect x="1151" y="539" width="5" height="5" fill="#e6e6e6"/><rect x="1151" y="544" width="5" height="5" fill="#e4e6ea"/><rect x="1156" y="539" width="5" height="5" fill="#dadcdf"/><rect x="1156" y="544" width="5" height="5" fill="#eaebec"/><rect x="1161" y="539" width="5" height="5" fill="#dcdcdc"/><rect x="1161" y="544" width="5" height="5" fill="#e6e6e6"/><rect x="1166" y="534" width="5" height="5" fill="#ececec"/><rect x="1166" y="539" width="5" height="5" fill="#e2dfdc"/><rect x="1166" y="544" width="5" height="5" fill="#eaeef3"/><rect x="1171" y="539" width="5" height="5" fill="#e8e8e8"/><rect x="1171" y="544" width="5" height="5" fill="#e4e4e4"/><rect x="1176" y="534" width="5" height="5" fill="#f0f0f0"/><rect x="1176" y="539" width="5" height="5" fill="#dedad7"/><rect x="1176" y="544" width="5" height="5" fill="#e8e8e8"/><rect x="1296" y="539" width="5" height="5" fill="#ece8e4"/><rect x="1296" y="544" width="5" height="5" fill="#dadcdf"/><rect x="1296" y="549" width="5" height="5" fill="#f3ece8"/><rect x="1301" y="539" width="5" height="5" fill="#e8ecf0"/><rect x="1301" y="544" width="5" height="5" fill="#e2dfdc"/><rect x="1301" y="549" width="5" height="5" fill="#f4f1ee"/><rect x="1306" y="539" width="5" height="5" fill="#ece8e4"/><rect x="1306" y="544" width="5" height="5" fill="#eaebec"/><rect x="1306" y="549" width="5" height="5" fill="#f6f6f6"/><rect x="1311" y="539" width="5" height="5" fill="#dee2e6"/><rect x="1311" y="544" width="5" height="5" fill="#eaeef3"/><rect x="1311" y="549" width="5" height="5" fill="#f4f1ee"/><rect x="1316" y="539" width="5" height="5" fill="#e6e4e0"/><rect x="1316" y="544" width="5" height="5" fill="#cdd0d5"/><rect x="1316" y="549" width="5" height="5" fill="#f4f1ee"/><rect x="1321" y="539" width="5" height="5" fill="#eceef4"/><rect x="1321" y="544" width="5" height="5" fill="#dedad7"/><rect x="1321" y="549" width="5" height="5" fill="#f3ece8"/><rect x="1396" y="539" width="5" height="5" fill="#dee2e6"/><rect x="1396" y="544" width="5" height="5" fill="#dfdfdf"/><rect x="1396" y="549" width="5" height="5" fill="#f4f1ee"/><rect x="1401" y="539" width="5" height="5" fill="#e8ecf0"/><rect x="1401" y="544" width="5" height="5" fill="#dedfe1"/><rect x="1401" y="549" width="5" height="5" fill="#f0f0f0"/><rect x="1406" y="539" width="5" height="5" fill="#e2e2e2"/><rect x="1406" y="544" width="5" height="5" fill="#e2dfdc"/><rect x="1406" y="549" width="5" height="5" fill="#f2f2f2"/><rect x="1411" y="539" width="5" height="5" fill="#e6e4e0"/><rect x="1411" y="544" width="5" height="5" fill="#cdd0d5"/><rect x="1411" y="549" width="5" height="5" fill="#f6f6f6"/><rect x="1416" y="539" width="5" height="5" fill="#e2e2e2"/><rect x="1416" y="544" width="5" height="5" fill="#e6e6e6"/><rect x="1416" y="549" width="5" height="5" fill="#f0f0f0"/><rect x="1421" y="539" width="5" height="5" fill="#e6e4e0"/><rect x="1421" y="544" width="5" height="5" fill="#e4e6ea"/><rect x="1421" y="549" width="5" height="5" fill="#eef1f5"/><rect x="1511" y="539" width="5" height="5" fill="#ece8e4"/><rect x="1511" y="544" width="5" height="5" fill="#e2dfdc"/><rect x="1511" y="549" width="5" height="5" fill="#f4f1ee"/><rect x="1516" y="539" width="5" height="5" fill="#e4e4e4"/><rect x="1516" y="544" width="5" height="5" fill="#e0e2e4"/><rect x="1516" y="549" width="5" height="5" fill="#ececec"/><rect x="1521" y="539" width="5" height="5" fill="#ece8e4"/><rect x="1521" y="544" width="5" height="5" fill="#e6e6e6"/><rect x="1521" y="549" width="5" height="5" fill="#f2f2f2"/><rect x="1526" y="539" width="5" height="5" fill="#e8ecf0"/><rect x="1526" y="544" width="5" height="5" fill="#eaebec"/><rect x="1526" y="549" width="5" height="5" fill="#f6f6f6"/><rect x="1531" y="539" width="5" height="5" fill="#e6e4e0"/><rect x="1531" y="544" width="5" height="5" fill="#cdd0d5"/><rect x="1531" y="549" width="5" height="5" fill="#eef1f5"/><rect x="1536" y="539" width="5" height="5" fill="#dee2e6"/><rect x="1536" y="544" width="5" height="5" fill="#e8e8e8"/><rect x="1536" y="549" width="5" height="5" fill="#ececec"/><rect x="226" y="569" width="5" height="5" fill="#f3ece8"/><rect x="226" y="574" width="5" height="5" fill="#d2d4d8"/><rect x="226" y="579" width="5" height="5" fill="#d2d4d8"/><rect x="231" y="574" width="5" height="5" fill="#e4e4e4"/><rect x="231" y="579" width="5" height="5" fill="#dfdfdf"/><rect x="236" y="574" width="5" height="5" fill="#e0e2e4"/><rect x="236" y="579" width="5" height="5" fill="#e6e6e6"/><rect x="241" y="574" width="5" height="5" fill="#dedad7"/><rect x="241" y="579" width="5" height="5" fill="#eaeef3"/><rect x="246" y="574" width="5" height="5" fill="#dedfe1"/><rect x="246" y="579" width="5" height="5" fill="#e4e4e4"/><rect x="251" y="569" width="5" height="5" fill="#e9e9ea"/><rect x="251" y="574" width="5" height="5" fill="#d2d4d8"/><rect x="251" y="579" width="5" height="5" fill="#dcdcdc"/><rect x="256" y="569" width="5" height="5" fill="#f6f6f6"/><rect x="256" y="574" width="5" height="5" fill="#e8e8e8"/><rect x="256" y="579" width="5" height="5" fill="#e0e2e4"/><rect x="261" y="574" width="5" height="5" fill="#d6d8dc"/><rect x="261" y="579" width="5" height="5" fill="#eaeef3"/><rect x="361" y="574" width="5" height="5" fill="#eaebec"/><rect x="361" y="579" width="5" height="5" fill="#e8e8e8"/><rect x="366" y="574" width="5" height="5" fill="#e4e6ea"/><rect x="366" y="579" width="5" height="5" fill="#e8e8e8"/><rect x="371" y="574" width="5" height="5" fill="#e0e2e4"/><rect x="371" y="579" width="5" height="5" fill="#e2dfdc"/><rect x="376" y="574" width="5" height="5" fill="#cdd0d5"/><rect x="376" y="579" width="5" height="5" fill="#ece9e6"/><rect x="381" y="574" width="5" height="5" fill="#e4e4e4"/><rect x="381" y="579" width="5" height="5" fill="#e4e4e4"/><rect x="386" y="574" width="5" height="5" fill="#e4e4e4"/><rect x="386" y="579" width="5" height="5" fill="#dedad7"/><rect x="391" y="574" width="5" height="5" fill="#e4e6ea"/><rect x="391" y="579" width="5" height="5" fill="#dedad7"/><rect x="396" y="574" width="5" height="5" fill="#dfdfdf"/><rect x="396" y="579" width="5" height="5" fill="#eaebec"/><rect x="401" y="574" width="5" height="5" fill="#dadcdf"/><rect x="401" y="579" width="5" height="5" fill="#e2dfdc"/><rect x="406" y="574" width="5" height="5" fill="#e0e2e4"/><rect x="406" y="579" width="5" height="5" fill="#e4e6ea"/><rect x="411" y="574" width="5" height="5" fill="#eaeef3"/><rect x="411" y="579" width="5" height="5" fill="#e4e6ea"/><rect x="416" y="569" width="5" height="5" fill="#ececec"/><rect x="416" y="574" width="5" height="5" fill="#dfdfdf"/><rect x="416" y="579" width="5" height="5" fill="#dedfe1"/><rect x="421" y="574" width="5" height="5" fill="#e8e8e8"/><rect x="421" y="579" width="5" height="5" fill="#dfdfdf"/><rect x="426" y="574" width="5" height="5" fill="#e2dfdc"/><rect x="426" y="579" width="5" height="5" fill="#e6e6e6"/><rect x="431" y="574" width="5" height="5" fill="#dedad7"/><rect x="431" y="579" width="5" height="5" fill="#dadcdf"/><rect x="436" y="569" width="5" height="5" fill="#f6f6f6"/><rect x="436" y="574" width="5" height="5" fill="#eaeef3"/><rect x="436" y="579" width="5" height="5" fill="#dcdcdc"/><rect x="441" y="574" width="5" height="5" fill="#e8e8e8"/><rect x="441" y="579" width="5" height="5" fill="#d2d4d8"/><rect x="446" y="574" width="5" height="5" fill="#dedad7"/><rect x="446" y="579" width="5" height="5" fill="#ece9e6"/><rect x="451" y="574" width="5" height="5" fill="#cdd0d5"/><rect x="451" y="579" width="5" height="5" fill="#dadcdf"/><rect x="456" y="574" width="5" height="5" fill="#e0e2e4"/><rect x="456" y="579" width="5" height="5" fill="#eaebec"/><rect x="461" y="574" width="5" height="5" fill="#e8e8e8"/><rect x="461" y="579" width="5" height="5" fill="#e0e2e4"/><rect x="466" y="569" width="5" height="5" fill="#f2f2f2"/><rect x="466" y="574" width="5" height="5" fill="#e6e6e6"/><rect x="466" y="579" width="5" height="5" fill="#cdd0d5"/><rect x="471" y="574" width="5" height="5" fill="#e0e2e4"/><rect x="471" y="579" width="5" height="5" fill="#e4e4e4"/><rect x="476" y="569" width="5" height="5" fill="#f6f6f6"/><rect x="476" y="574" width="5" height="5" fill="#e4e4e4"/><rect x="476" y="579" width="5" height="5" fill="#dfdfdf"/><rect x="481" y="574" width="5" height="5" fill="#e8e8e8"/><rect x="481" y="579" width="5" height="5" fill="#cdd0d5"/><rect x="486" y="574" width="5" height="5" fill="#e8e8e8"/><rect x="486" y="579" width="5" height="5" fill="#eaebec"/><rect x="491" y="574" width="5" height="5" fill="#e2dfdc"/><rect x="491" y="579" width="5" height="5" fill="#dcdcdc"/><rect x="496" y="569" width="5" height="5" fill="#f2f2f2"/><rect x="496" y="574" width="5" height="5" fill="#eaebec"/><rect x="496" y="579" width="5" height="5" fill="#e0e2e4"/><rect x="501" y="574" width="5" height="5" fill="#e4e4e4"/><rect x="501" y="579" width="5" height="5" fill="#e2dfdc"/><rect x="506" y="574" width="5" height="5" fill="#d2d4d8"/><rect x="506" y="579" width="5" height="5" fill="#cdd0d5"/><rect x="511" y="569" width="5" height="5" fill="#f0f0f0"/><rect x="511" y="574" width="5" height="5" fill="#e4e6ea"/><rect x="511" y="579" width="5" height="5" fill="#e6e6e6"/><rect x="626" y="569" width="5" height="5" fill="#f2f2f2"/><rect x="626" y="574" width="5" height="5" fill="#eaebec"/><rect x="626" y="579" width="5" height="5" fill="#d6d8dc"/><rect x="626" y="584" width="5" height="5" fill="#f4f1ee"/><rect x="631" y="569" width="5" height="5" fill="#f0f0f0"/><rect x="631" y="574" width="5" height="5" fill="#e2dfdc"/><rect x="631" y="579" width="5" height="5" fill="#dcdcdc"/><rect x="631" y="584" width="5" height="5" fill="#ececec"/><rect x="636" y="569" width="5" height="5" fill="#f4f1ee"/><rect x="636" y="574" width="5" height="5" fill="#e6e6e6"/><rect x="636" y="579" width="5" height="5" fill="#cdd0d5"/><rect x="636" y="584" width="5" height="5" fill="#f0f0f0"/><rect x="646" y="574" width="5" height="5" fill="#e4e6ea"/><rect x="646" y="579" width="5" height="5" fill="#dfdfdf"/><rect x="651" y="574" width="5" height="5" fill="#e6e6e6"/><rect x="651" y="579" width="5" height="5" fill="#e6e6e6"/><rect x="656" y="574" width="5" height="5" fill="#cdd0d5"/><rect x="656" y="579" width="5" height="5" fill="#d2d4d8"/><rect x="661" y="574" width="5" height="5" fill="#e4e6ea"/><rect x="661" y="579" width="5" height="5" fill="#e6e6e6"/><rect x="666" y="574" width="5" height="5" fill="#d2d4d8"/><rect x="666" y="579" width="5" height="5" fill="#e0e2e4"/><rect x="671" y="574" width="5" height="5" fill="#ece9e6"/><rect x="671" y="579" width="5" height="5" fill="#d6d8dc"/><rect x="676" y="574" width="5" height="5" fill="#dedad7"/><rect x="676" y="579" width="5" height="5" fill="#dedad7"/><rect x="681" y="574" width="5" height="5" fill="#e2dfdc"/><rect x="681" y="579" width="5" height="5" fill="#e0e2e4"/><rect x="686" y="574" width="5" height="5" fill="#dedad7"/><rect x="686" y="579" width="5" height="5" fill="#dedfe1"/><rect x="691" y="574" width="5" height="5" fill="#d6d8dc"/><rect x="691" y="579" width="5" height="5" fill="#d6d8dc"/><rect x="696" y="574" width="5" height="5" fill="#e2dfdc"/><rect x="696" y="579" width="5" height="5" fill="#eaeef3"/><rect x="701" y="574" width="5" height="5" fill="#eaeef3"/><rect x="701" y="579" width="5" height="5" fill="#e2dfdc"/><rect x="706" y="574" width="5" height="5" fill="#eaebec"/><rect x="706" y="579" width="5" height="5" fill="#eaeef3"/><rect x="711" y="574" width="5" height="5" fill="#dedad7"/><rect x="711" y="579" width="5" height="5" fill="#dedad7"/><rect x="716" y="574" width="5" height="5" fill="#dedfe1"/><rect x="716" y="579" width="5" height="5" fill="#dedad7"/><rect x="721" y="574" width="5" height="5" fill="#e2dfdc"/><rect x="721" y="579" width="5" height="5" fill="#dedad7"/><rect x="726" y="574" width="5" height="5" fill="#e4e6ea"/><rect x="726" y="579" width="5" height="5" fill="#e8e8e8"/><rect x="731" y="574" width="5" height="5" fill="#dadcdf"/><rect x="731" y="579" width="5" height="5" fill="#e8e8e8"/><rect x="736" y="574" width="5" height="5" fill="#e2dfdc"/><rect x="736" y="579" width="5" height="5" fill="#e4e4e4"/><rect x="741" y="574" width="5" height="5" fill="#dadcdf"/><rect x="741" y="579" width="5" height="5" fill="#e8e8e8"/><rect x="746" y="574" width="5" height="5" fill="#e0e2e4"/><rect x="746" y="579" width="5" height="5" fill="#eaeef3"/><rect x="751" y="574" width="5" height="5" fill="#eaebec"/><rect x="751" y="579" width="5" height="5" fill="#e6e6e6"/><rect x="756" y="574" width="5" height="5" fill="#dedad7"/><rect x="756" y="579" width="5" height="5" fill="#eaebec"/><rect x="761" y="574" width="5" height="5" fill="#ece9e6"/><rect x="761" y="579" width="5" height="5" fill="#eaeef3"/><rect x="766" y="574" width="5" height="5" fill="#e6e6e6"/><rect x="766" y="579" width="5" height="5" fill="#d2d4d8"/><rect x="871" y="574" width="5" height="5" fill="#eaeef3"/><rect x="871" y="579" width="5" height="5" fill="#eaeef3"/><rect x="871" y="584" width="5" height="5" fill="#f0f0f0"/><rect x="876" y="574" width="5" height="5" fill="#e4e6ea"/><rect x="876" y="579" width="5" height="5" fill="#d2d4d8"/><rect x="881" y="569" width="5" height="5" fill="#f6f6f6"/><rect x="881" y="574" width="5" height="5" fill="#eaeef3"/><rect x="881" y="579" width="5" height="5" fill="#dedfe1"/><rect x="881" y="584" width="5" height="5" fill="#f3ece8"/><rect x="886" y="574" width="5" height="5" fill="#dfdfdf"/><rect x="886" y="579" width="5" height="5" fill="#dcdcdc"/><rect x="891" y="574" width="5" height="5" fill="#d6d8dc"/><rect x="891" y="579" width="5" height="5" fill="#dedfe1"/><rect x="896" y="569" width="5" height="5" fill="#f3ece8"/><rect x="896" y="574" width="5" height="5" fill="#d2d4d8"/><rect x="896" y="579" width="5" height="5" fill="#eaebec"/><rect x="896" y="584" width="5" height="5" fill="#f0f0f0"/><rect x="901" y="574" width="5" height="5" fill="#dcdcdc"/><rect x="901" y="579" width="5" height="5" fill="#e8e8e8"/><rect x="901" y="584" width="5" height="5" fill="#f4f1ee"/><rect x="906" y="574" width="5" height="5" fill="#ece8e4"/><rect x="906" y="579" width="5" height="5" fill="#eceef4"/><rect x="911" y="574" width="5" height="5" fill="#d2d4d8"/><rect x="911" y="579" width="5" height="5" fill="#e2dfdc"/><rect x="911" y="584" width="5" height="5" fill="#f3ece8"/><rect x="916" y="574" width="5" height="5" fill="#ece9e6"/><rect x="916" y="579" width="5" height="5" fill="#e4e6ea"/><rect x="921" y="569" width="5" height="5" fill="#f3ece8"/><rect x="921" y="574" width="5" height="5" fill="#ece9e6"/><rect x="921" y="579" width="5" height="5" fill="#cdd0d5"/><rect x="926" y="574" width="5" height="5" fill="#cdd0d5"/><rect x="926" y="579" width="5" height="5" fill="#dedad7"/><rect x="926" y="584" width="5" height="5" fill="#e9e9ea"/><rect x="931" y="574" width="5" height="5" fill="#d6d8dc"/><rect x="931" y="579" width="5" height="5" fill="#e8e8e8"/><rect x="936" y="574" width="5" height="5" fill="#e4e6ea"/><rect x="936" y="579" width="5" height="5" fill="#dedfe1"/><rect x="941" y="569" width="5" height="5" fill="#f3ece8"/><rect x="941" y="574" width="5" height="5" fill="#dcdcdc"/><rect x="941" y="579" width="5" height="5" fill="#e6e6e6"/><rect x="1111" y="569" width="5" height="5" fill="#f4f1ee"/><rect x="1111" y="574" width="5" height="5" fill="#d2d4d8"/><rect x="1111" y="579" width="5" height="5" fill="#dedfe1"/><rect x="1116" y="574" width="5" height="5" fill="#dadcdf"/><rect x="1116" y="579" width="5" height="5" fill="#d6d8dc"/><rect x="1121" y="574" width="5" height="5" fill="#dedad7"/><rect x="1121" y="579" width="5" height="5" fill="#dadcdf"/><rect x="1121" y="584" width="5" height="5" fill="#e9e9ea"/><rect x="1126" y="574" width="5" height="5" fill="#eaebec"/><rect x="1126" y="579" width="5" height="5" fill="#e4e4e4"/><rect x="1131" y="574" width="5" height="5" fill="#eaeef3"/><rect x="1131" y="579" width="5" height="5" fill="#e4e4e4"/><rect x="1136" y="569" width="5" height="5" fill="#f4f1ee"/><rect x="1136" y="574" width="5" height="5" fill="#dedad7"/><rect x="1136" y="579" width="5" height="5" fill="#cdd0d5"/><rect x="1141" y="574" width="5" height="5" fill="#dedfe1"/><rect x="1141" y="579" width="5" height="5" fill="#eaebec"/><rect x="1146" y="574" width="5" height="5" fill="#dadcdf"/><rect x="1146" y="579" width="5" height="5" fill="#d2d4d8"/><rect x="1151" y="574" width="5" height="5" fill="#d2d4d8"/><rect x="1151" y="579" width="5" height="5" fill="#dcdcdc"/><rect x="1156" y="574" width="5" height="5" fill="#d2d4d8"/><rect x="1156" y="579" width="5" height="5" fill="#e4e6ea"/><rect x="1161" y="574" width="5" height="5" fill="#dedad7"/><rect x="1161" y="579" width="5" height="5" fill="#d6d8dc"/><rect x="1166" y="574" width="5" height="5" fill="#e8e8e8"/><rect x="1166" y="579" width="5" height="5" fill="#dedad7"/><rect x="1171" y="569" width="5" height="5" fill="#f4f1ee"/><rect x="1171" y="574" width="5" height="5" fill="#e2dfdc"/><rect x="1171" y="579" width="5" height="5" fill="#d2d4d8"/><rect x="1176" y="569" width="5" height="5" fill="#f2f2f2"/><rect x="1176" y="574" width="5" height="5" fill="#ece9e6"/><rect x="1176" y="579" width="5" height="5" fill="#eaeef3"/><rect x="1176" y="584" width="5" height="5" fill="#ececec"/><rect x="1296" y="574" width="5" height="5" fill="#e6e4e0"/><rect x="1296" y="579" width="5" height="5" fill="#ece9e6"/><rect x="1296" y="584" width="5" height="5" fill="#eef1f5"/><rect x="1301" y="574" width="5" height="5" fill="#e2e2e2"/><rect x="1301" y="579" width="5" height="5" fill="#e6e6e6"/><rect x="1301" y="584" width="5" height="5" fill="#f4f1ee"/><rect x="1306" y="574" width="5" height="5" fill="#eceef4"/><rect x="1306" y="579" width="5" height="5" fill="#e8e8e8"/><rect x="1306" y="584" width="5" height="5" fill="#ececec"/><rect x="1311" y="574" width="5" height="5" fill="#dee2e6"/><rect x="1311" y="579" width="5" height="5" fill="#dcdcdc"/><rect x="1311" y="584" width="5" height="5" fill="#eef1f5"/><rect x="1316" y="574" width="5" height="5" fill="#eceef4"/><rect x="1316" y="579" width="5" height="5" fill="#dadcdf"/><rect x="1316" y="584" width="5" height="5" fill="#f2f2f2"/><rect x="1321" y="574" width="5" height="5" fill="#e2e2e2"/><rect x="1321" y="579" width="5" height="5" fill="#d6d8dc"/><rect x="1321" y="584" width="5" height="5" fill="#f2f2f2"/><rect x="1396" y="574" width="5" height="5" fill="#e2e2e2"/><rect x="1396" y="579" width="5" height="5" fill="#dcdcdc"/><rect x="1396" y="584" width="5" height="5" fill="#ececec"/><rect x="1401" y="574" width="5" height="5" fill="#e4e4e4"/><rect x="1401" y="579" width="5" height="5" fill="#e4e6ea"/><rect x="1401" y="584" width="5" height="5" fill="#f0f0f0"/><rect x="1406" y="574" width="5" height="5" fill="#eceef4"/><rect x="1406" y="579" width="5" height="5" fill="#dedfe1"/><rect x="1406" y="584" width="5" height="5" fill="#f2f2f2"/><rect x="1411" y="574" width="5" height="5" fill="#e8ecf0"/><rect x="1411" y="579" width="5" height="5" fill="#e2dfdc"/><rect x="1411" y="584" width="5" height="5" fill="#e9e9ea"/><rect x="1416" y="574" width="5" height="5" fill="#e6e4e0"/><rect x="1416" y="579" width="5" height="5" fill="#e6e6e6"/><rect x="1416" y="584" width="5" height="5" fill="#f0f0f0"/><rect x="1421" y="574" width="5" height="5" fill="#e4e4e4"/><rect x="1421" y="579" width="5" height="5" fill="#e2dfdc"/><rect x="1421" y="584" width="5" height="5" fill="#f0f0f0"/><rect x="1511" y="574" width="5" height="5" fill="#e6e4e0"/><rect x="1511" y="579" width="5" height="5" fill="#dfdfdf"/><rect x="1511" y="584" width="5" height="5" fill="#e9e9ea"/><rect x="1516" y="574" width="5" height="5" fill="#e6e4e0"/><rect x="1516" y="579" width="5" height="5" fill="#e0e2e4"/><rect x="1516" y="584" width="5" height="5" fill="#f2f2f2"/><rect x="1521" y="574" width="5" height="5" fill="#e6e4e0"/><rect x="1521" y="579" width="5" height="5" fill="#eaebec"/><rect x="1521" y="584" width="5" height="5" fill="#f2f2f2"/><rect x="1526" y="574" width="5" height="5" fill="#e6e4e0"/><rect x="1526" y="579" width="5" height="5" fill="#e4e4e4"/><rect x="1526" y="584" width="5" height="5" fill="#f6f6f6"/><rect x="1531" y="574" width="5" height="5" fill="#e4e4e4"/><rect x="1531" y="579" width="5" height="5" fill="#cdd0d5"/><rect x="1531" y="584" width="5" height="5" fill="#e9e9ea"/><rect x="1536" y="574" width="5" height="5" fill="#dee2e6"/><rect x="1536" y="579" width="5" height="5" fill="#e6e6e6"/><rect x="1536" y="584" width="5" height="5" fill="#f6f6f6"/><rect x="226" y="609" width="5" height="5" fill="#e8e8e8"/><rect x="226" y="614" width="5" height="5" fill="#e4e6ea"/><rect x="231" y="609" width="5" height="5" fill="#dedad7"/><rect x="231" y="614" width="5" height="5" fill="#dfdfdf"/><rect x="236" y="604" width="5" height="5" fill="#f6f6f6"/><rect x="236" y="609" width="5" height="5" fill="#e6e6e6"/><rect x="236" y="614" width="5" height="5" fill="#e4e4e4"/><rect x="241" y="604" width="5" height="5" fill="#f0f0f0"/><rect x="241" y="609" width="5" height="5" fill="#dadcdf"/><rect x="241" y="614" width="5" height="5" fill="#dedfe1"/><rect x="246" y="604" width="5" height="5" fill="#e9e9ea"/><rect x="246" y="609" width="5" height="5" fill="#dadcdf"/><rect x="246" y="614" width="5" height="5" fill="#d6d8dc"/><rect x="251" y="609" width="5" height="5" fill="#dcdcdc"/><rect x="251" y="614" width="5" height="5" fill="#eaeef3"/><rect x="256" y="609" width="5" height="5" fill="#eaebec"/><rect x="256" y="614" width="5" height="5" fill="#eaeef3"/><rect x="261" y="604" width="5" height="5" fill="#f0f0f0"/><rect x="261" y="609" width="5" height="5" fill="#e4e4e4"/><rect x="261" y="614" width="5" height="5" fill="#dfdfdf"/><rect x="361" y="609" width="5" height="5" fill="#ece9e6"/><rect x="361" y="614" width="5" height="5" fill="#dedfe1"/><rect x="366" y="609" width="5" height="5" fill="#dadcdf"/><rect x="366" y="614" width="5" height="5" fill="#d2d4d8"/><rect x="371" y="609" width="5" height="5" fill="#e2dfdc"/><rect x="371" y="614" width="5" height="5" fill="#eaeef3"/><rect x="376" y="609" width="5" height="5" fill="#dfdfdf"/><rect x="376" y="614" width="5" height="5" fill="#dcdcdc"/><rect x="381" y="609" width="5" height="5" fill="#eceef4"/><rect x="381" y="614" width="5" height="5" fill="#eceef4"/><rect x="386" y="609" width="5" height="5" fill="#e4e6ea"/><rect x="386" y="614" width="5" height="5" fill="#e6e6e6"/><rect x="391" y="604" width="5" height="5" fill="#f0f0f0"/><rect x="391" y="609" width="5" height="5" fill="#e4e6ea"/><rect x="391" y="614" width="5" height="5" fill="#ece9e6"/><rect x="396" y="609" width="5" height="5" fill="#dedfe1"/><rect x="396" y="614" width="5" height="5" fill="#d6d8dc"/><rect x="401" y="609" width="5" height="5" fill="#e4e4e4"/><rect x="401" y="614" width="5" height="5" fill="#dedfe1"/><rect x="406" y="609" width="5" height="5" fill="#e4e6ea"/><rect x="406" y="614" width="5" height="5" fill="#e8e8e8"/><rect x="411" y="604" width="5" height="5" fill="#e9e9ea"/><rect x="411" y="609" width="5" height="5" fill="#d2d4d8"/><rect x="411" y="614" width="5" height="5" fill="#eaebec"/><rect x="416" y="604" width="5" height="5" fill="#f4f1ee"/><rect x="416" y="609" width="5" height="5" fill="#d2d4d8"/><rect x="416" y="614" width="5" height="5" fill="#e0e2e4"/><rect x="421" y="609" width="5" height="5" fill="#dcdcdc"/><rect x="421" y="614" width="5" height="5" fill="#dedfe1"/><rect x="426" y="609" width="5" height="5" fill="#e2dfdc"/><rect x="426" y="614" width="5" height="5" fill="#dedfe1"/><rect x="431" y="609" width="5" height="5" fill="#dadcdf"/><rect x="431" y="614" width="5" height="5" fill="#dadcdf"/><rect x="436" y="604" width="5" height="5" fill="#ececec"/><rect x="436" y="609" width="5" height="5" fill="#e4e4e4"/><rect x="436" y="614" width="5" height="5" fill="#e2dfdc"/><rect x="441" y="609" width="5" height="5" fill="#dfdfdf"/><rect x="441" y="614" width="5" height="5" fill="#e2dfdc"/><rect x="446" y="609" width="5" height="5" fill="#e4e6ea"/><rect x="446" y="614" width="5" height="5" fill="#e4e4e4"/><rect x="451" y="609" width="5" height="5" fill="#e8e8e8"/><rect x="451" y="614" width="5" height="5" fill="#d2d4d8"/><rect x="456" y="609" width="5" height="5" fill="#d6d8dc"/><rect x="456" y="614" width="5" height="5" fill="#eaebec"/><rect x="461" y="609" width="5" height="5" fill="#e6e6e6"/><rect x="461" y="614" width="5" height="5" fill="#cdd0d5"/><rect x="466" y="604" width="5" height="5" fill="#f6f6f6"/><rect x="466" y="609" width="5" height="5" fill="#e4e6ea"/><rect x="466" y="614" width="5" height="5" fill="#dedfe1"/><rect x="471" y="604" width="5" height="5" fill="#ececec"/><rect x="471" y="609" width="5" height="5" fill="#dcdcdc"/><rect x="471" y="614" width="5" height="5" fill="#dcdcdc"/><rect x="476" y="609" width="5" height="5" fill="#e8e8e8"/><rect x="476" y="614" width="5" height="5" fill="#dadcdf"/><rect x="481" y="609" width="5" height="5" fill="#dadcdf"/><rect x="481" y="614" width="5" height="5" fill="#dedfe1"/><rect x="486" y="609" width="5" height="5" fill="#e4e6ea"/><rect x="486" y="614" width="5" height="5" fill="#e4e4e4"/><rect x="491" y="609" width="5" height="5" fill="#dedfe1"/><rect x="491" y="614" width="5" height="5" fill="#dedad7"/><rect x="496" y="609" width="5" height="5" fill="#e6e6e6"/><rect x="496" y="614" width="5" height="5" fill="#d6d8dc"/><rect x="501" y="604" width="5" height="5" fill="#e9e9ea"/><rect x="501" y="609" width="5" height="5" fill="#e2dfdc"/><rect x="501" y="614" width="5" height="5" fill="#eaebec"/><rect x="506" y="604" width="5" height="5" fill="#f3ece8"/><rect x="506" y="609" width="5" height="5" fill="#dadcdf"/><rect x="506" y="614" width="5" height="5" fill="#e6e6e6"/><rect x="511" y="609" width="5" height="5" fill="#dfdfdf"/><rect x="511" y="614" width="5" height="5" fill="#e2dfdc"/><rect x="626" y="604" width="5" height="5" fill="#eef1f5"/><rect x="626" y="609" width="5" height="5" fill="#dedad7"/><rect x="626" y="614" width="5" height="5" fill="#dfdfdf"/><rect x="626" y="619" width="5" height="5" fill="#f6f6f6"/><rect x="631" y="604" width="5" height="5" fill="#f4f1ee"/><rect x="631" y="609" width="5" height="5" fill="#dadcdf"/><rect x="631" y="614" width="5" height="5" fill="#d6d8dc"/><rect x="631" y="619" width="5" height="5" fill="#eef1f5"/><rect x="636" y="604" width="5" height="5" fill="#f3ece8"/><rect x="636" y="609" width="5" height="5" fill="#dcdcdc"/><rect x="636" y="614" width="5" height="5" fill="#dfdfdf"/><rect x="636" y="619" width="5" height="5" fill="#eef1f5"/><rect x="646" y="609" width="5" height="5" fill="#d2d4d8"/><rect x="646" y="614" width="5" height="5" fill="#eaeef3"/><rect x="651" y="609" width="5" height="5" fill="#dfdfdf"/><rect x="651" y="614" width="5" height="5" fill="#dedad7"/><rect x="656" y="604" width="5" height="5" fill="#e9e9ea"/><rect x="656" y="609" width="5" height="5" fill="#dadcdf"/><rect x="656" y="614" width="5" height="5" fill="#e4e6ea"/><rect x="661" y="609" width="5" height="5" fill="#e6e6e6"/><rect x="661" y="614" width="5" height="5" fill="#e0e2e4"/><rect x="666" y="609" width="5" height="5" fill="#e2dfdc"/><rect x="666" y="614" width="5" height="5" fill="#e6e6e6"/><rect x="671" y="609" width="5" height="5" fill="#eaeef3"/><rect x="671" y="614" width="5" height="5" fill="#e4e6ea"/><rect x="676" y="609" width="5" height="5" fill="#eaeef3"/><rect x="676" y="614" width="5" height="5" fill="#ece9e6"/><rect x="681" y="609" width="5" height="5" fill="#dfdfdf"/><rect x="681" y="614" width="5" height="5" fill="#dedad7"/><rect x="686" y="609" width="5" height="5" fill="#dcdcdc"/><rect x="686" y="614" width="5" height="5" fill="#dedad7"/><rect x="691" y="609" width="5" height="5" fill="#eaeef3"/><rect x="691" y="614" width="5" height="5" fill="#e4e4e4"/><rect x="696" y="609" width="5" height="5" fill="#dadcdf"/><rect x="696" y="614" width="5" height="5" fill="#d2d4d8"/><rect x="701" y="609" width="5" height="5" fill="#eaebec"/><rect x="701" y="614" width="5" height="5" fill="#e4e6ea"/><rect x="706" y="609" width="5" height="5" fill="#ece9e6"/><rect x="706" y="614" width="5" height="5" fill="#cdd0d5"/><rect x="711" y="609" width="5" height="5" fill="#e6e6e6"/><rect x="711" y="614" width="5" height="5" fill="#e6e6e6"/><rect x="716" y="609" width="5" height="5" fill="#d6d8dc"/><rect x="716" y="614" width="5" height="5" fill="#ece9e6"/><rect x="721" y="609" width="5" height="5" fill="#e0e2e4"/><rect x="721" y="614" width="5" height="5" fill="#e4e6ea"/><rect x="726" y="609" width="5" height="5" fill="#e4e6ea"/><rect x="726" y="614" width="5" height="5" fill="#eaebec"/><rect x="731" y="609" width="5" height="5" fill="#e0e2e4"/><rect x="731" y="614" width="5" height="5" fill="#e4e6ea"/><rect x="736" y="609" width="5" height="5" fill="#e0e2e4"/><rect x="736" y="614" width="5" height="5" fill="#dfdfdf"/><rect x="741" y="609" width="5" height="5" fill="#ece9e6"/><rect x="741" y="614" width="5" height="5" fill="#dedfe1"/><rect x="746" y="609" width="5" height="5" fill="#ece9e6"/><rect x="746" y="614" width="5" height="5" fill="#eaebec"/><rect x="751" y="609" width="5" height="5" fill="#dedad7"/><rect x="751" y="614" width="5" height="5" fill="#e4e4e4"/><rect x="756" y="609" width="5" height="5" fill="#dedfe1"/><rect x="756" y="614" width="5" height="5" fill="#dcdcdc"/><rect x="761" y="609" width="5" height="5" fill="#e6e6e6"/><rect x="761" y="614" width="5" height="5" fill="#dedad7"/><rect x="766" y="609" width="5" height="5" fill="#dedad7"/><rect x="766" y="614" width="5" height="5" fill="#ece9e6"/><rect x="871" y="604" width="5" height="5" fill="#f6f6f6"/><rect x="871" y="609" width="5" height="5" fill="#dedad7"/><rect x="871" y="614" width="5" height="5" fill="#e8e8e8"/><rect x="876" y="609" width="5" height="5" fill="#d6d8dc"/><rect x="876" y="614" width="5" height="5" fill="#dcdcdc"/><rect x="876" y="619" width="5" height="5" fill="#e9e9ea"/><rect x="881" y="609" width="5" height="5" fill="#dcdcdc"/><rect x="881" y="614" width="5" height="5" fill="#eaebec"/><rect x="881" y="619" width="5" height="5" fill="#f0f0f0"/><rect x="886" y="609" width="5" height="5" fill="#dedad7"/><rect x="886" y="614" width="5" height="5" fill="#cdd0d5"/><rect x="891" y="604" width="5" height="5" fill="#ececec"/><rect x="891" y="609" width="5" height="5" fill="#d2d4d8"/><rect x="891" y="614" width="5" height="5" fill="#cdd0d5"/><rect x="891" y="619" width="5" height="5" fill="#f6f6f6"/><rect x="896" y="609" width="5" height="5" fill="#e2dfdc"/><rect x="896" y="614" width="5" height="5" fill="#eaeef3"/><rect x="896" y="619" width="5" height="5" fill="#f3ece8"/><rect x="901" y="609" width="5" height="5" fill="#d2d4d8"/><rect x="901" y="614" width="5" height="5" fill="#e4e4e4"/><rect x="906" y="609" width="5" height="5" fill="#e2e2e2"/><rect x="906" y="614" width="5" height="5" fill="#e8ecf0"/><rect x="906" y="619" width="5" height="5" fill="#f6f6f6"/><rect x="911" y="609" width="5" height="5" fill="#cdd0d5"/><rect x="911" y="614" width="5" height="5" fill="#e2dfdc"/><rect x="911" y="619" width="5" height="5" fill="#f2f2f2"/><rect x="916" y="609" width="5" height="5" fill="#d2d4d8"/><rect x="916" y="614" width="5" height="5" fill="#dfdfdf"/><rect x="921" y="609" width="5" height="5" fill="#dedad7"/><rect x="921" y="614" width="5" height="5" fill="#e4e6ea"/><rect x="926" y="609" width="5" height="5" fill="#eaebec"/><rect x="926" y="614" width="5" height="5" fill="#cdd0d5"/><rect x="931" y="609" width="5" height="5" fill="#e8e8e8"/><rect x="931" y="614" width="5" height="5" fill="#e2dfdc"/><rect x="936" y="604" width="5" height="5" fill="#e9e9ea"/><rect x="936" y="609" width="5" height="5" fill="#dedad7"/><rect x="936" y="614" width="5" height="5" fill="#eaebec"/><rect x="941" y="609" width="5" height="5" fill="#ece9e6"/><rect x="941" y="614" width="5" height="5" fill="#e0e2e4"/><rect x="941" y="619" width="5" height="5" fill="#f3ece8"/><rect x="1111" y="609" width="5" height="5" fill="#d2d4d8"/><rect x="1111" y="614" width="5" height="5" fill="#e2dfdc"/><rect x="1116" y="609" width="5" height="5" fill="#e4e6ea"/><rect x="1116" y="614" width="5" height="5" fill="#e2dfdc"/><rect x="1121" y="604" width="5" height="5" fill="#f2f2f2"/><rect x="1121" y="609" width="5" height="5" fill="#eaebec"/><rect x="1121" y="614" width="5" height="5" fill="#dadcdf"/><rect x="1126" y="609" width="5" height="5" fill="#ece9e6"/><rect x="1126" y="614" width="5" height="5" fill="#e6e6e6"/><rect x="1131" y="609" width="5" height="5" fill="#dedfe1"/><rect x="1131" y="614" width="5" height="5" fill="#e8e8e8"/><rect x="1131" y="619" width="5" height="5" fill="#f6f6f6"/><rect x="1136" y="609" width="5" height="5" fill="#dadcdf"/><rect x="1136" y="614" width="5" height="5" fill="#dadcdf"/><rect x="1141" y="609" width="5" height="5" fill="#d6d8dc"/><rect x="1141" y="614" width="5" height="5" fill="#dfdfdf"/><rect x="1146" y="609" width="5" height="5" fill="#cdd0d5"/><rect x="1146" y="614" width="5" height="5" fill="#eaeef3"/><rect x="1151" y="609" width="5" height="5" fill="#d6d8dc"/><rect x="1151" y="614" width="5" height="5" fill="#dedad7"/><rect x="1156" y="609" width="5" height="5" fill="#cdd0d5"/><rect x="1156" y="614" width="5" height="5" fill="#eaeef3"/><rect x="1161" y="609" width="5" height="5" fill="#e4e4e4"/><rect x="1161" y="614" width="5" height="5" fill="#e2dfdc"/><rect x="1166" y="609" width="5" height="5" fill="#e4e4e4"/><rect x="1166" y="614" width="5" height="5" fill="#d6d8dc"/><rect x="1171" y="609" width="5" height="5" fill="#d2d4d8"/><rect x="1171" y="614" width="5" height="5" fill="#d6d8dc"/><rect x="1176" y="609" width="5" height="5" fill="#dadcdf"/><rect x="1176" y="614" width="5" height="5" fill="#e6e6e6"/><rect x="1296" y="609" width="5" height="5" fill="#e4e4e4"/><rect x="1296" y="614" width="5" height="5" fill="#d2d4d8"/><rect x="1296" y="619" width="5" height="5" fill="#eef1f5"/><rect x="1301" y="609" width="5" height="5" fill="#e8ecf0"/><rect x="1301" y="614" width="5" height="5" fill="#dadcdf"/><rect x="1301" y="619" width="5" height="5" fill="#f6f6f6"/><rect x="1306" y="609" width="5" height="5" fill="#e4e4e4"/><rect x="1306" y="614" width="5" height="5" fill="#e4e4e4"/><rect x="1306" y="619" width="5" height="5" fill="#f3ece8"/><rect x="1311" y="609" width="5" height="5" fill="#eceef4"/><rect x="1311" y="614" width="5" height="5" fill="#dedad7"/><rect x="1311" y="619" width="5" height="5" fill="#ececec"/><rect x="1316" y="609" width="5" height="5" fill="#eceef4"/><rect x="1316" y="614" width="5" height="5" fill="#e6e6e6"/><rect x="1316" y="619" width="5" height="5" fill="#eef1f5"/><rect x="1321" y="609" width="5" height="5" fill="#e6e4e0"/><rect x="1321" y="614" width="5" height="5" fill="#eaebec"/><rect x="1321" y="619" width="5" height="5" fill="#f4f1ee"/><rect x="1396" y="609" width="5" height="5" fill="#dee2e6"/><rect x="1396" y="614" width="5" height="5" fill="#eaebec"/><rect x="1396" y="619" width="5" height="5" fill="#eef1f5"/><rect x="1401" y="609" width="5" height="5" fill="#eceef4"/><rect x="1401" y="614" width="5" height="5" fill="#cdd0d5"/><rect x="1401" y="619" width="5" height="5" fill="#f3ece8"/><rect x="1406" y="609" width="5" height="5" fill="#dee2e6"/><rect x="1406" y="614" width="5" height="5" fill="#d6d8dc"/><rect x="1406" y="619" width="5" height="5" fill="#e9e9ea"/><rect x="1411" y="609" width="5" height="5" fill="#e8ecf0"/><rect x="1411" y="614" width="5" height="5" fill="#e0e2e4"/><rect x="1411" y="619" width="5" height="5" fill="#eef1f5"/><rect x="1416" y="609" width="5" height="5" fill="#ece8e4"/><rect x="1416" y="614" width="5" height="5" fill="#dadcdf"/><rect x="1416" y="619" width="5" height="5" fill="#f6f6f6"/><rect x="1421" y="609" width="5" height="5" fill="#dee2e6"/><rect x="1421" y="614" width="5" height="5" fill="#e8e8e8"/><rect x="1421" y="619" width="5" height="5" fill="#f6f6f6"/><rect x="1511" y="609" width="5" height="5" fill="#e6e4e0"/><rect x="1511" y="614" width="5" height="5" fill="#e4e4e4"/><rect x="1511" y="619" width="5" height="5" fill="#ececec"/><rect x="1516" y="609" width="5" height="5" fill="#eceef4"/><rect x="1516" y="614" width="5" height="5" fill="#e4e4e4"/><rect x="1516" y="619" width="5" height="5" fill="#f2f2f2"/><rect x="1521" y="609" width="5" height="5" fill="#e8ecf0"/><rect x="1521" y="614" width="5" height="5" fill="#dfdfdf"/><rect x="1521" y="619" width="5" height="5" fill="#f4f1ee"/><rect x="1526" y="609" width="5" height="5" fill="#e2e2e2"/><rect x="1526" y="614" width="5" height="5" fill="#e0e2e4"/><rect x="1526" y="619" width="5" height="5" fill="#f3ece8"/><rect x="1531" y="609" width="5" height="5" fill="#e4e4e4"/><rect x="1531" y="614" width="5" height="5" fill="#dedad7"/><rect x="1531" y="619" width="5" height="5" fill="#f3ece8"/><rect x="1536" y="609" width="5" height="5" fill="#dee2e6"/><rect x="1536" y="614" width="5" height="5" fill="#d6d8dc"/><rect x="1536" y="619" width="5" height="5" fill="#f0f0f0"/><rect x="226" y="639" width="5" height="5" fill="#f2f2f2"/><rect x="226" y="644" width="5" height="5" fill="#e2dfdc"/><rect x="226" y="649" width="5" height="5" fill="#e6e6e6"/><rect x="231" y="644" width="5" height="5" fill="#e6e6e6"/><rect x="231" y="649" width="5" height="5" fill="#e8e8e8"/><rect x="236" y="644" width="5" height="5" fill="#dadcdf"/><rect x="236" y="649" width="5" height="5" fill="#dedfe1"/><rect x="241" y="639" width="5" height="5" fill="#eef1f5"/><rect x="241" y="644" width="5" height="5" fill="#eaebec"/><rect x="241" y="649" width="5" height="5" fill="#e6e6e6"/><rect x="246" y="644" width="5" height="5" fill="#dcdcdc"/><rect x="246" y="649" width="5" height="5" fill="#d6d8dc"/><rect x="251" y="644" width="5" height="5" fill="#cdd0d5"/><rect x="251" y="649" width="5" height="5" fill="#d6d8dc"/><rect x="256" y="644" width="5" height="5" fill="#e8e8e8"/><rect x="256" y="649" width="5" height="5" fill="#e6e6e6"/><rect x="261" y="639" width="5" height="5" fill="#f6f6f6"/><rect x="261" y="644" width="5" height="5" fill="#dcdcdc"/><rect x="261" y="649" width="5" height="5" fill="#dfdfdf"/><rect x="361" y="644" width="5" height="5" fill="#e4e4e4"/><rect x="361" y="649" width="5" height="5" fill="#cdd0d5"/><rect x="366" y="644" width="5" height="5" fill="#dedad7"/><rect x="366" y="649" width="5" height="5" fill="#cdd0d5"/><rect x="371" y="644" width="5" height="5" fill="#e6e6e6"/><rect x="371" y="649" width="5" height="5" fill="#dedad7"/><rect x="376" y="644" width="5" height="5" fill="#cdd0d5"/><rect x="376" y="649" width="5" height="5" fill="#eaeef3"/><rect x="381" y="644" width="5" height="5" fill="#e4e4e4"/><rect x="381" y="649" width="5" height="5" fill="#e2e2e2"/><rect x="386" y="639" width="5" height="5" fill="#f3ece8"/><rect x="386" y="644" width="5" height="5" fill="#e4e6ea"/><rect x="386" y="649" width="5" height="5" fill="#cdd0d5"/><rect x="391" y="644" width="5" height="5" fill="#e4e4e4"/><rect x="391" y="649" width="5" height="5" fill="#e2dfdc"/><rect x="396" y="639" width="5" height="5" fill="#ececec"/><rect x="396" y="644" width="5" height="5" fill="#dadcdf"/><rect x="396" y="649" width="5" height="5" fill="#eaeef3"/><rect x="401" y="644" width="5" height="5" fill="#eaebec"/><rect x="401" y="649" width="5" height="5" fill="#dcdcdc"/><rect x="406" y="644" width="5" height="5" fill="#e0e2e4"/><rect x="406" y="649" width="5" height="5" fill="#dcdcdc"/><rect x="411" y="644" width="5" height="5" fill="#eaebec"/><rect x="411" y="649" width="5" height="5" fill="#cdd0d5"/><rect x="416" y="639" width="5" height="5" fill="#f0f0f0"/><rect x="416" y="644" width="5" height="5" fill="#ece9e6"/><rect x="416" y="649" width="5" height="5" fill="#e8e8e8"/><rect x="421" y="644" width="5" height="5" fill="#e8e8e8"/><rect x="421" y="649" width="5" height="5" fill="#d2d4d8"/><rect x="426" y="639" width="5" height="5" fill="#f4f1ee"/><rect x="426" y="644" width="5" height="5" fill="#dedfe1"/><rect x="426" y="649" width="5" height="5" fill="#d2d4d8"/><rect x="431" y="639" width="5" height="5" fill="#e9e9ea"/><rect x="431" y="644" width="5" height="5" fill="#e6e6e6"/><rect x="431" y="649" width="5" height="5" fill="#e0e2e4"/><rect x="436" y="639" width="5" height="5" fill="#f6f6f6"/><rect x="436" y="644" width="5" height="5" fill="#dedfe1"/><rect x="436" y="649" width="5" height="5" fill="#e8e8e8"/><rect x="441" y="639" width="5" height="5" fill="#f4f1ee"/><rect x="441" y="644" width="5" height="5" fill="#e8e8e8"/><rect x="441" y="649" width="5" height="5" fill="#eaeef3"/><rect x="446" y="644" width="5" height="5" fill="#e8e8e8"/><rect x="446" y="649" width="5" height="5" fill="#e8e8e8"/><rect x="451" y="639" width="5" height="5" fill="#ececec"/><rect x="451" y="644" width="5" height="5" fill="#eaebec"/><rect x="451" y="649" width="5" height="5" fill="#ece9e6"/><rect x="456" y="644" width="5" height="5" fill="#e6e6e6"/><rect x="456" y="649" width="5" height="5" fill="#e2dfdc"/><rect x="461" y="644" width="5" height="5" fill="#e2dfdc"/><rect x="461" y="649" width="5" height="5" fill="#e2dfdc"/><rect x="466" y="644" width="5" height="5" fill="#dedfe1"/><rect x="466" y="649" width="5" height="5" fill="#e2dfdc"/><rect x="471" y="644" width="5" height="5" fill="#cdd0d5"/><rect x="471" y="649" width="5" height="5" fill="#d6d8dc"/><rect x="476" y="639" width="5" height="5" fill="#f4f1ee"/><rect x="476" y="644" width="5" height="5" fill="#eaebec"/><rect x="476" y="649" width="5" height="5" fill="#e6e6e6"/><rect x="481" y="644" width="5" height="5" fill="#eaebec"/><rect x="481" y="649" width="5" height="5" fill="#e2dfdc"/><rect x="486" y="644" width="5" height="5" fill="#d2d4d8"/><rect x="486" y="649" width="5" height="5" fill="#e0e2e4"/><rect x="491" y="644" width="5" height="5" fill="#cdd0d5"/><rect x="491" y="649" width="5" height="5" fill="#dadcdf"/><rect x="496" y="644" width="5" height="5" fill="#dedad7"/><rect x="496" y="649" width="5" height="5" fill="#eaeef3"/><rect x="501" y="644" width="5" height="5" fill="#e8e8e8"/><rect x="501" y="649" width="5" height="5" fill="#dadcdf"/><rect x="506" y="639" width="5" height="5" fill="#eef1f5"/><rect x="506" y="644" width="5" height="5" fill="#e6e6e6"/><rect x="506" y="649" width="5" height="5" fill="#dedfe1"/><rect x="511" y="639" width="5" height="5" fill="#f0f0f0"/><rect x="511" y="644" width="5" height="5" fill="#d6d8dc"/><rect x="511" y="649" width="5" height="5" fill="#d6d8dc"/><rect x="626" y="639" width="5" height="5" fill="#e9e9ea"/><rect x="626" y="644" width="5" height="5" fill="#cdd0d5"/><rect x="626" y="649" width="5" height="5" fill="#e4e6ea"/><rect x="626" y="654" width="5" height="5" fill="#ececec"/><rect x="631" y="639" width="5" height="5" fill="#f3ece8"/><rect x="631" y="644" width="5" height="5" fill="#e4e4e4"/><rect x="631" y="649" width="5" height="5" fill="#d6d8dc"/><rect x="631" y="654" width="5" height="5" fill="#f3ece8"/><rect x="636" y="639" width="5" height="5" fill="#f6f6f6"/><rect x="636" y="644" width="5" height="5" fill="#dedfe1"/><rect x="636" y="649" width="5" height="5" fill="#dfdfdf"/><rect x="636" y="654" width="5" height="5" fill="#eef1f5"/><rect x="646" y="639" width="5" height="5" fill="#f3ece8"/><rect x="646" y="644" width="5" height="5" fill="#ece9e6"/><rect x="646" y="649" width="5" height="5" fill="#dedfe1"/><rect x="651" y="639" width="5" height="5" fill="#f4f1ee"/><rect x="651" y="644" width="5" height="5" fill="#dadcdf"/><rect x="651" y="649" width="5" height="5" fill="#eaebec"/><rect x="656" y="644" width="5" height="5" fill="#e6e6e6"/><rect x="656" y="649" width="5" height="5" fill="#e6e6e6"/><rect x="661" y="644" width="5" height="5" fill="#dfdfdf"/><rect x="661" y="649" width="5" height="5" fill="#dedad7"/><rect x="666" y="644" width="5" height="5" fill="#e0e2e4"/><rect x="666" y="649" width="5" height="5" fill="#eaeef3"/><rect x="671" y="644" width="5" height="5" fill="#e4e6ea"/><rect x="671" y="649" width="5" height="5" fill="#e4e6ea"/><rect x="676" y="644" width="5" height="5" fill="#dedfe1"/><rect x="676" y="649" width="5" height="5" fill="#dcdcdc"/><rect x="681" y="644" width="5" height="5" fill="#dcdcdc"/><rect x="681" y="649" width="5" height="5" fill="#e8e8e8"/><rect x="686" y="644" width="5" height="5" fill="#e4e4e4"/><rect x="686" y="649" width="5" height="5" fill="#eaebec"/><rect x="691" y="644" width="5" height="5" fill="#dfdfdf"/><rect x="691" y="649" width="5" height="5" fill="#e4e6ea"/><rect x="696" y="644" width="5" height="5" fill="#e2dfdc"/><rect x="696" y="649" width="5" height="5" fill="#e0e2e4"/><rect x="701" y="644" width="5" height="5" fill="#eaebec"/><rect x="701" y="649" width="5" height="5" fill="#eaebec"/><rect x="706" y="644" width="5" height="5" fill="#dedfe1"/><rect x="706" y="649" width="5" height="5" fill="#dadcdf"/><rect x="711" y="644" width="5" height="5" fill="#e4e6ea"/><rect x="711" y="649" width="5" height="5" fill="#e2dfdc"/><rect x="716" y="644" width="5" height="5" fill="#cdd0d5"/><rect x="716" y="649" width="5" height="5" fill="#cdd0d5"/><rect x="721" y="644" width="5" height="5" fill="#e0e2e4"/><rect x="721" y="649" width="5" height="5" fill="#ece9e6"/><rect x="726" y="644" width="5" height="5" fill="#dedfe1"/><rect x="726" y="649" width="5" height="5" fill="#dedfe1"/><rect x="731" y="644" width="5" height="5" fill="#e4e4e4"/><rect x="731" y="649" width="5" height="5" fill="#d2d4d8"/><rect x="736" y="644" width="5" height="5" fill="#dadcdf"/><rect x="736" y="649" width="5" height="5" fill="#cdd0d5"/><rect x="741" y="644" width="5" height="5" fill="#e6e6e6"/><rect x="741" y="649" width="5" height="5" fill="#e4e6ea"/><rect x="746" y="644" width="5" height="5" fill="#cdd0d5"/><rect x="746" y="649" width="5" height="5" fill="#eaebec"/><rect x="751" y="644" width="5" height="5" fill="#cdd0d5"/><rect x="751" y="649" width="5" height="5" fill="#dedad7"/><rect x="756" y="644" width="5" height="5" fill="#e4e4e4"/><rect x="756" y="649" width="5" height="5" fill="#e6e6e6"/><rect x="761" y="644" width="5" height="5" fill="#dcdcdc"/><rect x="761" y="649" width="5" height="5" fill="#dedfe1"/><rect x="766" y="644" width="5" height="5" fill="#d6d8dc"/><rect x="766" y="649" width="5" height="5" fill="#e8e8e8"/><rect x="871" y="644" width="5" height="5" fill="#e0e2e4"/><rect x="871" y="649" width="5" height="5" fill="#e4e4e4"/><rect x="876" y="644" width="5" height="5" fill="#e6e6e6"/><rect x="876" y="649" width="5" height="5" fill="#dadcdf"/><rect x="881" y="644" width="5" height="5" fill="#e2dfdc"/><rect x="881" y="649" width="5" height="5" fill="#e2dfdc"/><rect x="886" y="644" width="5" height="5" fill="#e8e8e8"/><rect x="886" y="649" width="5" height="5" fill="#dfdfdf"/><rect x="891" y="644" width="5" height="5" fill="#e8e8e8"/><rect x="891" y="649" width="5" height="5" fill="#e2dfdc"/><rect x="896" y="644" width="5" height="5" fill="#e4e6ea"/><rect x="896" y="649" width="5" height="5" fill="#e0e2e4"/><rect x="901" y="639" width="5" height="5" fill="#e9e9ea"/><rect x="901" y="644" width="5" height="5" fill="#dfdfdf"/><rect x="901" y="649" width="5" height="5" fill="#d6d8dc"/><rect x="906" y="644" width="5" height="5" fill="#e8ecf0"/><rect x="906" y="649" width="5" height="5" fill="#ece8e4"/><rect x="911" y="644" width="5" height="5" fill="#e8e8e8"/><rect x="911" y="649" width="5" height="5" fill="#e4e6ea"/><rect x="916" y="644" width="5" height="5" fill="#e6e6e6"/><rect x="916" y="649" width="5" height="5" fill="#ece9e6"/><rect x="921" y="644" width="5" height="5" fill="#d6d8dc"/><rect x="921" y="649" width="5" height="5" fill="#e0e2e4"/><rect x="926" y="644" width="5" height="5" fill="#e2dfdc"/><rect x="926" y="649" width="5" height="5" fill="#e6e6e6"/><rect x="931" y="644" width="5" height="5" fill="#dedfe1"/><rect x="931" y="649" width="5" height="5" fill="#e4e4e4"/><rect x="936" y="639" width="5" height="5" fill="#eef1f5"/><rect x="936" y="644" width="5" height="5" fill="#e0e2e4"/><rect x="936" y="649" width="5" height="5" fill="#dedad7"/><rect x="941" y="644" width="5" height="5" fill="#cdd0d5"/><rect x="941" y="649" width="5" height="5" fill="#dedfe1"/><rect x="1111" y="644" width="5" height="5" fill="#d2d4d8"/><rect x="1111" y="649" width="5" height="5" fill="#dcdcdc"/><rect x="1111" y="654" width="5" height="5" fill="#f4f1ee"/><rect x="1116" y="639" width="5" height="5" fill="#e9e9ea"/><rect x="1116" y="644" width="5" height="5" fill="#eaeef3"/><rect x="1116" y="649" width="5" height="5" fill="#e0e2e4"/><rect x="1121" y="644" width="5" height="5" fill="#e6e6e6"/><rect x="1121" y="649" width="5" height="5" fill="#e4e4e4"/><rect x="1121" y="654" width="5" height="5" fill="#f3ece8"/><rect x="1126" y="644" width="5" height="5" fill="#e6e6e6"/><rect x="1126" y="649" width="5" height="5" fill="#eaebec"/><rect x="1131" y="639" width="5" height="5" fill="#f4f1ee"/><rect x="1131" y="644" width="5" height="5" fill="#dedfe1"/><rect x="1131" y="649" width="5" height="5" fill="#e2dfdc"/><rect x="1136" y="644" width="5" height="5" fill="#dadcdf"/><rect x="1136" y="649" width="5" height="5" fill="#e2dfdc"/><rect x="1141" y="644" width="5" height="5" fill="#d2d4d8"/><rect x="1141" y="649" width="5" height="5" fill="#ece9e6"/><rect x="1146" y="639" width="5" height="5" fill="#f6f6f6"/><rect x="1146" y="644" width="5" height="5" fill="#d2d4d8"/><rect x="1146" y="649" width="5" height="5" fill="#e8e8e8"/><rect x="1151" y="644" width="5" height="5" fill="#dedfe1"/><rect x="1151" y="649" width="5" height="5" fill="#e4e6ea"/><rect x="1156" y="644" width="5" height="5" fill="#e4e4e4"/><rect x="1156" y="649" width="5" height="5" fill="#d6d8dc"/><rect x="1161" y="644" width="5" height="5" fill="#dcdcdc"/><rect x="1161" y="649" width="5" height="5" fill="#dedad7"/><rect x="1166" y="644" width="5" height="5" fill="#e4e6ea"/><rect x="1166" y="649" width="5" height="5" fill="#eaebec"/><rect x="1171" y="644" width="5" height="5" fill="#ece9e6"/><rect x="1171" y="649" width="5" height="5" fill="#e2dfdc"/><rect x="1171" y="654" width="5" height="5" fill="#f4f1ee"/><rect x="1176" y="644" width="5" height="5" fill="#dadcdf"/><rect x="1176" y="649" width="5" height="5" fill="#e4e4e4"/><rect x="1296" y="644" width="5" height="5" fill="#e2e2e2"/><rect x="1296" y="649" width="5" height="5" fill="#d2d4d8"/><rect x="1296" y="654" width="5" height="5" fill="#e9e9ea"/><rect x="1301" y="644" width="5" height="5" fill="#ece8e4"/><rect x="1301" y="649" width="5" height="5" fill="#eaebec"/><rect x="1301" y="654" width="5" height="5" fill="#eef1f5"/><rect x="1306" y="644" width="5" height="5" fill="#e6e4e0"/><rect x="1306" y="649" width="5" height="5" fill="#dcdcdc"/><rect x="1306" y="654" width="5" height="5" fill="#f2f2f2"/><rect x="1311" y="644" width="5" height="5" fill="#e6e4e0"/><rect x="1311" y="649" width="5" height="5" fill="#e0e2e4"/><rect x="1311" y="654" width="5" height="5" fill="#eef1f5"/><rect x="1316" y="644" width="5" height="5" fill="#e8ecf0"/><rect x="1316" y="649" width="5" height="5" fill="#d6d8dc"/><rect x="1316" y="654" width="5" height="5" fill="#eef1f5"/><rect x="1321" y="644" width="5" height="5" fill="#e4e4e4"/><rect x="1321" y="649" width="5" height="5" fill="#e0e2e4"/><rect x="1321" y="654" width="5" height="5" fill="#f2f2f2"/><rect x="1396" y="644" width="5" height="5" fill="#e2e2e2"/><rect x="1396" y="649" width="5" height="5" fill="#e4e6ea"/><rect x="1396" y="654" width="5" height="5" fill="#eef1f5"/><rect x="1401" y="644" width="5" height="5" fill="#ece8e4"/><rect x="1401" y="649" width="5" height="5" fill="#d6d8dc"/><rect x="1401" y="654" width="5" height="5" fill="#ececec"/><rect x="1406" y="644" width="5" height="5" fill="#dee2e6"/><rect x="1406" y="649" width="5" height="5" fill="#e4e6ea"/><rect x="1406" y="654" width="5" height="5" fill="#f3ece8"/><rect x="1411" y="644" width="5" height="5" fill="#e8ecf0"/><rect x="1411" y="649" width="5" height="5" fill="#dfdfdf"/><rect x="1411" y="654" width="5" height="5" fill="#f4f1ee"/><rect x="1416" y="644" width="5" height="5" fill="#dee2e6"/><rect x="1416" y="649" width="5" height="5" fill="#e2dfdc"/><rect x="1416" y="654" width="5" height="5" fill="#eef1f5"/><rect x="1421" y="644" width="5" height="5" fill="#eceef4"/><rect x="1421" y="649" width="5" height="5" fill="#ece9e6"/><rect x="1421" y="654" width="5" height="5" fill="#f0f0f0"/><rect x="1511" y="644" width="5" height="5" fill="#e6e4e0"/><rect x="1511" y="649" width="5" height="5" fill="#dcdcdc"/><rect x="1511" y="654" width="5" height="5" fill="#f4f1ee"/><rect x="1516" y="644" width="5" height="5" fill="#ece8e4"/><rect x="1516" y="649" width="5" height="5" fill="#ece9e6"/><rect x="1516" y="654" width="5" height="5" fill="#f2f2f2"/><rect x="1521" y="644" width="5" height="5" fill="#e6e4e0"/><rect x="1521" y="649" width="5" height="5" fill="#eaeef3"/><rect x="1521" y="654" width="5" height="5" fill="#e9e9ea"/><rect x="1526" y="644" width="5" height="5" fill="#dee2e6"/><rect x="1526" y="649" width="5" height="5" fill="#e8e8e8"/><rect x="1526" y="654" width="5" height="5" fill="#ececec"/><rect x="1531" y="644" width="5" height="5" fill="#eceef4"/><rect x="1531" y="649" width="5" height="5" fill="#d2d4d8"/><rect x="1531" y="654" width="5" height="5" fill="#f2f2f2"/><rect x="1536" y="644" width="5" height="5" fill="#e8ecf0"/><rect x="1536" y="649" width="5" height="5" fill="#e8e8e8"/><rect x="1536" y="654" width="5" height="5" fill="#f4f1ee"/><rect x="226" y="679" width="5" height="5" fill="#f6f6f6"/><rect x="226" y="684" width="5" height="5" fill="#dadcdf"/><rect x="226" y="689" width="5" height="5" fill="#dadcdf"/><rect x="231" y="684" width="5" height="5" fill="#e2dfdc"/><rect x="231" y="689" width="5" height="5" fill="#dadcdf"/><rect x="236" y="679" width="5" height="5" fill="#e9e9ea"/><rect x="236" y="684" width="5" height="5" fill="#eaebec"/><rect x="236" y="689" width="5" height="5" fill="#ece9e6"/><rect x="241" y="684" width="5" height="5" fill="#e8e8e8"/><rect x="241" y="689" width="5" height="5" fill="#e4e4e4"/><rect x="246" y="684" width="5" height="5" fill="#ece9e6"/><rect x="246" y="689" width="5" height="5" fill="#e4e6ea"/><rect x="251" y="679" width="5" height="5" fill="#f4f1ee"/><rect x="251" y="684" width="5" height="5" fill="#eaeef3"/><rect x="251" y="689" width="5" height="5" fill="#cdd0d5"/><rect x="256" y="684" width="5" height="5" fill="#cdd0d5"/><rect x="256" y="689" width="5" height="5" fill="#dfdfdf"/><rect x="261" y="679" width="5" height="5" fill="#f3ece8"/><rect x="261" y="684" width="5" height="5" fill="#dedfe1"/><rect x="261" y="689" width="5" height="5" fill="#e8e8e8"/><rect x="361" y="684" width="5" height="5" fill="#dfdfdf"/><rect x="361" y="689" width="5" height="5" fill="#e8e8e8"/><rect x="366" y="684" width="5" height="5" fill="#cdd0d5"/><rect x="366" y="689" width="5" height="5" fill="#ece9e6"/><rect x="371" y="684" width="5" height="5" fill="#dadcdf"/><rect x="371" y="689" width="5" height="5" fill="#dcdcdc"/><rect x="376" y="684" width="5" height="5" fill="#eaeef3"/><rect x="376" y="689" width="5" height="5" fill="#dedfe1"/><rect x="381" y="684" width="5" height="5" fill="#ece8e4"/><rect x="381" y="689" width="5" height="5" fill="#ece8e4"/><rect x="386" y="684" width="5" height="5" fill="#e6e6e6"/><rect x="386" y="689" width="5" height="5" fill="#d2d4d8"/><rect x="391" y="684" width="5" height="5" fill="#e4e6ea"/><rect x="391" y="689" width="5" height="5" fill="#e4e4e4"/><rect x="396" y="679" width="5" height="5" fill="#f4f1ee"/><rect x="396" y="684" width="5" height="5" fill="#dcdcdc"/><rect x="396" y="689" width="5" height="5" fill="#dfdfdf"/><rect x="401" y="684" width="5" height="5" fill="#cdd0d5"/><rect x="401" y="689" width="5" height="5" fill="#e4e6ea"/><rect x="406" y="679" width="5" height="5" fill="#f3ece8"/><rect x="406" y="684" width="5" height="5" fill="#e2dfdc"/><rect x="406" y="689" width="5" height="5" fill="#dfdfdf"/><rect x="411" y="679" width="5" height="5" fill="#e9e9ea"/><rect x="411" y="684" width="5" height="5" fill="#cdd0d5"/><rect x="411" y="689" width="5" height="5" fill="#e2dfdc"/><rect x="416" y="679" width="5" height="5" fill="#f3ece8"/><rect x="416" y="684" width="5" height="5" fill="#dfdfdf"/><rect x="416" y="689" width="5" height="5" fill="#dfdfdf"/><rect x="421" y="684" width="5" height="5" fill="#d6d8dc"/><rect x="421" y="689" width="5" height="5" fill="#e8e8e8"/><rect x="426" y="679" width="5" height="5" fill="#f3ece8"/><rect x="426" y="684" width="5" height="5" fill="#d6d8dc"/><rect x="426" y="689" width="5" height="5" fill="#cdd0d5"/><rect x="431" y="679" width="5" height="5" fill="#ececec"/><rect x="431" y="684" width="5" height="5" fill="#e4e6ea"/><rect x="431" y="689" width="5" height="5" fill="#dcdcdc"/><rect x="436" y="684" width="5" height="5" fill="#e4e4e4"/><rect x="436" y="689" width="5" height="5" fill="#e8e8e8"/><rect x="441" y="684" width="5" height="5" fill="#e6e6e6"/><rect x="441" y="689" width="5" height="5" fill="#dedfe1"/><rect x="446" y="684" width="5" height="5" fill="#dcdcdc"/><rect x="446" y="689" width="5" height="5" fill="#e4e4e4"/><rect x="451" y="684" width="5" height="5" fill="#ece9e6"/><rect x="451" y="689" width="5" height="5" fill="#d6d8dc"/><rect x="456" y="684" width="5" height="5" fill="#d6d8dc"/><rect x="456" y="689" width="5" height="5" fill="#dedad7"/><rect x="461" y="684" width="5" height="5" fill="#e6e6e6"/><rect x="461" y="689" width="5" height="5" fill="#ece9e6"/><rect x="466" y="679" width="5" height="5" fill="#ececec"/><rect x="466" y="684" width="5" height="5" fill="#ece9e6"/><rect x="466" y="689" width="5" height="5" fill="#dfdfdf"/><rect x="471" y="684" width="5" height="5" fill="#e8e8e8"/><rect x="471" y="689" width="5" height="5" fill="#e2dfdc"/><rect x="476" y="679" width="5" height="5" fill="#f4f1ee"/><rect x="476" y="684" width="5" height="5" fill="#ece9e6"/><rect x="476" y="689" width="5" height="5" fill="#d2d4d8"/><rect x="481" y="684" width="5" height="5" fill="#d2d4d8"/><rect x="481" y="689" width="5" height="5" fill="#d2d4d8"/><rect x="486" y="684" width="5" height="5" fill="#eaebec"/><rect x="486" y="689" width="5" height="5" fill="#eaebec"/><rect x="491" y="679" width="5" height="5" fill="#f4f1ee"/><rect x="491" y="684" width="5" height="5" fill="#e4e6ea"/><rect x="491" y="689" width="5" height="5" fill="#e4e4e4"/><rect x="496" y="684" width="5" height="5" fill="#dfdfdf"/><rect x="496" y="689" width="5" height="5" fill="#e4e6ea"/><rect x="501" y="679" width="5" height="5" fill="#f2f2f2"/><rect x="501" y="684" width="5" height="5" fill="#dedfe1"/><rect x="501" y="689" width="5" height="5" fill="#dedfe1"/><rect x="506" y="679" width="5" height="5" fill="#eef1f5"/><rect x="506" y="684" width="5" height="5" fill="#cdd0d5"/><rect x="506" y="689" width="5" height="5" fill="#e2dfdc"/><rect x="511" y="684" width="5" height="5" fill="#dedfe1"/><rect x="511" y="689" width="5" height="5" fill="#dedad7"/><rect x="626" y="679" width="5" height="5" fill="#f0f0f0"/><rect x="626" y="684" width="5" height="5" fill="#e4e6ea"/><rect x="626" y="689" width="5" height="5" fill="#e4e4e4"/><rect x="626" y="694" width="5" height="5" fill="#f4f1ee"/><rect x="631" y="679" width="5" height="5" fill="#e9e9ea"/><rect x="631" y="684" width="5" height="5" fill="#e0e2e4"/><rect x="631" y="689" width="5" height="5" fill="#e4e4e4"/><rect x="631" y="694" width="5" height="5" fill="#f2f2f2"/><rect x="636" y="679" width="5" height="5" fill="#f3ece8"/><rect x="636" y="684" width="5" height="5" fill="#e0e2e4"/><rect x="636" y="689" width="5" height="5" fill="#e6e6e6"/><rect x="636" y="694" width="5" height="5" fill="#e9e9ea"/><rect x="646" y="684" width="5" height="5" fill="#eaebec"/><rect x="646" y="689" width="5" height="5" fill="#dedfe1"/><rect x="651" y="679" width="5" height="5" fill="#ececec"/><rect x="651" y="684" width="5" height="5" fill="#dfdfdf"/><rect x="651" y="689" width="5" height="5" fill="#e6e6e6"/><rect x="656" y="684" width="5" height="5" fill="#d6d8dc"/><rect x="656" y="689" width="5" height="5" fill="#e4e6ea"/><rect x="661" y="684" width="5" height="5" fill="#eaebec"/><rect x="661" y="689" width="5" height="5" fill="#dcdcdc"/><rect x="666" y="684" width="5" height="5" fill="#dadcdf"/><rect x="666" y="689" width="5" height="5" fill="#dedfe1"/><rect x="671" y="684" width="5" height="5" fill="#e6e6e6"/><rect x="671" y="689" width="5" height="5" fill="#dcdcdc"/><rect x="676" y="684" width="5" height="5" fill="#e6e6e6"/><rect x="676" y="689" width="5" height="5" fill="#e2dfdc"/><rect x="681" y="684" width="5" height="5" fill="#dcdcdc"/><rect x="681" y="689" width="5" height="5" fill="#dfdfdf"/><rect x="686" y="684" width="5" height="5" fill="#dfdfdf"/><rect x="686" y="689" width="5" height="5" fill="#e0e2e4"/><rect x="691" y="684" width="5" height="5" fill="#dfdfdf"/><rect x="691" y="689" width="5" height="5" fill="#eaebec"/><rect x="696" y="684" width="5" height="5" fill="#d2d4d8"/><rect x="696" y="689" width="5" height="5" fill="#e0e2e4"/><rect x="701" y="684" width="5" height="5" fill="#dedfe1"/><rect x="701" y="689" width="5" height="5" fill="#ece9e6"/><rect x="706" y="684" width="5" height="5" fill="#e4e4e4"/><rect x="706" y="689" width="5" height="5" fill="#d2d4d8"/><rect x="711" y="684" width="5" height="5" fill="#e2dfdc"/><rect x="711" y="689" width="5" height="5" fill="#dadcdf"/><rect x="716" y="684" width="5" height="5" fill="#dadcdf"/><rect x="716" y="689" width="5" height="5" fill="#eaeef3"/><rect x="721" y="684" width="5" height="5" fill="#e0e2e4"/><rect x="721" y="689" width="5" height="5" fill="#dadcdf"/><rect x="726" y="684" width="5" height="5" fill="#e6e6e6"/><rect x="726" y="689" width="5" height="5" fill="#e2dfdc"/><rect x="731" y="684" width="5" height="5" fill="#d6d8dc"/><rect x="731" y="689" width="5" height="5" fill="#e4e4e4"/><rect x="736" y="684" width="5" height="5" fill="#d6d8dc"/><rect x="736" y="689" width="5" height="5" fill="#dadcdf"/><rect x="741" y="684" width="5" height="5" fill="#e0e2e4"/><rect x="741" y="689" width="5" height="5" fill="#dadcdf"/><rect x="746" y="684" width="5" height="5" fill="#d6d8dc"/><rect x="746" y="689" width="5" height="5" fill="#eaebec"/><rect x="751" y="684" width="5" height="5" fill="#cdd0d5"/><rect x="751" y="689" width="5" height="5" fill="#dcdcdc"/><rect x="756" y="684" width="5" height="5" fill="#dfdfdf"/><rect x="756" y="689" width="5" height="5" fill="#ece9e6"/><rect x="761" y="684" width="5" height="5" fill="#cdd0d5"/><rect x="761" y="689" width="5" height="5" fill="#dcdcdc"/><rect x="766" y="684" width="5" height="5" fill="#eaebec"/><rect x="766" y="689" width="5" height="5" fill="#eaeef3"/><rect x="871" y="684" width="5" height="5" fill="#e8e8e8"/><rect x="871" y="689" width="5" height="5" fill="#dfdfdf"/><rect x="871" y="694" width="5" height="5" fill="#ececec"/><rect x="876" y="684" width="5" height="5" fill="#d2d4d8"/><rect x="876" y="689" width="5" height="5" fill="#e6e6e6"/><rect x="881" y="684" width="5" height="5" fill="#dedfe1"/><rect x="881" y="689" width="5" height="5" fill="#ece9e6"/><rect x="881" y="694" width="5" height="5" fill="#f4f1ee"/><rect x="886" y="684" width="5" height="5" fill="#e4e6ea"/><rect x="886" y="689" width="5" height="5" fill="#e2dfdc"/><rect x="891" y="684" width="5" height="5" fill="#cdd0d5"/><rect x="891" y="689" width="5" height="5" fill="#e4e6ea"/><rect x="891" y="694" width="5" height="5" fill="#e9e9ea"/><rect x="896" y="684" width="5" height="5" fill="#cdd0d5"/><rect x="896" y="689" width="5" height="5" fill="#d2d4d8"/><rect x="901" y="679" width="5" height="5" fill="#f6f6f6"/><rect x="901" y="684" width="5" height="5" fill="#d6d8dc"/><rect x="901" y="689" width="5" height="5" fill="#dfdfdf"/><rect x="906" y="684" width="5" height="5" fill="#e2e2e2"/><rect x="906" y="689" width="5" height="5" fill="#ece8e4"/><rect x="906" y="694" width="5" height="5" fill="#f6f6f6"/><rect x="911" y="684" width="5" height="5" fill="#e2dfdc"/><rect x="911" y="689" width="5" height="5" fill="#dcdcdc"/><rect x="911" y="694" width="5" height="5" fill="#f4f1ee"/><rect x="916" y="684" width="5" height="5" fill="#e0e2e4"/><rect x="916" y="689" width="5" height="5" fill="#e4e4e4"/><rect x="921" y="684" width="5" height="5" fill="#dedad7"/><rect x="921" y="689" width="5" height="5" fill="#eaeef3"/><rect x="926" y="684" width="5" height="5" fill="#e0e2e4"/><rect x="926" y="689" width="5" height="5" fill="#eaebec"/><rect x="926" y="694" width="5" height="5" fill="#f4f1ee"/><rect x="931" y="684" width="5" height="5" fill="#e0e2e4"/><rect x="931" y="689" width="5" height="5" fill="#dedfe1"/><rect x="931" y="694" width="5" height="5" fill="#f2f2f2"/><rect x="936" y="679" width="5" height="5" fill="#eef1f5"/><rect x="936" y="684" width="5" height="5" fill="#e0e2e4"/><rect x="936" y="689" width="5" height="5" fill="#d6d8dc"/><rect x="941" y="684" width="5" height="5" fill="#e8e8e8"/><rect x="941" y="689" width="5" height="5" fill="#dadcdf"/><rect x="1111" y="684" width="5" height="5" fill="#dcdcdc"/><rect x="1111" y="689" width="5" height="5" fill="#e4e4e4"/><rect x="1111" y="694" width="5" height="5" fill="#f3ece8"/><rect x="1116" y="684" width="5" height="5" fill="#e8e8e8"/><rect x="1116" y="689" width="5" height="5" fill="#ece9e6"/><rect x="1121" y="679" width="5" height="5" fill="#f2f2f2"/><rect x="1121" y="684" width="5" height="5" fill="#e6e6e6"/><rect x="1121" y="689" width="5" height="5" fill="#cdd0d5"/><rect x="1126" y="684" width="5" height="5" fill="#dedad7"/><rect x="1126" y="689" width="5" height="5" fill="#d2d4d8"/><rect x="1126" y="694" width="5" height="5" fill="#e9e9ea"/><rect x="1131" y="684" width="5" height="5" fill="#d6d8dc"/><rect x="1131" y="689" width="5" height="5" fill="#e4e4e4"/><rect x="1136" y="684" width="5" height="5" fill="#d2d4d8"/><rect x="1136" y="689" width="5" height="5" fill="#e6e6e6"/><rect x="1141" y="684" width="5" height="5" fill="#d2d4d8"/><rect x="1141" y="689" width="5" height="5" fill="#e4e4e4"/><rect x="1146" y="679" width="5" height="5" fill="#eef1f5"/><rect x="1146" y="684" width="5" height="5" fill="#e0e2e4"/><rect x="1146" y="689" width="5" height="5" fill="#e0e2e4"/><rect x="1146" y="694" width="5" height="5" fill="#f6f6f6"/><rect x="1151" y="679" width="5" height="5" fill="#ececec"/><rect x="1151" y="684" width="5" height="5" fill="#dedad7"/><rect x="1151" y="689" width="5" height="5" fill="#e2dfdc"/><rect x="1156" y="684" width="5" height="5" fill="#eaebec"/><rect x="1156" y="689" width="5" height="5" fill="#e6e6e6"/><rect x="1161" y="684" width="5" height="5" fill="#eaeef3"/><rect x="1161" y="689" width="5" height="5" fill="#dcdcdc"/><rect x="1161" y="694" width="5" height="5" fill="#eef1f5"/><rect x="1166" y="684" width="5" height="5" fill="#eaebec"/><rect x="1166" y="689" width="5" height="5" fill="#e4e6ea"/><rect x="1171" y="684" width="5" height="5" fill="#cdd0d5"/><rect x="1171" y="689" width="5" height="5" fill="#dadcdf"/><rect x="1176" y="684" width="5" height="5" fill="#e6e6e6"/><rect x="1176" y="689" width="5" height="5" fill="#e0e2e4"/><rect x="1296" y="684" width="5" height="5" fill="#e4e4e4"/><rect x="1296" y="689" width="5" height="5" fill="#dadcdf"/><rect x="1296" y="694" width="5" height="5" fill="#f4f1ee"/><rect x="1301" y="684" width="5" height="5" fill="#ece8e4"/><rect x="1301" y="689" width="5" height="5" fill="#d2d4d8"/><rect x="1301" y="694" width="5" height="5" fill="#f0f0f0"/><rect x="1306" y="684" width="5" height="5" fill="#e8ecf0"/><rect x="1306" y="689" width="5" height="5" fill="#d2d4d8"/><rect x="1306" y="694" width="5" height="5" fill="#f6f6f6"/><rect x="1311" y="684" width="5" height="5" fill="#e2e2e2"/><rect x="1311" y="689" width="5" height="5" fill="#e8e8e8"/><rect x="1311" y="694" width="5" height="5" fill="#f0f0f0"/><rect x="1316" y="684" width="5" height="5" fill="#e8ecf0"/><rect x="1316" y="689" width="5" height="5" fill="#dcdcdc"/><rect x="1316" y="694" width="5" height="5" fill="#f6f6f6"/><rect x="1321" y="684" width="5" height="5" fill="#dee2e6"/><rect x="1321" y="689" width="5" height="5" fill="#dfdfdf"/><rect x="1321" y="694" width="5" height="5" fill="#f4f1ee"/><rect x="1396" y="684" width="5" height="5" fill="#dee2e6"/><rect x="1396" y="689" width="5" height="5" fill="#dcdcdc"/><rect x="1396" y="694" width="5" height="5" fill="#ececec"/><rect x="1401" y="684" width="5" height="5" fill="#e4e4e4"/><rect x="1401" y="689" width="5" height="5" fill="#d6d8dc"/><rect x="1401" y="694" width="5" height="5" fill="#f6f6f6"/><rect x="1406" y="684" width="5" height="5" fill="#e8ecf0"/><rect x="1406" y="689" width="5" height="5" fill="#d2d4d8"/><rect x="1406" y="694" width="5" height="5" fill="#f2f2f2"/><rect x="1411" y="684" width="5" height="5" fill="#e6e4e0"/><rect x="1411" y="689" width="5" height="5" fill="#e4e4e4"/><rect x="1411" y="694" width="5" height="5" fill="#eef1f5"/><rect x="1416" y="684" width="5" height="5" fill="#e4e4e4"/><rect x="1416" y="689" width="5" height="5" fill="#dfdfdf"/><rect x="1416" y="694" width="5" height="5" fill="#f3ece8"/><rect x="1421" y="684" width="5" height="5" fill="#dee2e6"/><rect x="1421" y="689" width="5" height="5" fill="#e4e4e4"/><rect x="1421" y="694" width="5" height="5" fill="#f0f0f0"/><rect x="1511" y="684" width="5" height="5" fill="#eceef4"/><rect x="1511" y="689" width="5" height="5" fill="#e0e2e4"/><rect x="1511" y="694" width="5" height="5" fill="#eef1f5"/><rect x="1516" y="684" width="5" height="5" fill="#eceef4"/><rect x="1516" y="689" width="5" height="5" fill="#ece9e6"/><rect x="1516" y="694" width="5" height="5" fill="#f0f0f0"/><rect x="1521" y="684" width="5" height="5" fill="#e8ecf0"/><rect x="1521" y="689" width="5" height="5" fill="#d6d8dc"/><rect x="1521" y="694" width="5" height="5" fill="#eef1f5"/><rect x="1526" y="684" width="5" height="5" fill="#e6e4e0"/><rect x="1526" y="689" width="5" height="5" fill="#dedfe1"/><rect x="1526" y="694" width="5" height="5" fill="#f2f2f2"/><rect x="1531" y="684" width="5" height="5" fill="#e6e4e0"/><rect x="1531" y="689" width="5" height="5" fill="#eaeef3"/><rect x="1531" y="694" width="5" height="5" fill="#f0f0f0"/><rect x="1536" y="684" width="5" height="5" fill="#e2e2e2"/><rect x="1536" y="689" width="5" height="5" fill="#e4e4e4"/><rect x="1536" y="694" width="5" height="5" fill="#f3ece8"/><rect x="226" y="714" width="5" height="5" fill="#f4f1ee"/><rect x="226" y="719" width="5" height="5" fill="#dadcdf"/><rect x="226" y="724" width="5" height="5" fill="#e6e6e6"/><rect x="231" y="719" width="5" height="5" fill="#dfdfdf"/><rect x="231" y="724" width="5" height="5" fill="#eaeef3"/><rect x="236" y="714" width="5" height="5" fill="#f0f0f0"/><rect x="236" y="719" width="5" height="5" fill="#d2d4d8"/><rect x="236" y="724" width="5" height="5" fill="#e4e6ea"/><rect x="241" y="719" width="5" height="5" fill="#d6d8dc"/><rect x="241" y="724" width="5" height="5" fill="#dedfe1"/><rect x="246" y="719" width="5" height="5" fill="#e6e6e6"/><rect x="246" y="724" width="5" height="5" fill="#dcdcdc"/><rect x="251" y="719" width="5" height="5" fill="#dedad7"/><rect x="251" y="724" width="5" height="5" fill="#dedfe1"/><rect x="256" y="719" width="5" height="5" fill="#d6d8dc"/><rect x="256" y="724" width="5" height="5" fill="#e4e6ea"/><rect x="261" y="714" width="5" height="5" fill="#e9e9ea"/><rect x="261" y="719" width="5" height="5" fill="#dedfe1"/><rect x="261" y="724" width="5" height="5" fill="#d2d4d8"/><rect x="361" y="719" width="5" height="5" fill="#e8e8e8"/><rect x="361" y="724" width="5" height="5" fill="#e2dfdc"/><rect x="366" y="719" width="5" height="5" fill="#dadcdf"/><rect x="366" y="724" width="5" height="5" fill="#e0e2e4"/><rect x="371" y="719" width="5" height="5" fill="#e8e8e8"/><rect x="371" y="724" width="5" height="5" fill="#e6e6e6"/><rect x="376" y="719" width="5" height="5" fill="#e8e8e8"/><rect x="376" y="724" width="5" height="5" fill="#d2d4d8"/><rect x="381" y="719" width="5" height="5" fill="#dee2e6"/><rect x="381" y="724" width="5" height="5" fill="#e2e2e2"/><rect x="386" y="719" width="5" height="5" fill="#ece9e6"/><rect x="386" y="724" width="5" height="5" fill="#dfdfdf"/><rect x="391" y="719" width="5" height="5" fill="#dfdfdf"/><rect x="391" y="724" width="5" height="5" fill="#dedad7"/><rect x="396" y="714" width="5" height="5" fill="#ececec"/><rect x="396" y="719" width="5" height="5" fill="#dedad7"/><rect x="396" y="724" width="5" height="5" fill="#dadcdf"/><rect x="401" y="714" width="5" height="5" fill="#f4f1ee"/><rect x="401" y="719" width="5" height="5" fill="#e4e4e4"/><rect x="401" y="724" width="5" height="5" fill="#d2d4d8"/><rect x="406" y="719" width="5" height="5" fill="#e6e6e6"/><rect x="406" y="724" width="5" height="5" fill="#e2dfdc"/><rect x="411" y="719" width="5" height="5" fill="#dadcdf"/><rect x="411" y="724" width="5" height="5" fill="#e6e6e6"/><rect x="416" y="719" width="5" height="5" fill="#d2d4d8"/><rect x="416" y="724" width="5" height="5" fill="#e8e8e8"/><rect x="421" y="719" width="5" height="5" fill="#d2d4d8"/><rect x="421" y="724" width="5" height="5" fill="#dcdcdc"/><rect x="426" y="719" width="5" height="5" fill="#dedfe1"/><rect x="426" y="724" width="5" height="5" fill="#cdd0d5"/><rect x="431" y="719" width="5" height="5" fill="#dadcdf"/><rect x="431" y="724" width="5" height="5" fill="#d6d8dc"/><rect x="436" y="719" width="5" height="5" fill="#eaebec"/><rect x="436" y="724" width="5" height="5" fill="#e0e2e4"/><rect x="441" y="719" width="5" height="5" fill="#d6d8dc"/><rect x="441" y="724" width="5" height="5" fill="#e4e4e4"/><rect x="446" y="714" width="5" height="5" fill="#f2f2f2"/><rect x="446" y="719" width="5" height="5" fill="#dedfe1"/><rect x="446" y="724" width="5" height="5" fill="#dedad7"/><rect x="451" y="714" width="5" height="5" fill="#f3ece8"/><rect x="451" y="719" width="5" height="5" fill="#e6e6e6"/><rect x="451" y="724" width="5" height="5" fill="#dfdfdf"/><rect x="456" y="719" width="5" height="5" fill="#dfdfdf"/><rect x="456" y="724" width="5" height="5" fill="#e4e6ea"/><rect x="461" y="719" width="5" height="5" fill="#eaebec"/><rect x="461" y="724" width="5" height="5" fill="#dedad7"/><rect x="466" y="714" width="5" height="5" fill="#f4f1ee"/><rect x="466" y="719" width="5" height="5" fill="#e0e2e4"/><rect x="466" y="724" width="5" height="5" fill="#dcdcdc"/><rect x="471" y="719" width="5" height="5" fill="#ece9e6"/><rect x="471" y="724" width="5" height="5" fill="#cdd0d5"/><rect x="476" y="719" width="5" height="5" fill="#dedfe1"/><rect x="476" y="724" width="5" height="5" fill="#cdd0d5"/><rect x="481" y="719" width="5" height="5" fill="#dfdfdf"/><rect x="481" y="724" width="5" height="5" fill="#dadcdf"/><rect x="486" y="714" width="5" height="5" fill="#ececec"/><rect x="486" y="719" width="5" height="5" fill="#e8e8e8"/><rect x="486" y="724" width="5" height="5" fill="#e0e2e4"/><rect x="491" y="714" width="5" height="5" fill="#ececec"/><rect x="491" y="719" width="5" height="5" fill="#dedfe1"/><rect x="491" y="724" width="5" height="5" fill="#e2dfdc"/><rect x="496" y="719" width="5" height="5" fill="#dcdcdc"/><rect x="496" y="724" width="5" height="5" fill="#e6e6e6"/><rect x="501" y="719" width="5" height="5" fill="#dcdcdc"/><rect x="501" y="724" width="5" height="5" fill="#e2dfdc"/><rect x="506" y="719" width="5" height="5" fill="#cdd0d5"/><rect x="506" y="724" width="5" height="5" fill="#dedad7"/><rect x="511" y="719" width="5" height="5" fill="#eaebec"/><rect x="511" y="724" width="5" height="5" fill="#d2d4d8"/><rect x="626" y="714" width="5" height="5" fill="#f3ece8"/><rect x="626" y="719" width="5" height="5" fill="#dedad7"/><rect x="626" y="724" width="5" height="5" fill="#dfdfdf"/><rect x="626" y="729" width="5" height="5" fill="#f6f6f6"/><rect x="631" y="714" width="5" height="5" fill="#f4f1ee"/><rect x="631" y="719" width="5" height="5" fill="#e8e8e8"/><rect x="631" y="724" width="5" height="5" fill="#dedfe1"/><rect x="631" y="729" width="5" height="5" fill="#ececec"/><rect x="636" y="714" width="5" height="5" fill="#f2f2f2"/><rect x="636" y="719" width="5" height="5" fill="#e4e4e4"/><rect x="636" y="724" width="5" height="5" fill="#cdd0d5"/><rect x="636" y="729" width="5" height="5" fill="#eef1f5"/><rect x="646" y="714" width="5" height="5" fill="#e9e9ea"/><rect x="646" y="719" width="5" height="5" fill="#cdd0d5"/><rect x="646" y="724" width="5" height="5" fill="#eaeef3"/><rect x="651" y="719" width="5" height="5" fill="#e0e2e4"/><rect x="651" y="724" width="5" height="5" fill="#e2dfdc"/><rect x="656" y="719" width="5" height="5" fill="#dadcdf"/><rect x="656" y="724" width="5" height="5" fill="#e4e6ea"/><rect x="661" y="719" width="5" height="5" fill="#eaebec"/><rect x="661" y="724" width="5" height="5" fill="#dadcdf"/><rect x="666" y="714" width="5" height="5" fill="#f4f1ee"/><rect x="666" y="719" width="5" height="5" fill="#eaebec"/><rect x="666" y="724" width="5" height="5" fill="#eaebec"/><rect x="671" y="719" width="5" height="5" fill="#dadcdf"/><rect x="671" y="724" width="5" height="5" fill="#dfdfdf"/><rect x="676" y="719" width="5" height="5" fill="#d6d8dc"/><rect x="676" y="724" width="5" height="5" fill="#d6d8dc"/><rect x="681" y="719" width="5" height="5" fill="#e4e4e4"/><rect x="681" y="724" width="5" height="5" fill="#ece9e6"/><rect x="686" y="719" width="5" height="5" fill="#dcdcdc"/><rect x="686" y="724" width="5" height="5" fill="#eaebec"/><rect x="691" y="719" width="5" height="5" fill="#e2dfdc"/><rect x="691" y="724" width="5" height="5" fill="#d2d4d8"/><rect x="696" y="719" width="5" height="5" fill="#e0e2e4"/><rect x="696" y="724" width="5" height="5" fill="#e0e2e4"/><rect x="701" y="719" width="5" height="5" fill="#cdd0d5"/><rect x="701" y="724" width="5" height="5" fill="#ece9e6"/><rect x="706" y="719" width="5" height="5" fill="#e6e6e6"/><rect x="706" y="724" width="5" height="5" fill="#cdd0d5"/><rect x="711" y="719" width="5" height="5" fill="#dedfe1"/><rect x="711" y="724" width="5" height="5" fill="#d6d8dc"/><rect x="716" y="714" width="5" height="5" fill="#f6f6f6"/><rect x="716" y="719" width="5" height="5" fill="#dcdcdc"/><rect x="716" y="724" width="5" height="5" fill="#e4e6ea"/><rect x="721" y="719" width="5" height="5" fill="#dfdfdf"/><rect x="721" y="724" width="5" height="5" fill="#d6d8dc"/><rect x="726" y="719" width="5" height="5" fill="#d6d8dc"/><rect x="726" y="724" width="5" height="5" fill="#e2dfdc"/><rect x="731" y="719" width="5" height="5" fill="#dfdfdf"/><rect x="731" y="724" width="5" height="5" fill="#dcdcdc"/><rect x="736" y="719" width="5" height="5" fill="#e2dfdc"/><rect x="736" y="724" width="5" height="5" fill="#e4e6ea"/><rect x="741" y="719" width="5" height="5" fill="#e2dfdc"/><rect x="741" y="724" width="5" height="5" fill="#d6d8dc"/><rect x="746" y="719" width="5" height="5" fill="#ece9e6"/><rect x="746" y="724" width="5" height="5" fill="#dedad7"/><rect x="751" y="719" width="5" height="5" fill="#e8e8e8"/><rect x="751" y="724" width="5" height="5" fill="#d2d4d8"/><rect x="756" y="719" width="5" height="5" fill="#cdd0d5"/><rect x="756" y="724" width="5" height="5" fill="#d2d4d8"/><rect x="761" y="719" width="5" height="5" fill="#d6d8dc"/><rect x="761" y="724" width="5" height="5" fill="#d2d4d8"/><rect x="766" y="719" width="5" height="5" fill="#d2d4d8"/><rect x="766" y="724" width="5" height="5" fill="#e6e6e6"/><rect x="871" y="719" width="5" height="5" fill="#eaeef3"/><rect x="871" y="724" width="5" height="5" fill="#cdd0d5"/><rect x="876" y="719" width="5" height="5" fill="#dcdcdc"/><rect x="876" y="724" width="5" height="5" fill="#e4e6ea"/><rect x="881" y="719" width="5" height="5" fill="#eaebec"/><rect x="881" y="724" width="5" height="5" fill="#dcdcdc"/><rect x="886" y="719" width="5" height="5" fill="#eaebec"/><rect x="886" y="724" width="5" height="5" fill="#dfdfdf"/><rect x="891" y="719" width="5" height="5" fill="#e6e6e6"/><rect x="891" y="724" width="5" height="5" fill="#eaeef3"/><rect x="896" y="719" width="5" height="5" fill="#e8e8e8"/><rect x="896" y="724" width="5" height="5" fill="#d6d8dc"/><rect x="896" y="729" width="5" height="5" fill="#f2f2f2"/><rect x="901" y="719" width="5" height="5" fill="#dfdfdf"/><rect x="901" y="724" width="5" height="5" fill="#eaeef3"/><rect x="901" y="729" width="5" height="5" fill="#f6f6f6"/><rect x="906" y="719" width="5" height="5" fill="#ece8e4"/><rect x="906" y="724" width="5" height="5" fill="#e2e2e2"/><rect x="911" y="719" width="5" height="5" fill="#dcdcdc"/><rect x="911" y="724" width="5" height="5" fill="#e4e6ea"/><rect x="916" y="714" width="5" height="5" fill="#f0f0f0"/><rect x="916" y="719" width="5" height="5" fill="#e4e4e4"/><rect x="916" y="724" width="5" height="5" fill="#eaeef3"/><rect x="921" y="719" width="5" height="5" fill="#dadcdf"/><rect x="921" y="724" width="5" height="5" fill="#e4e6ea"/><rect x="926" y="719" width="5" height="5" fill="#e8e8e8"/><rect x="926" y="724" width="5" height="5" fill="#dadcdf"/><rect x="926" y="729" width="5" height="5" fill="#f4f1ee"/><rect x="931" y="719" width="5" height="5" fill="#e4e4e4"/><rect x="931" y="724" width="5" height="5" fill="#dadcdf"/><rect x="931" y="729" width="5" height="5" fill="#f4f1ee"/><rect x="936" y="714" width="5" height="5" fill="#eef1f5"/><rect x="936" y="719" width="5" height="5" fill="#dcdcdc"/><rect x="936" y="724" width="5" height="5" fill="#dedfe1"/><rect x="941" y="719" width="5" height="5" fill="#e4e4e4"/><rect x="941" y="724" width="5" height="5" fill="#d6d8dc"/><rect x="1111" y="719" width="5" height="5" fill="#cdd0d5"/><rect x="1111" y="724" width="5" height="5" fill="#e2dfdc"/><rect x="1111" y="729" width="5" height="5" fill="#f0f0f0"/><rect x="1116" y="719" width="5" height="5" fill="#e8e8e8"/><rect x="1116" y="724" width="5" height="5" fill="#dedfe1"/><rect x="1116" y="729" width="5" height="5" fill="#f0f0f0"/><rect x="1121" y="719" width="5" height="5" fill="#e6e6e6"/><rect x="1121" y="724" width="5" height="5" fill="#e0e2e4"/><rect x="1126" y="714" width="5" height="5" fill="#e9e9ea"/><rect x="1126" y="719" width="5" height="5" fill="#d2d4d8"/><rect x="1126" y="724" width="5" height="5" fill="#dfdfdf"/><rect x="1131" y="714" width="5" height="5" fill="#f3ece8"/><rect x="1131" y="719" width="5" height="5" fill="#eaebec"/><rect x="1131" y="724" width="5" height="5" fill="#dedfe1"/><rect x="1136" y="719" width="5" height="5" fill="#e6e6e6"/><rect x="1136" y="724" width="5" height="5" fill="#d2d4d8"/><rect x="1136" y="729" width="5" height="5" fill="#f2f2f2"/><rect x="1141" y="719" width="5" height="5" fill="#ece9e6"/><rect x="1141" y="724" width="5" height="5" fill="#dfdfdf"/><rect x="1146" y="719" width="5" height="5" fill="#e8e8e8"/><rect x="1146" y="724" width="5" height="5" fill="#dcdcdc"/><rect x="1151" y="719" width="5" height="5" fill="#d6d8dc"/><rect x="1151" y="724" width="5" height="5" fill="#d6d8dc"/><rect x="1156" y="719" width="5" height="5" fill="#dadcdf"/><rect x="1156" y="724" width="5" height="5" fill="#cdd0d5"/><rect x="1161" y="719" width="5" height="5" fill="#ece9e6"/><rect x="1161" y="724" width="5" height="5" fill="#dadcdf"/><rect x="1166" y="714" width="5" height="5" fill="#f6f6f6"/><rect x="1166" y="719" width="5" height="5" fill="#dadcdf"/><rect x="1166" y="724" width="5" height="5" fill="#dadcdf"/><rect x="1171" y="714" width="5" height="5" fill="#f4f1ee"/><rect x="1171" y="719" width="5" height="5" fill="#eaebec"/><rect x="1171" y="724" width="5" height="5" fill="#d6d8dc"/><rect x="1171" y="729" width="5" height="5" fill="#e9e9ea"/><rect x="1176" y="714" width="5" height="5" fill="#f6f6f6"/><rect x="1176" y="719" width="5" height="5" fill="#e8e8e8"/><rect x="1176" y="724" width="5" height="5" fill="#eaeef3"/><rect x="1296" y="719" width="5" height="5" fill="#e4e4e4"/><rect x="1296" y="724" width="5" height="5" fill="#dedfe1"/><rect x="1296" y="729" width="5" height="5" fill="#eef1f5"/><rect x="1301" y="719" width="5" height="5" fill="#ece8e4"/><rect x="1301" y="724" width="5" height="5" fill="#eaebec"/><rect x="1301" y="729" width="5" height="5" fill="#f0f0f0"/><rect x="1306" y="719" width="5" height="5" fill="#e8ecf0"/><rect x="1306" y="724" width="5" height="5" fill="#ece9e6"/><rect x="1306" y="729" width="5" height="5" fill="#f3ece8"/><rect x="1311" y="719" width="5" height="5" fill="#e2e2e2"/><rect x="1311" y="724" width="5" height="5" fill="#e4e4e4"/><rect x="1311" y="729" width="5" height="5" fill="#f4f1ee"/><rect x="1316" y="719" width="5" height="5" fill="#e6e4e0"/><rect x="1316" y="724" width="5" height="5" fill="#dedfe1"/><rect x="1316" y="729" width="5" height="5" fill="#f4f1ee"/><rect x="1321" y="719" width="5" height="5" fill="#e6e4e0"/><rect x="1321" y="724" width="5" height="5" fill="#cdd0d5"/><rect x="1321" y="729" width="5" height="5" fill="#f3ece8"/><rect x="1396" y="719" width="5" height="5" fill="#dee2e6"/><rect x="1396" y="724" width="5" height="5" fill="#ece9e6"/><rect x="1396" y="729" width="5" height="5" fill="#e9e9ea"/><rect x="1401" y="719" width="5" height="5" fill="#dee2e6"/><rect x="1401" y="724" width="5" height="5" fill="#e2dfdc"/><rect x="1401" y="729" width="5" height="5" fill="#ececec"/><rect x="1406" y="719" width="5" height="5" fill="#eceef4"/><rect x="1406" y="724" width="5" height="5" fill="#e4e4e4"/><rect x="1406" y="729" width="5" height="5" fill="#f2f2f2"/><rect x="1411" y="719" width="5" height="5" fill="#e8ecf0"/><rect x="1411" y="724" width="5" height="5" fill="#dedad7"/><rect x="1411" y="729" width="5" height="5" fill="#ececec"/><rect x="1416" y="719" width="5" height="5" fill="#eceef4"/><rect x="1416" y="724" width="5" height="5" fill="#dadcdf"/><rect x="1416" y="729" width="5" height="5" fill="#f6f6f6"/><rect x="1421" y="719" width="5" height="5" fill="#e6e4e0"/><rect x="1421" y="724" width="5" height="5" fill="#dadcdf"/><rect x="1421" y="729" width="5" height="5" fill="#f3ece8"/><rect x="1511" y="719" width="5" height="5" fill="#e4e4e4"/><rect x="1511" y="724" width="5" height="5" fill="#eaebec"/><rect x="1511" y="729" width="5" height="5" fill="#eef1f5"/><rect x="1516" y="719" width="5" height="5" fill="#e4e4e4"/><rect x="1516" y="724" width="5" height="5" fill="#d2d4d8"/><rect x="1516" y="729" width="5" height="5" fill="#eef1f5"/><rect x="1521" y="719" width="5" height="5" fill="#ece8e4"/><rect x="1521" y="724" width="5" height="5" fill="#cdd0d5"/><rect x="1521" y="729" width="5" height="5" fill="#f6f6f6"/><rect x="1526" y="719" width="5" height="5" fill="#eceef4"/><rect x="1526" y="724" width="5" height="5" fill="#eaeef3"/><rect x="1526" y="729" width="5" height="5" fill="#f4f1ee"/><rect x="1531" y="719" width="5" height="5" fill="#e6e4e0"/><rect x="1531" y="724" width="5" height="5" fill="#e8e8e8"/><rect x="1531" y="729" width="5" height="5" fill="#f3ece8"/><rect x="1536" y="719" width="5" height="5" fill="#dee2e6"/><rect x="1536" y="724" width="5" height="5" fill="#e6e6e6"/><rect x="1536" y="729" width="5" height="5" fill="#f0f0f0"/><rect x="226" y="754" width="5" height="5" fill="#e4e4e4"/><rect x="226" y="759" width="5" height="5" fill="#eaebec"/><rect x="231" y="754" width="5" height="5" fill="#d2d4d8"/><rect x="231" y="759" width="5" height="5" fill="#d2d4d8"/><rect x="236" y="754" width="5" height="5" fill="#dedad7"/><rect x="236" y="759" width="5" height="5" fill="#dfdfdf"/><rect x="241" y="754" width="5" height="5" fill="#eaebec"/><rect x="241" y="759" width="5" height="5" fill="#dedad7"/><rect x="246" y="749" width="5" height="5" fill="#f0f0f0"/><rect x="246" y="754" width="5" height="5" fill="#ece9e6"/><rect x="246" y="759" width="5" height="5" fill="#eaeef3"/><rect x="251" y="754" width="5" height="5" fill="#dedad7"/><rect x="251" y="759" width="5" height="5" fill="#eaebec"/><rect x="256" y="749" width="5" height="5" fill="#f4f1ee"/><rect x="256" y="754" width="5" height="5" fill="#eaeef3"/><rect x="256" y="759" width="5" height="5" fill="#e0e2e4"/><rect x="261" y="749" width="5" height="5" fill="#f2f2f2"/><rect x="261" y="754" width="5" height="5" fill="#eaebec"/><rect x="261" y="759" width="5" height="5" fill="#e8e8e8"/><rect x="361" y="754" width="5" height="5" fill="#dfdfdf"/><rect x="361" y="759" width="5" height="5" fill="#e2dfdc"/><rect x="366" y="754" width="5" height="5" fill="#e2dfdc"/><rect x="366" y="759" width="5" height="5" fill="#ece9e6"/><rect x="371" y="749" width="5" height="5" fill="#f6f6f6"/><rect x="371" y="754" width="5" height="5" fill="#e8e8e8"/><rect x="371" y="759" width="5" height="5" fill="#e4e4e4"/><rect x="376" y="754" width="5" height="5" fill="#e8e8e8"/><rect x="376" y="759" width="5" height="5" fill="#cdd0d5"/><rect x="381" y="754" width="5" height="5" fill="#e6e4e0"/><rect x="381" y="759" width="5" height="5" fill="#e4e4e4"/><rect x="386" y="754" width="5" height="5" fill="#eaebec"/><rect x="386" y="759" width="5" height="5" fill="#e4e6ea"/><rect x="391" y="749" width="5" height="5" fill="#f3ece8"/><rect x="391" y="754" width="5" height="5" fill="#e8e8e8"/><rect x="391" y="759" width="5" height="5" fill="#e4e6ea"/><rect x="396" y="754" width="5" height="5" fill="#e2dfdc"/><rect x="396" y="759" width="5" height="5" fill="#dadcdf"/><rect x="401" y="754" width="5" height="5" fill="#dedfe1"/><rect x="401" y="759" width="5" height="5" fill="#e6e6e6"/><rect x="406" y="749" width="5" height="5" fill="#f2f2f2"/><rect x="406" y="754" width="5" height="5" fill="#e6e6e6"/><rect x="406" y="759" width="5" height="5" fill="#d2d4d8"/><rect x="411" y="749" width="5" height="5" fill="#f0f0f0"/><rect x="411" y="754" width="5" height="5" fill="#dedfe1"/><rect x="411" y="759" width="5" height="5" fill="#dfdfdf"/><rect x="416" y="754" width="5" height="5" fill="#dedfe1"/><rect x="416" y="759" width="5" height="5" fill="#cdd0d5"/><rect x="421" y="754" width="5" height="5" fill="#eaebec"/><rect x="421" y="759" width="5" height="5" fill="#cdd0d5"/><rect x="426" y="749" width="5" height="5" fill="#f0f0f0"/><rect x="426" y="754" width="5" height="5" fill="#d2d4d8"/><rect x="426" y="759" width="5" height="5" fill="#e4e4e4"/><rect x="431" y="749" width="5" height="5" fill="#f4f1ee"/><rect x="431" y="754" width="5" height="5" fill="#dcdcdc"/><rect x="431" y="759" width="5" height="5" fill="#e2dfdc"/><rect x="436" y="749" width="5" height="5" fill="#f3ece8"/><rect x="436" y="754" width="5" height="5" fill="#e0e2e4"/><rect x="436" y="759" width="5" height="5" fill="#eaeef3"/><rect x="441" y="754" width="5" height="5" fill="#eaebec"/><rect x="441" y="759" width="5" height="5" fill="#ece9e6"/><rect x="446" y="754" width="5" height="5" fill="#dedfe1"/><rect x="446" y="759" width="5" height="5" fill="#cdd0d5"/><rect x="451" y="754" width="5" height="5" fill="#eaebec"/><rect x="451" y="759" width="5" height="5" fill="#d6d8dc"/><rect x="456" y="749" width="5" height="5" fill="#ececec"/><rect x="456" y="754" width="5" height="5" fill="#d2d4d8"/><rect x="456" y="759" width="5" height="5" fill="#d2d4d8"/><rect x="461" y="749" width="5" height="5" fill="#f4f1ee"/><rect x="461" y="754" width="5" height="5" fill="#e6e6e6"/><rect x="461" y="759" width="5" height="5" fill="#d6d8dc"/><rect x="466" y="749" width="5" height="5" fill="#ececec"/><rect x="466" y="754" width="5" height="5" fill="#e4e6ea"/><rect x="466" y="759" width="5" height="5" fill="#dfdfdf"/><rect x="471" y="749" width="5" height="5" fill="#f4f1ee"/><rect x="471" y="754" width="5" height="5" fill="#d2d4d8"/><rect x="471" y="759" width="5" height="5" fill="#e4e6ea"/><rect x="476" y="754" width="5" height="5" fill="#eaeef3"/><rect x="476" y="759" width="5" height="5" fill="#e2dfdc"/><rect x="481" y="754" width="5" height="5" fill="#ece9e6"/><rect x="481" y="759" width="5" height="5" fill="#e4e6ea"/><rect x="486" y="749" width="5" height="5" fill="#f0f0f0"/><rect x="486" y="754" width="5" height="5" fill="#eaebec"/><rect x="486" y="759" width="5" height="5" fill="#eaebec"/><rect x="491" y="754" width="5" height="5" fill="#e0e2e4"/><rect x="491" y="759" width="5" height="5" fill="#dfdfdf"/><rect x="496" y="754" width="5" height="5" fill="#ece9e6"/><rect x="496" y="759" width="5" height="5" fill="#dfdfdf"/><rect x="501" y="754" width="5" height="5" fill="#d6d8dc"/><rect x="501" y="759" width="5" height="5" fill="#dedfe1"/><rect x="506" y="754" width="5" height="5" fill="#dcdcdc"/><rect x="506" y="759" width="5" height="5" fill="#e6e6e6"/><rect x="511" y="749" width="5" height="5" fill="#f6f6f6"/><rect x="511" y="754" width="5" height="5" fill="#d6d8dc"/><rect x="511" y="759" width="5" height="5" fill="#dfdfdf"/><rect x="626" y="749" width="5" height="5" fill="#f6f6f6"/><rect x="626" y="754" width="5" height="5" fill="#d2d4d8"/><rect x="626" y="759" width="5" height="5" fill="#cdd0d5"/><rect x="626" y="764" width="5" height="5" fill="#f4f1ee"/><rect x="631" y="749" width="5" height="5" fill="#f3ece8"/><rect x="631" y="754" width="5" height="5" fill="#dcdcdc"/><rect x="631" y="759" width="5" height="5" fill="#e0e2e4"/><rect x="631" y="764" width="5" height="5" fill="#f0f0f0"/><rect x="636" y="749" width="5" height="5" fill="#f0f0f0"/><rect x="636" y="754" width="5" height="5" fill="#e8e8e8"/><rect x="636" y="759" width="5" height="5" fill="#e6e6e6"/><rect x="636" y="764" width="5" height="5" fill="#f6f6f6"/><rect x="646" y="754" width="5" height="5" fill="#dedad7"/><rect x="646" y="759" width="5" height="5" fill="#e4e4e4"/><rect x="651" y="754" width="5" height="5" fill="#dfdfdf"/><rect x="651" y="759" width="5" height="5" fill="#e4e4e4"/><rect x="656" y="754" width="5" height="5" fill="#d6d8dc"/><rect x="656" y="759" width="5" height="5" fill="#ece9e6"/><rect x="661" y="754" width="5" height="5" fill="#d2d4d8"/><rect x="661" y="759" width="5" height="5" fill="#dadcdf"/><rect x="666" y="749" width="5" height="5" fill="#e9e9ea"/><rect x="666" y="754" width="5" height="5" fill="#d6d8dc"/><rect x="666" y="759" width="5" height="5" fill="#e4e6ea"/><rect x="671" y="754" width="5" height="5" fill="#dadcdf"/><rect x="671" y="759" width="5" height="5" fill="#d6d8dc"/><rect x="676" y="754" width="5" height="5" fill="#dcdcdc"/><rect x="676" y="759" width="5" height="5" fill="#e8e8e8"/><rect x="681" y="754" width="5" height="5" fill="#dadcdf"/><rect x="681" y="759" width="5" height="5" fill="#dcdcdc"/><rect x="686" y="754" width="5" height="5" fill="#eaebec"/><rect x="686" y="759" width="5" height="5" fill="#dcdcdc"/><rect x="691" y="754" width="5" height="5" fill="#e0e2e4"/><rect x="691" y="759" width="5" height="5" fill="#e4e6ea"/><rect x="696" y="754" width="5" height="5" fill="#e4e6ea"/><rect x="696" y="759" width="5" height="5" fill="#eaeef3"/><rect x="701" y="754" width="5" height="5" fill="#d6d8dc"/><rect x="701" y="759" width="5" height="5" fill="#dfdfdf"/><rect x="706" y="754" width="5" height="5" fill="#e0e2e4"/><rect x="706" y="759" width="5" height="5" fill="#d6d8dc"/><rect x="711" y="754" width="5" height="5" fill="#ece9e6"/><rect x="711" y="759" width="5" height="5" fill="#eaebec"/><rect x="716" y="754" width="5" height="5" fill="#e4e4e4"/><rect x="716" y="759" width="5" height="5" fill="#dcdcdc"/><rect x="721" y="754" width="5" height="5" fill="#eaebec"/><rect x="721" y="759" width="5" height="5" fill="#dadcdf"/><rect x="726" y="754" width="5" height="5" fill="#e8e8e8"/><rect x="726" y="759" width="5" height="5" fill="#dfdfdf"/><rect x="731" y="754" width="5" height="5" fill="#dfdfdf"/><rect x="731" y="759" width="5" height="5" fill="#dedad7"/><rect x="736" y="754" width="5" height="5" fill="#e2dfdc"/><rect x="736" y="759" width="5" height="5" fill="#e0e2e4"/><rect x="741" y="754" width="5" height="5" fill="#dcdcdc"/><rect x="741" y="759" width="5" height="5" fill="#dadcdf"/><rect x="746" y="754" width="5" height="5" fill="#e0e2e4"/><rect x="746" y="759" width="5" height="5" fill="#e4e4e4"/><rect x="751" y="754" width="5" height="5" fill="#d6d8dc"/><rect x="751" y="759" width="5" height="5" fill="#dedad7"/><rect x="756" y="754" width="5" height="5" fill="#dfdfdf"/><rect x="756" y="759" width="5" height="5" fill="#eaeef3"/><rect x="761" y="754" width="5" height="5" fill="#e8e8e8"/><rect x="761" y="759" width="5" height="5" fill="#e4e4e4"/><rect x="766" y="754" width="5" height="5" fill="#eaebec"/><rect x="766" y="759" width="5" height="5" fill="#dedad7"/><rect x="871" y="754" width="5" height="5" fill="#e2dfdc"/><rect x="871" y="759" width="5" height="5" fill="#dedfe1"/><rect x="876" y="749" width="5" height="5" fill="#f4f1ee"/><rect x="876" y="754" width="5" height="5" fill="#ece9e6"/><rect x="876" y="759" width="5" height="5" fill="#ece9e6"/><rect x="881" y="754" width="5" height="5" fill="#e0e2e4"/><rect x="881" y="759" width="5" height="5" fill="#dcdcdc"/><rect x="886" y="754" width="5" height="5" fill="#e4e4e4"/><rect x="886" y="759" width="5" height="5" fill="#dadcdf"/><rect x="891" y="754" width="5" height="5" fill="#dcdcdc"/><rect x="891" y="759" width="5" height="5" fill="#d6d8dc"/><rect x="896" y="754" width="5" height="5" fill="#e4e6ea"/><rect x="896" y="759" width="5" height="5" fill="#e2dfdc"/><rect x="901" y="754" width="5" height="5" fill="#e8e8e8"/><rect x="901" y="759" width="5" height="5" fill="#e0e2e4"/><rect x="906" y="754" width="5" height="5" fill="#e4e4e4"/><rect x="906" y="759" width="5" height="5" fill="#ece8e4"/><rect x="911" y="754" width="5" height="5" fill="#dedad7"/><rect x="911" y="759" width="5" height="5" fill="#ece9e6"/><rect x="911" y="764" width="5" height="5" fill="#f4f1ee"/><rect x="916" y="754" width="5" height="5" fill="#eaeef3"/><rect x="916" y="759" width="5" height="5" fill="#eaeef3"/><rect x="921" y="754" width="5" height="5" fill="#eaeef3"/><rect x="921" y="759" width="5" height="5" fill="#dedfe1"/><rect x="926" y="749" width="5" height="5" fill="#eef1f5"/><rect x="926" y="754" width="5" height="5" fill="#dedad7"/><rect x="926" y="759" width="5" height="5" fill="#cdd0d5"/><rect x="926" y="764" width="5" height="5" fill="#f4f1ee"/><rect x="931" y="754" width="5" height="5" fill="#e8e8e8"/><rect x="931" y="759" width="5" height="5" fill="#dadcdf"/><rect x="936" y="754" width="5" height="5" fill="#d6d8dc"/><rect x="936" y="759" width="5" height="5" fill="#eaeef3"/><rect x="941" y="754" width="5" height="5" fill="#e4e4e4"/><rect x="941" y="759" width="5" height="5" fill="#eaebec"/><rect x="941" y="764" width="5" height="5" fill="#eef1f5"/><rect x="1111" y="754" width="5" height="5" fill="#eaeef3"/><rect x="1111" y="759" width="5" height="5" fill="#dadcdf"/><rect x="1116" y="754" width="5" height="5" fill="#e6e6e6"/><rect x="1116" y="759" width="5" height="5" fill="#d2d4d8"/><rect x="1121" y="754" width="5" height="5" fill="#dcdcdc"/><rect x="1121" y="759" width="5" height="5" fill="#e0e2e4"/><rect x="1126" y="754" width="5" height="5" fill="#dedad7"/><rect x="1126" y="759" width="5" height="5" fill="#dedad7"/><rect x="1131" y="754" width="5" height="5" fill="#e4e6ea"/><rect x="1131" y="759" width="5" height="5" fill="#dfdfdf"/><rect x="1136" y="754" width="5" height="5" fill="#e4e6ea"/><rect x="1136" y="759" width="5" height="5" fill="#dcdcdc"/><rect x="1141" y="754" width="5" height="5" fill="#cdd0d5"/><rect x="1141" y="759" width="5" height="5" fill="#e6e6e6"/><rect x="1146" y="754" width="5" height="5" fill="#dfdfdf"/><rect x="1146" y="759" width="5" height="5" fill="#ece9e6"/><rect x="1151" y="754" width="5" height="5" fill="#d2d4d8"/><rect x="1151" y="759" width="5" height="5" fill="#e4e4e4"/><rect x="1151" y="764" width="5" height="5" fill="#e9e9ea"/><rect x="1156" y="754" width="5" height="5" fill="#cdd0d5"/><rect x="1156" y="759" width="5" height="5" fill="#dcdcdc"/><rect x="1161" y="749" width="5" height="5" fill="#f2f2f2"/><rect x="1161" y="754" width="5" height="5" fill="#e0e2e4"/><rect x="1161" y="759" width="5" height="5" fill="#dadcdf"/><rect x="1161" y="764" width="5" height="5" fill="#f4f1ee"/><rect x="1166" y="754" width="5" height="5" fill="#e6e6e6"/><rect x="1166" y="759" width="5" height="5" fill="#e2dfdc"/><rect x="1171" y="754" width="5" height="5" fill="#dadcdf"/><rect x="1171" y="759" width="5" height="5" fill="#e2dfdc"/><rect x="1176" y="754" width="5" height="5" fill="#dedfe1"/><rect x="1176" y="759" width="5" height="5" fill="#dedad7"/><rect x="1296" y="754" width="5" height="5" fill="#e2e2e2"/><rect x="1296" y="759" width="5" height="5" fill="#e2dfdc"/><rect x="1296" y="764" width="5" height="5" fill="#f0f0f0"/><rect x="1301" y="754" width="5" height="5" fill="#e8ecf0"/><rect x="1301" y="759" width="5" height="5" fill="#ece9e6"/><rect x="1301" y="764" width="5" height="5" fill="#f0f0f0"/><rect x="1306" y="754" width="5" height="5" fill="#e2e2e2"/><rect x="1306" y="759" width="5" height="5" fill="#eaebec"/><rect x="1306" y="764" width="5" height="5" fill="#f3ece8"/><rect x="1311" y="754" width="5" height="5" fill="#e2e2e2"/><rect x="1311" y="759" width="5" height="5" fill="#cdd0d5"/><rect x="1311" y="764" width="5" height="5" fill="#f0f0f0"/><rect x="1316" y="754" width="5" height="5" fill="#e2e2e2"/><rect x="1316" y="759" width="5" height="5" fill="#e8e8e8"/><rect x="1316" y="764" width="5" height="5" fill="#eef1f5"/><rect x="1321" y="754" width="5" height="5" fill="#e6e4e0"/><rect x="1321" y="759" width="5" height="5" fill="#eaebec"/><rect x="1321" y="764" width="5" height="5" fill="#f4f1ee"/><rect x="1396" y="754" width="5" height="5" fill="#e2e2e2"/><rect x="1396" y="759" width="5" height="5" fill="#dfdfdf"/><rect x="1396" y="764" width="5" height="5" fill="#eef1f5"/><rect x="1401" y="754" width="5" height="5" fill="#e6e4e0"/><rect x="1401" y="759" width="5" height="5" fill="#eaebec"/><rect x="1401" y="764" width="5" height="5" fill="#e9e9ea"/><rect x="1406" y="754" width="5" height="5" fill="#dee2e6"/><rect x="1406" y="759" width="5" height="5" fill="#ece9e6"/><rect x="1406" y="764" width="5" height="5" fill="#f4f1ee"/><rect x="1411" y="754" width="5" height="5" fill="#e8ecf0"/><rect x="1411" y="759" width="5" height="5" fill="#e8e8e8"/><rect x="1411" y="764" width="5" height="5" fill="#f6f6f6"/><rect x="1416" y="754" width="5" height="5" fill="#e8ecf0"/><rect x="1416" y="759" width="5" height="5" fill="#eaeef3"/><rect x="1416" y="764" width="5" height="5" fill="#f6f6f6"/><rect x="1421" y="754" width="5" height="5" fill="#e2e2e2"/><rect x="1421" y="759" width="5" height="5" fill="#eaeef3"/><rect x="1421" y="764" width="5" height="5" fill="#ececec"/><rect x="1511" y="754" width="5" height="5" fill="#eceef4"/><rect x="1511" y="759" width="5" height="5" fill="#dadcdf"/><rect x="1511" y="764" width="5" height="5" fill="#eef1f5"/><rect x="1516" y="754" width="5" height="5" fill="#ece8e4"/><rect x="1516" y="759" width="5" height="5" fill="#eaeef3"/><rect x="1516" y="764" width="5" height="5" fill="#f6f6f6"/><rect x="1521" y="754" width="5" height="5" fill="#e4e4e4"/><rect x="1521" y="759" width="5" height="5" fill="#ece9e6"/><rect x="1521" y="764" width="5" height="5" fill="#f4f1ee"/><rect x="1526" y="754" width="5" height="5" fill="#eceef4"/><rect x="1526" y="759" width="5" height="5" fill="#ece9e6"/><rect x="1526" y="764" width="5" height="5" fill="#f2f2f2"/><rect x="1531" y="754" width="5" height="5" fill="#dee2e6"/><rect x="1531" y="759" width="5" height="5" fill="#e2dfdc"/><rect x="1531" y="764" width="5" height="5" fill="#e9e9ea"/><rect x="1536" y="754" width="5" height="5" fill="#e2e2e2"/><rect x="1536" y="759" width="5" height="5" fill="#eaeef3"/><rect x="1536" y="764" width="5" height="5" fill="#e9e9ea"/><rect x="226" y="789" width="5" height="5" fill="#e0e2e4"/><rect x="226" y="794" width="5" height="5" fill="#eaebec"/><rect x="231" y="789" width="5" height="5" fill="#e4e4e4"/><rect x="231" y="794" width="5" height="5" fill="#d6d8dc"/><rect x="236" y="789" width="5" height="5" fill="#e2dfdc"/><rect x="236" y="794" width="5" height="5" fill="#dadcdf"/><rect x="241" y="789" width="5" height="5" fill="#dfdfdf"/><rect x="241" y="794" width="5" height="5" fill="#e6e6e6"/><rect x="246" y="784" width="5" height="5" fill="#f3ece8"/><rect x="246" y="789" width="5" height="5" fill="#dcdcdc"/><rect x="246" y="794" width="5" height="5" fill="#e4e4e4"/><rect x="251" y="784" width="5" height="5" fill="#e9e9ea"/><rect x="251" y="789" width="5" height="5" fill="#e0e2e4"/><rect x="251" y="794" width="5" height="5" fill="#dedfe1"/><rect x="256" y="789" width="5" height="5" fill="#e6e6e6"/><rect x="256" y="794" width="5" height="5" fill="#e2dfdc"/><rect x="261" y="789" width="5" height="5" fill="#dadcdf"/><rect x="261" y="794" width="5" height="5" fill="#e4e4e4"/><rect x="361" y="789" width="5" height="5" fill="#e6e6e6"/><rect x="361" y="794" width="5" height="5" fill="#e8e8e8"/><rect x="366" y="789" width="5" height="5" fill="#dcdcdc"/><rect x="366" y="794" width="5" height="5" fill="#eaeef3"/><rect x="371" y="784" width="5" height="5" fill="#f6f6f6"/><rect x="371" y="789" width="5" height="5" fill="#d6d8dc"/><rect x="371" y="794" width="5" height="5" fill="#e8e8e8"/><rect x="376" y="789" width="5" height="5" fill="#e2dfdc"/><rect x="376" y="794" width="5" height="5" fill="#e4e4e4"/><rect x="381" y="789" width="5" height="5" fill="#e4e4e4"/><rect x="381" y="794" width="5" height="5" fill="#e6e4e0"/><rect x="386" y="789" width="5" height="5" fill="#d2d4d8"/><rect x="386" y="794" width="5" height="5" fill="#e8e8e8"/><rect x="391" y="789" width="5" height="5" fill="#e4e6ea"/><rect x="391" y="794" width="5" height="5" fill="#ece9e6"/><rect x="396" y="784" width="5" height="5" fill="#f3ece8"/><rect x="396" y="789" width="5" height="5" fill="#eaeef3"/><rect x="396" y="794" width="5" height="5" fill="#e2dfdc"/><rect x="401" y="789" width="5" height="5" fill="#ece9e6"/><rect x="401" y="794" width="5" height="5" fill="#e4e4e4"/><rect x="406" y="789" width="5" height="5" fill="#eaebec"/><rect x="406" y="794" width="5" height="5" fill="#eaebec"/><rect x="411" y="784" width="5" height="5" fill="#f6f6f6"/><rect x="411" y="789" width="5" height="5" fill="#d2d4d8"/><rect x="411" y="794" width="5" height="5" fill="#eaebec"/><rect x="416" y="789" width="5" height="5" fill="#d6d8dc"/><rect x="416" y="794" width="5" height="5" fill="#dfdfdf"/><rect x="421" y="789" width="5" height="5" fill="#e4e4e4"/><rect x="421" y="794" width="5" height="5" fill="#cdd0d5"/><rect x="426" y="789" width="5" height="5" fill="#e2dfdc"/><rect x="426" y="794" width="5" height="5" fill="#dadcdf"/><rect x="431" y="789" width="5" height="5" fill="#e2dfdc"/><rect x="431" y="794" width="5" height="5" fill="#e6e6e6"/><rect x="436" y="784" width="5" height="5" fill="#eef1f5"/><rect x="436" y="789" width="5" height="5" fill="#dedfe1"/><rect x="436" y="794" width="5" height="5" fill="#e6e6e6"/><rect x="441" y="789" width="5" height="5" fill="#eaeef3"/><rect x="441" y="794" width="5" height="5" fill="#e6e6e6"/><rect x="446" y="784" width="5" height="5" fill="#eef1f5"/><rect x="446" y="789" width="5" height="5" fill="#e4e4e4"/><rect x="446" y="794" width="5" height="5" fill="#d6d8dc"/><rect x="451" y="784" width="5" height="5" fill="#f6f6f6"/><rect x="451" y="789" width="5" height="5" fill="#dadcdf"/><rect x="451" y="794" width="5" height="5" fill="#e0e2e4"/><rect x="456" y="789" width="5" height="5" fill="#eaeef3"/><rect x="456" y="794" width="5" height="5" fill="#e8e8e8"/><rect x="461" y="789" width="5" height="5" fill="#e8e8e8"/><rect x="461" y="794" width="5" height="5" fill="#dedfe1"/><rect x="466" y="789" width="5" height="5" fill="#ece9e6"/><rect x="466" y="794" width="5" height="5" fill="#dadcdf"/><rect x="471" y="789" width="5" height="5" fill="#e0e2e4"/><rect x="471" y="794" width="5" height="5" fill="#d6d8dc"/><rect x="476" y="789" width="5" height="5" fill="#dadcdf"/><rect x="476" y="794" width="5" height="5" fill="#dedad7"/><rect x="481" y="789" width="5" height="5" fill="#cdd0d5"/><rect x="481" y="794" width="5" height="5" fill="#d2d4d8"/><rect x="486" y="789" width="5" height="5" fill="#e2dfdc"/><rect x="486" y="794" width="5" height="5" fill="#eaeef3"/><rect x="491" y="789" width="5" height="5" fill="#e6e6e6"/><rect x="491" y="794" width="5" height="5" fill="#dadcdf"/><rect x="496" y="789" width="5" height="5" fill="#d6d8dc"/><rect x="496" y="794" width="5" height="5" fill="#ece9e6"/><rect x="501" y="789" width="5" height="5" fill="#dedad7"/><rect x="501" y="794" width="5" height="5" fill="#e4e4e4"/><rect x="506" y="789" width="5" height="5" fill="#cdd0d5"/><rect x="506" y="794" width="5" height="5" fill="#e8e8e8"/><rect x="511" y="789" width="5" height="5" fill="#e0e2e4"/><rect x="511" y="794" width="5" height="5" fill="#e4e6ea"/><rect x="626" y="784" width="5" height="5" fill="#eef1f5"/><rect x="626" y="789" width="5" height="5" fill="#e0e2e4"/><rect x="626" y="794" width="5" height="5" fill="#e4e4e4"/><rect x="626" y="799" width="5" height="5" fill="#e9e9ea"/><rect x="631" y="784" width="5" height="5" fill="#f0f0f0"/><rect x="631" y="789" width="5" height="5" fill="#e8e8e8"/><rect x="631" y="794" width="5" height="5" fill="#d6d8dc"/><rect x="631" y="799" width="5" height="5" fill="#f2f2f2"/><rect x="636" y="784" width="5" height="5" fill="#f2f2f2"/><rect x="636" y="789" width="5" height="5" fill="#dedad7"/><rect x="636" y="794" width="5" height="5" fill="#eaebec"/><rect x="636" y="799" width="5" height="5" fill="#f6f6f6"/><rect x="646" y="789" width="5" height="5" fill="#e0e2e4"/><rect x="646" y="794" width="5" height="5" fill="#eaebec"/><rect x="651" y="789" width="5" height="5" fill="#dcdcdc"/><rect x="651" y="794" width="5" height="5" fill="#eaebec"/><rect x="656" y="789" width="5" height="5" fill="#d2d4d8"/><rect x="656" y="794" width="5" height="5" fill="#e2dfdc"/><rect x="661" y="789" width="5" height="5" fill="#dadcdf"/><rect x="661" y="794" width="5" height="5" fill="#e8e8e8"/><rect x="666" y="789" width="5" height="5" fill="#dfdfdf"/><rect x="666" y="794" width="5" height="5" fill="#eaeef3"/><rect x="671" y="789" width="5" height="5" fill="#e6e6e6"/><rect x="671" y="794" width="5" height="5" fill="#e6e6e6"/><rect x="676" y="789" width="5" height="5" fill="#ece9e6"/><rect x="676" y="794" width="5" height="5" fill="#d2d4d8"/><rect x="681" y="784" width="5" height="5" fill="#e9e9ea"/><rect x="681" y="789" width="5" height="5" fill="#e6e6e6"/><rect x="681" y="794" width="5" height="5" fill="#d6d8dc"/><rect x="686" y="789" width="5" height="5" fill="#ece9e6"/><rect x="686" y="794" width="5" height="5" fill="#dcdcdc"/><rect x="691" y="789" width="5" height="5" fill="#dadcdf"/><rect x="691" y="794" width="5" height="5" fill="#eaeef3"/><rect x="696" y="789" width="5" height="5" fill="#e0e2e4"/><rect x="696" y="794" width="5" height="5" fill="#e0e2e4"/><rect x="701" y="789" width="5" height="5" fill="#cdd0d5"/><rect x="701" y="794" width="5" height="5" fill="#dadcdf"/><rect x="706" y="789" width="5" height="5" fill="#dfdfdf"/><rect x="706" y="794" width="5" height="5" fill="#dedad7"/><rect x="711" y="789" width="5" height="5" fill="#ece9e6"/><rect x="711" y="794" width="5" height="5" fill="#e2dfdc"/><rect x="716" y="789" width="5" height="5" fill="#e2dfdc"/><rect x="716" y="794" width="5" height="5" fill="#eaebec"/><rect x="721" y="789" width="5" height="5" fill="#eaeef3"/><rect x="721" y="794" width="5" height="5" fill="#e0e2e4"/><rect x="726" y="789" width="5" height="5" fill="#e6e6e6"/><rect x="726" y="794" width="5" height="5" fill="#e6e6e6"/><rect x="731" y="789" width="5" height="5" fill="#e8e8e8"/><rect x="731" y="794" width="5" height="5" fill="#e6e6e6"/><rect x="736" y="789" width="5" height="5" fill="#e8e8e8"/><rect x="736" y="794" width="5" height="5" fill="#eaebec"/><rect x="741" y="789" width="5" height="5" fill="#e4e6ea"/><rect x="741" y="794" width="5" height="5" fill="#ece9e6"/><rect x="746" y="789" width="5" height="5" fill="#e4e4e4"/><rect x="746" y="794" width="5" height="5" fill="#e4e6ea"/><rect x="751" y="789" width="5" height="5" fill="#e2dfdc"/><rect x="751" y="794" width="5" height="5" fill="#e4e4e4"/><rect x="756" y="789" width="5" height="5" fill="#eaeef3"/><rect x="756" y="794" width="5" height="5" fill="#dcdcdc"/><rect x="761" y="789" width="5" height="5" fill="#e6e6e6"/><rect x="761" y="794" width="5" height="5" fill="#d6d8dc"/><rect x="766" y="789" width="5" height="5" fill="#e0e2e4"/><rect x="766" y="794" width="5" height="5" fill="#ece9e6"/><rect x="871" y="789" width="5" height="5" fill="#dfdfdf"/><rect x="871" y="794" width="5" height="5" fill="#e6e6e6"/><rect x="871" y="799" width="5" height="5" fill="#f4f1ee"/><rect x="876" y="789" width="5" height="5" fill="#e4e4e4"/><rect x="876" y="794" width="5" height="5" fill="#dfdfdf"/><rect x="876" y="799" width="5" height="5" fill="#f2f2f2"/><rect x="881" y="789" width="5" height="5" fill="#e4e6ea"/><rect x="881" y="794" width="5" height="5" fill="#dadcdf"/><rect x="886" y="789" width="5" height="5" fill="#e4e6ea"/><rect x="886" y="794" width="5" height="5" fill="#dedfe1"/><rect x="891" y="789" width="5" height="5" fill="#dfdfdf"/><rect x="891" y="794" width="5" height="5" fill="#dedfe1"/><rect x="896" y="784" width="5" height="5" fill="#f3ece8"/><rect x="896" y="789" width="5" height="5" fill="#d2d4d8"/><rect x="896" y="794" width="5" height="5" fill="#dadcdf"/><rect x="901" y="789" width="5" height="5" fill="#dfdfdf"/><rect x="901" y="794" width="5" height="5" fill="#dadcdf"/><rect x="906" y="789" width="5" height="5" fill="#e4e4e4"/><rect x="906" y="794" width="5" height="5" fill="#dee2e6"/><rect x="911" y="784" width="5" height="5" fill="#f3ece8"/><rect x="911" y="789" width="5" height="5" fill="#eaeef3"/><rect x="911" y="794" width="5" height="5" fill="#dedfe1"/><rect x="916" y="784" width="5" height="5" fill="#f0f0f0"/><rect x="916" y="789" width="5" height="5" fill="#e2dfdc"/><rect x="916" y="794" width="5" height="5" fill="#e4e4e4"/><rect x="921" y="789" width="5" height="5" fill="#ece9e6"/><rect x="921" y="794" width="5" height="5" fill="#e2dfdc"/><rect x="926" y="789" width="5" height="5" fill="#e6e6e6"/><rect x="926" y="794" width="5" height="5" fill="#e2dfdc"/><rect x="931" y="784" width="5" height="5" fill="#f6f6f6"/><rect x="931" y="789" width="5" height="5" fill="#e4e6ea"/><rect x="931" y="794" width="5" height="5" fill="#e2dfdc"/><rect x="936" y="789" width="5" height="5" fill="#e2dfdc"/><rect x="936" y="794" width="5" height="5" fill="#dadcdf"/><rect x="936" y="799" width="5" height="5" fill="#f0f0f0"/><rect x="941" y="784" width="5" height="5" fill="#f4f1ee"/><rect x="941" y="789" width="5" height="5" fill="#cdd0d5"/><rect x="941" y="794" width="5" height="5" fill="#e4e4e4"/><rect x="1111" y="789" width="5" height="5" fill="#d2d4d8"/><rect x="1111" y="794" width="5" height="5" fill="#e4e4e4"/><rect x="1116" y="789" width="5" height="5" fill="#d2d4d8"/><rect x="1116" y="794" width="5" height="5" fill="#e0e2e4"/><rect x="1121" y="789" width="5" height="5" fill="#dcdcdc"/><rect x="1121" y="794" width="5" height="5" fill="#eaeef3"/><rect x="1126" y="789" width="5" height="5" fill="#ece9e6"/><rect x="1126" y="794" width="5" height="5" fill="#dcdcdc"/><rect x="1131" y="789" width="5" height="5" fill="#dcdcdc"/><rect x="1131" y="794" width="5" height="5" fill="#e4e6ea"/><rect x="1136" y="789" width="5" height="5" fill="#e0e2e4"/><rect x="1136" y="794" width="5" height="5" fill="#e4e6ea"/><rect x="1141" y="789" width="5" height="5" fill="#dcdcdc"/><rect x="1141" y="794" width="5" height="5" fill="#dedfe1"/><rect x="1146" y="789" width="5" height="5" fill="#d2d4d8"/><rect x="1146" y="794" width="5" height="5" fill="#cdd0d5"/><rect x="1151" y="789" width="5" height="5" fill="#eaeef3"/><rect x="1151" y="794" width="5" height="5" fill="#eaebec"/><rect x="1156" y="789" width="5" height="5" fill="#e2dfdc"/><rect x="1156" y="794" width="5" height="5" fill="#cdd0d5"/><rect x="1161" y="789" width="5" height="5" fill="#e6e6e6"/><rect x="1161" y="794" width="5" height="5" fill="#d6d8dc"/><rect x="1166" y="789" width="5" height="5" fill="#dcdcdc"/><rect x="1166" y="794" width="5" height="5" fill="#e4e4e4"/><rect x="1171" y="789" width="5" height="5" fill="#eaeef3"/><rect x="1171" y="794" width="5" height="5" fill="#ece9e6"/><rect x="1176" y="789" width="5" height="5" fill="#ece9e6"/><rect x="1176" y="794" width="5" height="5" fill="#eaebec"/><rect x="1296" y="789" width="5" height="5" fill="#e4e4e4"/><rect x="1296" y="794" width="5" height="5" fill="#e6e6e6"/><rect x="1296" y="799" width="5" height="5" fill="#f3ece8"/><rect x="1301" y="789" width="5" height="5" fill="#e4e4e4"/><rect x="1301" y="794" width="5" height="5" fill="#d6d8dc"/><rect x="1301" y="799" width="5" height="5" fill="#f0f0f0"/><rect x="1306" y="789" width="5" height="5" fill="#dee2e6"/><rect x="1306" y="794" width="5" height="5" fill="#eaebec"/><rect x="1306" y="799" width="5" height="5" fill="#e9e9ea"/><rect x="1311" y="789" width="5" height="5" fill="#e6e4e0"/><rect x="1311" y="794" width="5" height="5" fill="#dedad7"/><rect x="1311" y="799" width="5" height="5" fill="#f0f0f0"/><rect x="1316" y="789" width="5" height="5" fill="#e6e4e0"/><rect x="1316" y="794" width="5" height="5" fill="#dfdfdf"/><rect x="1316" y="799" width="5" height="5" fill="#f2f2f2"/><rect x="1321" y="789" width="5" height="5" fill="#e2e2e2"/><rect x="1321" y="794" width="5" height="5" fill="#d2d4d8"/><rect x="1321" y="799" width="5" height="5" fill="#f2f2f2"/><rect x="1396" y="789" width="5" height="5" fill="#e8ecf0"/><rect x="1396" y="794" width="5" height="5" fill="#dcdcdc"/><rect x="1396" y="799" width="5" height="5" fill="#f0f0f0"/><rect x="1401" y="789" width="5" height="5" fill="#e8ecf0"/><rect x="1401" y="794" width="5" height="5" fill="#e4e6ea"/><rect x="1401" y="799" width="5" height="5" fill="#eef1f5"/><rect x="1406" y="789" width="5" height="5" fill="#e8ecf0"/><rect x="1406" y="794" width="5" height="5" fill="#e8e8e8"/><rect x="1406" y="799" width="5" height="5" fill="#f6f6f6"/><rect x="1411" y="789" width="5" height="5" fill="#e2e2e2"/><rect x="1411" y="794" width="5" height="5" fill="#e0e2e4"/><rect x="1411" y="799" width="5" height="5" fill="#eef1f5"/><rect x="1416" y="789" width="5" height="5" fill="#e6e4e0"/><rect x="1416" y="794" width="5" height="5" fill="#dcdcdc"/><rect x="1416" y="799" width="5" height="5" fill="#f2f2f2"/><rect x="1421" y="789" width="5" height="5" fill="#e6e4e0"/><rect x="1421" y="794" width="5" height="5" fill="#d2d4d8"/><rect x="1421" y="799" width="5" height="5" fill="#f2f2f2"/><rect x="1511" y="789" width="5" height="5" fill="#e8ecf0"/><rect x="1511" y="794" width="5" height="5" fill="#ece9e6"/><rect x="1511" y="799" width="5" height="5" fill="#f2f2f2"/><rect x="1516" y="789" width="5" height="5" fill="#e2e2e2"/><rect x="1516" y="794" width="5" height="5" fill="#eaeef3"/><rect x="1516" y="799" width="5" height="5" fill="#f2f2f2"/><rect x="1521" y="789" width="5" height="5" fill="#ece8e4"/><rect x="1521" y="794" width="5" height="5" fill="#e4e6ea"/><rect x="1521" y="799" width="5" height="5" fill="#f3ece8"/><rect x="1526" y="789" width="5" height="5" fill="#e8ecf0"/><rect x="1526" y="794" width="5" height="5" fill="#dedfe1"/><rect x="1526" y="799" width="5" height="5" fill="#f2f2f2"/><rect x="1531" y="789" width="5" height="5" fill="#eceef4"/><rect x="1531" y="794" width="5" height="5" fill="#ece9e6"/><rect x="1531" y="799" width="5" height="5" fill="#f2f2f2"/><rect x="1536" y="789" width="5" height="5" fill="#e4e4e4"/><rect x="1536" y="794" width="5" height="5" fill="#e0e2e4"/><rect x="1536" y="799" width="5" height="5" fill="#e9e9ea"/><rect x="226" y="819" width="5" height="5" fill="#f2f2f2"/><rect x="226" y="824" width="5" height="5" fill="#eaeef3"/><rect x="226" y="829" width="5" height="5" fill="#cdd0d5"/><rect x="231" y="824" width="5" height="5" fill="#e4e4e4"/><rect x="231" y="829" width="5" height="5" fill="#ece9e6"/><rect x="236" y="824" width="5" height="5" fill="#dedfe1"/><rect x="236" y="829" width="5" height="5" fill="#e6e6e6"/><rect x="241" y="819" width="5" height="5" fill="#eef1f5"/><rect x="241" y="824" width="5" height="5" fill="#e8e8e8"/><rect x="241" y="829" width="5" height="5" fill="#eaeef3"/><rect x="246" y="819" width="5" height="5" fill="#eef1f5"/><rect x="246" y="824" width="5" height="5" fill="#e6e6e6"/><rect x="246" y="829" width="5" height="5" fill="#e4e4e4"/><rect x="251" y="819" width="5" height="5" fill="#eef1f5"/><rect x="251" y="824" width="5" height="5" fill="#eaeef3"/><rect x="251" y="829" width="5" height="5" fill="#d6d8dc"/><rect x="256" y="824" width="5" height="5" fill="#e4e6ea"/><rect x="256" y="829" width="5" height="5" fill="#e6e6e6"/><rect x="261" y="819" width="5" height="5" fill="#e9e9ea"/><rect x="261" y="824" width="5" height="5" fill="#eaeef3"/><rect x="261" y="829" width="5" height="5" fill="#e8e8e8"/><rect x="361" y="824" width="5" height="5" fill="#e4e4e4"/><rect x="361" y="829" width="5" height="5" fill="#d6d8dc"/><rect x="366" y="824" width="5" height="5" fill="#cdd0d5"/><rect x="366" y="829" width="5" height="5" fill="#dedfe1"/><rect x="371" y="824" width="5" height="5" fill="#eaeef3"/><rect x="371" y="829" width="5" height="5" fill="#cdd0d5"/><rect x="376" y="824" width="5" height="5" fill="#eaeef3"/><rect x="376" y="829" width="5" height="5" fill="#dfdfdf"/><rect x="381" y="824" width="5" height="5" fill="#e4e4e4"/><rect x="381" y="829" width="5" height="5" fill="#eceef4"/><rect x="386" y="824" width="5" height="5" fill="#e4e6ea"/><rect x="386" y="829" width="5" height="5" fill="#eaeef3"/><rect x="391" y="824" width="5" height="5" fill="#e4e6ea"/><rect x="391" y="829" width="5" height="5" fill="#e4e4e4"/><rect x="396" y="824" width="5" height="5" fill="#e4e4e4"/><rect x="396" y="829" width="5" height="5" fill="#ece9e6"/><rect x="401" y="819" width="5" height="5" fill="#f3ece8"/><rect x="401" y="824" width="5" height="5" fill="#dcdcdc"/><rect x="401" y="829" width="5" height="5" fill="#eaeef3"/><rect x="406" y="824" width="5" height="5" fill="#ece9e6"/><rect x="406" y="829" width="5" height="5" fill="#dcdcdc"/><rect x="411" y="819" width="5" height="5" fill="#f3ece8"/><rect x="411" y="824" width="5" height="5" fill="#eaeef3"/><rect x="411" y="829" width="5" height="5" fill="#d2d4d8"/><rect x="416" y="824" width="5" height="5" fill="#eaeef3"/><rect x="416" y="829" width="5" height="5" fill="#eaeef3"/><rect x="421" y="819" width="5" height="5" fill="#f0f0f0"/><rect x="421" y="824" width="5" height="5" fill="#dedad7"/><rect x="421" y="829" width="5" height="5" fill="#e8e8e8"/><rect x="426" y="819" width="5" height="5" fill="#f2f2f2"/><rect x="426" y="824" width="5" height="5" fill="#eaeef3"/><rect x="426" y="829" width="5" height="5" fill="#d6d8dc"/><rect x="431" y="824" width="5" height="5" fill="#e8e8e8"/><rect x="431" y="829" width="5" height="5" fill="#dedad7"/><rect x="436" y="824" width="5" height="5" fill="#ece9e6"/><rect x="436" y="829" width="5" height="5" fill="#e0e2e4"/><rect x="441" y="824" width="5" height="5" fill="#dcdcdc"/><rect x="441" y="829" width="5" height="5" fill="#dfdfdf"/><rect x="446" y="824" width="5" height="5" fill="#dedfe1"/><rect x="446" y="829" width="5" height="5" fill="#e2dfdc"/><rect x="451" y="824" width="5" height="5" fill="#e4e4e4"/><rect x="451" y="829" width="5" height="5" fill="#dedfe1"/><rect x="456" y="824" width="5" height="5" fill="#d2d4d8"/><rect x="456" y="829" width="5" height="5" fill="#e4e6ea"/><rect x="461" y="824" width="5" height="5" fill="#e6e6e6"/><rect x="461" y="829" width="5" height="5" fill="#dedfe1"/><rect x="466" y="824" width="5" height="5" fill="#d2d4d8"/><rect x="466" y="829" width="5" height="5" fill="#e0e2e4"/><rect x="471" y="824" width="5" height="5" fill="#d6d8dc"/><rect x="471" y="829" width="5" height="5" fill="#dedad7"/><rect x="476" y="824" width="5" height="5" fill="#eaebec"/><rect x="476" y="829" width="5" height="5" fill="#eaeef3"/><rect x="481" y="819" width="5" height="5" fill="#f6f6f6"/><rect x="481" y="824" width="5" height="5" fill="#cdd0d5"/><rect x="481" y="829" width="5" height="5" fill="#dadcdf"/><rect x="486" y="824" width="5" height="5" fill="#e2dfdc"/><rect x="486" y="829" width="5" height="5" fill="#e6e6e6"/><rect x="491" y="824" width="5" height="5" fill="#e6e6e6"/><rect x="491" y="829" width="5" height="5" fill="#dcdcdc"/><rect x="496" y="824" width="5" height="5" fill="#e2dfdc"/><rect x="496" y="829" width="5" height="5" fill="#e2dfdc"/><rect x="501" y="819" width="5" height="5" fill="#e9e9ea"/><rect x="501" y="824" width="5" height="5" fill="#dedad7"/><rect x="501" y="829" width="5" height="5" fill="#e0e2e4"/><rect x="506" y="824" width="5" height="5" fill="#dedfe1"/><rect x="506" y="829" width="5" height="5" fill="#eaeef3"/><rect x="511" y="824" width="5" height="5" fill="#dfdfdf"/><rect x="511" y="829" width="5" height="5" fill="#e6e6e6"/><rect x="626" y="819" width="5" height="5" fill="#f3ece8"/><rect x="626" y="824" width="5" height="5" fill="#e4e6ea"/><rect x="626" y="829" width="5" height="5" fill="#dadcdf"/><rect x="626" y="834" width="5" height="5" fill="#f2f2f2"/><rect x="631" y="819" width="5" height="5" fill="#f2f2f2"/><rect x="631" y="824" width="5" height="5" fill="#eaebec"/><rect x="631" y="829" width="5" height="5" fill="#ece9e6"/><rect x="631" y="834" width="5" height="5" fill="#f4f1ee"/><rect x="636" y="819" width="5" height="5" fill="#f2f2f2"/><rect x="636" y="824" width="5" height="5" fill="#cdd0d5"/><rect x="636" y="829" width="5" height="5" fill="#ece9e6"/><rect x="636" y="834" width="5" height="5" fill="#e9e9ea"/><rect x="646" y="824" width="5" height="5" fill="#e0e2e4"/><rect x="646" y="829" width="5" height="5" fill="#dedad7"/><rect x="651" y="824" width="5" height="5" fill="#e4e6ea"/><rect x="651" y="829" width="5" height="5" fill="#dadcdf"/><rect x="656" y="824" width="5" height="5" fill="#dcdcdc"/><rect x="656" y="829" width="5" height="5" fill="#eaeef3"/><rect x="661" y="824" width="5" height="5" fill="#ece9e6"/><rect x="661" y="829" width="5" height="5" fill="#dfdfdf"/><rect x="666" y="824" width="5" height="5" fill="#e0e2e4"/><rect x="666" y="829" width="5" height="5" fill="#dedad7"/><rect x="671" y="824" width="5" height="5" fill="#eaeef3"/><rect x="671" y="829" width="5" height="5" fill="#e2dfdc"/><rect x="676" y="824" width="5" height="5" fill="#dedfe1"/><rect x="676" y="829" width="5" height="5" fill="#dcdcdc"/><rect x="681" y="824" width="5" height="5" fill="#cdd0d5"/><rect x="681" y="829" width="5" height="5" fill="#ece9e6"/><rect x="686" y="824" width="5" height="5" fill="#e6e6e6"/><rect x="686" y="829" width="5" height="5" fill="#cdd0d5"/><rect x="691" y="824" width="5" height="5" fill="#dcdcdc"/><rect x="691" y="829" width="5" height="5" fill="#e4e6ea"/><rect x="696" y="824" width="5" height="5" fill="#dedad7"/><rect x="696" y="829" width="5" height="5" fill="#d2d4d8"/><rect x="701" y="824" width="5" height="5" fill="#e2dfdc"/><rect x="701" y="829" width="5" height="5" fill="#e0e2e4"/><rect x="706" y="824" width="5" height="5" fill="#dadcdf"/><rect x="706" y="829" width="5" height="5" fill="#dedad7"/><rect x="711" y="824" width="5" height="5" fill="#dedfe1"/><rect x="711" y="829" width="5" height="5" fill="#dedfe1"/><rect x="716" y="824" width="5" height="5" fill="#dfdfdf"/><rect x="716" y="829" width="5" height="5" fill="#eaebec"/><rect x="721" y="824" width="5" height="5" fill="#d2d4d8"/><rect x="721" y="829" width="5" height="5" fill="#dfdfdf"/><rect x="726" y="824" width="5" height="5" fill="#e4e6ea"/><rect x="726" y="829" width="5" height="5" fill="#dcdcdc"/><rect x="731" y="824" width="5" height="5" fill="#e4e6ea"/><rect x="731" y="829" width="5" height="5" fill="#dcdcdc"/><rect x="736" y="824" width="5" height="5" fill="#e8e8e8"/><rect x="736" y="829" width="5" height="5" fill="#cdd0d5"/><rect x="741" y="824" width="5" height="5" fill="#dedad7"/><rect x="741" y="829" width="5" height="5" fill="#e4e4e4"/><rect x="746" y="824" width="5" height="5" fill="#eaeef3"/><rect x="746" y="829" width="5" height="5" fill="#dadcdf"/><rect x="751" y="819" width="5" height="5" fill="#f0f0f0"/><rect x="751" y="824" width="5" height="5" fill="#e0e2e4"/><rect x="751" y="829" width="5" height="5" fill="#e6e6e6"/><rect x="756" y="824" width="5" height="5" fill="#ece9e6"/><rect x="756" y="829" width="5" height="5" fill="#eaebec"/><rect x="761" y="824" width="5" height="5" fill="#ece9e6"/><rect x="761" y="829" width="5" height="5" fill="#cdd0d5"/><rect x="766" y="819" width="5" height="5" fill="#f2f2f2"/><rect x="766" y="824" width="5" height="5" fill="#e4e6ea"/><rect x="766" y="829" width="5" height="5" fill="#dcdcdc"/><rect x="871" y="824" width="5" height="5" fill="#e4e4e4"/><rect x="871" y="829" width="5" height="5" fill="#d2d4d8"/><rect x="876" y="824" width="5" height="5" fill="#d2d4d8"/><rect x="876" y="829" width="5" height="5" fill="#e4e4e4"/><rect x="876" y="834" width="5" height="5" fill="#f2f2f2"/><rect x="881" y="824" width="5" height="5" fill="#dedad7"/><rect x="881" y="829" width="5" height="5" fill="#e8e8e8"/><rect x="886" y="824" width="5" height="5" fill="#dfdfdf"/><rect x="886" y="829" width="5" height="5" fill="#d6d8dc"/><rect x="886" y="834" width="5" height="5" fill="#f4f1ee"/><rect x="891" y="824" width="5" height="5" fill="#e2dfdc"/><rect x="891" y="829" width="5" height="5" fill="#ece9e6"/><rect x="896" y="824" width="5" height="5" fill="#eaeef3"/><rect x="896" y="829" width="5" height="5" fill="#d2d4d8"/><rect x="901" y="824" width="5" height="5" fill="#eaeef3"/><rect x="901" y="829" width="5" height="5" fill="#cdd0d5"/><rect x="906" y="824" width="5" height="5" fill="#ece8e4"/><rect x="906" y="829" width="5" height="5" fill="#e8ecf0"/><rect x="906" y="834" width="5" height="5" fill="#f2f2f2"/><rect x="911" y="819" width="5" height="5" fill="#ececec"/><rect x="911" y="824" width="5" height="5" fill="#eaebec"/><rect x="911" y="829" width="5" height="5" fill="#e6e6e6"/><rect x="916" y="824" width="5" height="5" fill="#e0e2e4"/><rect x="916" y="829" width="5" height="5" fill="#dcdcdc"/><rect x="916" y="834" width="5" height="5" fill="#f2f2f2"/><rect x="921" y="824" width="5" height="5" fill="#dadcdf"/><rect x="921" y="829" width="5" height="5" fill="#d2d4d8"/><rect x="921" y="834" width="5" height="5" fill="#f3ece8"/><rect x="926" y="824" width="5" height="5" fill="#dadcdf"/><rect x="926" y="829" width="5" height="5" fill="#dfdfdf"/><rect x="931" y="824" width="5" height="5" fill="#ece9e6"/><rect x="931" y="829" width="5" height="5" fill="#e6e6e6"/><rect x="931" y="834" width="5" height="5" fill="#eef1f5"/><rect x="936" y="824" width="5" height="5" fill="#dadcdf"/><rect x="936" y="829" width="5" height="5" fill="#eaeef3"/><rect x="941" y="824" width="5" height="5" fill="#dfdfdf"/><rect x="941" y="829" width="5" height="5" fill="#e4e6ea"/><rect x="1111" y="819" width="5" height="5" fill="#f3ece8"/><rect x="1111" y="824" width="5" height="5" fill="#e2dfdc"/><rect x="1111" y="829" width="5" height="5" fill="#dadcdf"/><rect x="1116" y="824" width="5" height="5" fill="#eaeef3"/><rect x="1116" y="829" width="5" height="5" fill="#e0e2e4"/><rect x="1121" y="824" width="5" height="5" fill="#e2dfdc"/><rect x="1121" y="829" width="5" height="5" fill="#dcdcdc"/><rect x="1126" y="824" width="5" height="5" fill="#dcdcdc"/><rect x="1126" y="829" width="5" height="5" fill="#d2d4d8"/><rect x="1131" y="824" width="5" height="5" fill="#d2d4d8"/><rect x="1131" y="829" width="5" height="5" fill="#e4e6ea"/><rect x="1136" y="824" width="5" height="5" fill="#cdd0d5"/><rect x="1136" y="829" width="5" height="5" fill="#eaebec"/><rect x="1141" y="824" width="5" height="5" fill="#dfdfdf"/><rect x="1141" y="829" width="5" height="5" fill="#dedfe1"/><rect x="1146" y="824" width="5" height="5" fill="#ece9e6"/><rect x="1146" y="829" width="5" height="5" fill="#e4e6ea"/><rect x="1146" y="834" width="5" height="5" fill="#f3ece8"/><rect x="1151" y="824" width="5" height="5" fill="#dadcdf"/><rect x="1151" y="829" width="5" height="5" fill="#eaeef3"/><rect x="1151" y="834" width="5" height="5" fill="#f2f2f2"/><rect x="1156" y="824" width="5" height="5" fill="#dedad7"/><rect x="1156" y="829" width="5" height="5" fill="#e4e6ea"/><rect x="1161" y="824" width="5" height="5" fill="#ece9e6"/><rect x="1161" y="829" width="5" height="5" fill="#e6e6e6"/><rect x="1166" y="824" width="5" height="5" fill="#e2dfdc"/><rect x="1166" y="829" width="5" height="5" fill="#e6e6e6"/><rect x="1171" y="824" width="5" height="5" fill="#eaeef3"/><rect x="1171" y="829" width="5" height="5" fill="#e6e6e6"/><rect x="1176" y="824" width="5" height="5" fill="#e6e6e6"/><rect x="1176" y="829" width="5" height="5" fill="#d2d4d8"/><rect x="1176" y="834" width="5" height="5" fill="#f3ece8"/><rect x="1296" y="824" width="5" height="5" fill="#e6e4e0"/><rect x="1296" y="829" width="5" height="5" fill="#e0e2e4"/><rect x="1296" y="834" width="5" height="5" fill="#f4f1ee"/><rect x="1301" y="824" width="5" height="5" fill="#dee2e6"/><rect x="1301" y="829" width="5" height="5" fill="#dadcdf"/><rect x="1301" y="834" width="5" height="5" fill="#f6f6f6"/><rect x="1306" y="824" width="5" height="5" fill="#e8ecf0"/><rect x="1306" y="829" width="5" height="5" fill="#eaeef3"/><rect x="1306" y="834" width="5" height="5" fill="#f6f6f6"/><rect x="1311" y="824" width="5" height="5" fill="#eceef4"/><rect x="1311" y="829" width="5" height="5" fill="#eaebec"/><rect x="1311" y="834" width="5" height="5" fill="#f3ece8"/><rect x="1316" y="824" width="5" height="5" fill="#dee2e6"/><rect x="1316" y="829" width="5" height="5" fill="#e6e6e6"/><rect x="1316" y="834" width="5" height="5" fill="#f3ece8"/><rect x="1321" y="824" width="5" height="5" fill="#e6e4e0"/><rect x="1321" y="829" width="5" height="5" fill="#d2d4d8"/><rect x="1321" y="834" width="5" height="5" fill="#f3ece8"/><rect x="1396" y="824" width="5" height="5" fill="#e6e4e0"/><rect x="1396" y="829" width="5" height="5" fill="#dedad7"/><rect x="1396" y="834" width="5" height="5" fill="#e9e9ea"/><rect x="1401" y="824" width="5" height="5" fill="#dee2e6"/><rect x="1401" y="829" width="5" height="5" fill="#e4e6ea"/><rect x="1401" y="834" width="5" height="5" fill="#f6f6f6"/><rect x="1406" y="824" width="5" height="5" fill="#ece8e4"/><rect x="1406" y="829" width="5" height="5" fill="#eaeef3"/><rect x="1406" y="834" width="5" height="5" fill="#eef1f5"/><rect x="1411" y="824" width="5" height="5" fill="#eceef4"/><rect x="1411" y="829" width="5" height="5" fill="#eaebec"/><rect x="1411" y="834" width="5" height="5" fill="#ececec"/><rect x="1416" y="824" width="5" height="5" fill="#ece8e4"/><rect x="1416" y="829" width="5" height="5" fill="#e2dfdc"/><rect x="1416" y="834" width="5" height="5" fill="#eef1f5"/><rect x="1421" y="824" width="5" height="5" fill="#ece8e4"/><rect x="1421" y="829" width="5" height="5" fill="#dadcdf"/><rect x="1421" y="834" width="5" height="5" fill="#ececec"/><rect x="1511" y="824" width="5" height="5" fill="#dee2e6"/><rect x="1511" y="829" width="5" height="5" fill="#e4e6ea"/><rect x="1511" y="834" width="5" height="5" fill="#f4f1ee"/><rect x="1516" y="824" width="5" height="5" fill="#dee2e6"/><rect x="1516" y="829" width="5" height="5" fill="#e4e6ea"/><rect x="1516" y="834" width="5" height="5" fill="#f6f6f6"/><rect x="1521" y="824" width="5" height="5" fill="#e8ecf0"/><rect x="1521" y="829" width="5" height="5" fill="#dcdcdc"/><rect x="1521" y="834" width="5" height="5" fill="#f0f0f0"/><rect x="1526" y="824" width="5" height="5" fill="#eceef4"/><rect x="1526" y="829" width="5" height="5" fill="#d2d4d8"/><rect x="1526" y="834" width="5" height="5" fill="#f3ece8"/><rect x="1531" y="824" width="5" height="5" fill="#e2e2e2"/><rect x="1531" y="829" width="5" height="5" fill="#dedfe1"/><rect x="1531" y="834" width="5" height="5" fill="#eef1f5"/><rect x="1536" y="824" width="5" height="5" fill="#e2e2e2"/><rect x="1536" y="829" width="5" height="5" fill="#dadcdf"/><rect x="1536" y="834" width="5" height="5" fill="#f6f6f6"/><rect x="223" y="384" width="1346" height="5" fill="#f9f9f9"/><rect x="220" y="385" width="3" height="1" fill="#e4e7ea"/><rect x="223" y="419" width="1346" height="5" fill="#f9f9f9"/><rect x="220" y="420" width="3" height="1" fill="#e4e7ea"/><rect x="223" y="454" width="1346" height="5" fill="#f9f9f9"/><rect x="220" y="456" width="3" height="1" fill="#e4e7ea"/><rect x="223" y="489" width="1346" height="5" fill="#f9f9f9"/><rect x="220" y="491" width="3" height="1" fill="#e4e7ea"/><rect x="223" y="524" width="1346" height="5" fill="#f9f9f9"/><rect x="220" y="527" width="3" height="1" fill="#e4e7ea"/><rect x="223" y="559" width="1346" height="5" fill="#f9f9f9"/><rect x="220" y="563" width="3" height="1" fill="#e4e7ea"/><rect x="223" y="594" width="1346" height="5" fill="#f9f9f9"/><rect x="220" y="598" width="3" height="1" fill="#e4e7ea"/><rect x="223" y="634" width="1346" height="5" fill="#f9f9f9"/><rect x="220" y="634" width="3" height="1" fill="#e4e7ea"/><rect x="223" y="669" width="1346" height="5" fill="#f9f9f9"/><rect x="220" y="669" width="3" height="1" fill="#e4e7ea"/><rect x="223" y="704" width="1346" height="5" fill="#f9f9f9"/><rect x="220" y="705" width="3" height="1" fill="#e4e7ea"/><rect x="223" y="739" width="1346" height="5" fill="#f9f9f9"/><rect x="220" y="740" width="3" height="1" fill="#e4e7ea"/><rect x="223" y="774" width="1346" height="5" fill="#f9f9f9"/><rect x="220" y="776" width="3" height="1" fill="#e4e7ea"/><rect x="223" y="809" width="1346" height="5" fill="#f9f9f9"/><rect x="220" y="812" width="3" height="1" fill="#e4e7ea"/><rect x="223" y="844" width="1346" height="5" fill="#f9f9f9"/><rect x="220" y="847" width="3" height="1" fill="#e4e7ea"/></svg>
</body></html>
